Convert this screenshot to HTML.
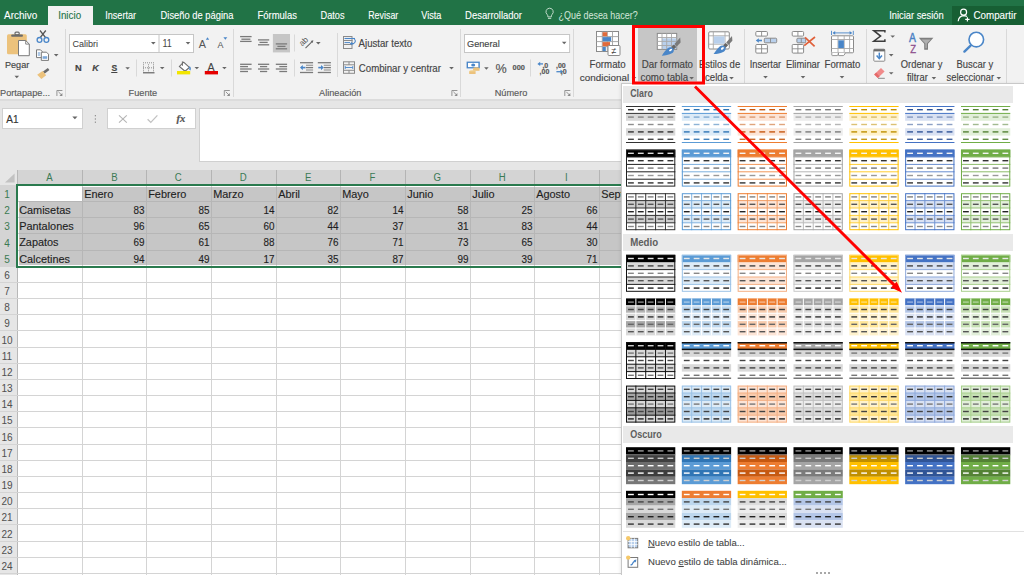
<!DOCTYPE html><html><head><meta charset="utf-8"><style>
html,body{margin:0;padding:0;}
body{width:1024px;height:575px;overflow:hidden;position:relative;background:#fff;font-family:"Liberation Sans", sans-serif;}
.r{position:absolute;}
.t{position:absolute;white-space:nowrap;line-height:1;}
</style></head><body><div class="r" style="left:0px;top:0px;width:1024px;height:25px;background:#217346;"></div><div class="r" style="left:48px;top:6px;width:45px;height:19px;background:#f2f2f2;"></div><div class="r" style="left:952px;top:6px;width:72px;height:19px;background:#175f34;"></div><div class="r" style="left:0px;top:25px;width:1024px;height:74px;background:#f2f2f2;"></div><div class="r" style="left:0px;top:99px;width:1024px;height:2px;background:#dcdcdc;"></div><div class="r" style="left:0px;top:101px;width:1024px;height:69px;background:#e6e6e6;"></div><div class="r" style="left:2px;top:108px;width:81px;height:21px;background:#ffffff;box-sizing:border-box;border:1px solid #d0d0d0;"></div><div class="r" style="left:107px;top:108px;width:89px;height:21px;background:#ffffff;box-sizing:border-box;border:1px solid #d0d0d0;"></div><div class="r" style="left:199px;top:108px;width:825px;height:54px;background:#ffffff;box-sizing:border-box;border:1px solid #d0d0d0;"></div><div class="r" style="left:0px;top:170px;width:1024px;height:15px;background:#d4d4d4;"></div><div class="r" style="left:0px;top:170px;width:17px;height:15px;background:#e6e6e6;"></div><div class="r" style="left:0px;top:185px;width:17px;height:390px;background:#e6e6e6;"></div><div class="r" style="left:0px;top:185px;width:17px;height:81px;background:#d4d4d4;"></div><div class="r" style="left:17px;top:170px;width:1px;height:405px;background:#b8b8b8;"></div><div class="r" style="left:18px;top:185px;width:1006px;height:390px;background:#ffffff;"></div><div class="r" style="left:18px;top:186px;width:1006px;height:80px;background:#ffffff;"></div><div class="r" style="left:19px;top:187px;width:1005px;height:78px;background:#c6c6c6;"></div><div class="r" style="left:82px;top:170px;width:1px;height:405px;background:#d4d4d4"></div><div class="r" style="left:146px;top:170px;width:1px;height:405px;background:#d4d4d4"></div><div class="r" style="left:211px;top:170px;width:1px;height:405px;background:#d4d4d4"></div><div class="r" style="left:276px;top:170px;width:1px;height:405px;background:#d4d4d4"></div><div class="r" style="left:340px;top:170px;width:1px;height:405px;background:#d4d4d4"></div><div class="r" style="left:405px;top:170px;width:1px;height:405px;background:#d4d4d4"></div><div class="r" style="left:470px;top:170px;width:1px;height:405px;background:#d4d4d4"></div><div class="r" style="left:534px;top:170px;width:1px;height:405px;background:#d4d4d4"></div><div class="r" style="left:599px;top:170px;width:1px;height:405px;background:#d4d4d4"></div><div class="r" style="left:664px;top:170px;width:1px;height:405px;background:#d4d4d4"></div><div class="r" style="left:728px;top:170px;width:1px;height:405px;background:#d4d4d4"></div><div class="r" style="left:793px;top:170px;width:1px;height:405px;background:#d4d4d4"></div><div class="r" style="left:858px;top:170px;width:1px;height:405px;background:#d4d4d4"></div><div class="r" style="left:922px;top:170px;width:1px;height:405px;background:#d4d4d4"></div><div class="r" style="left:987px;top:170px;width:1px;height:405px;background:#d4d4d4"></div><div class="r" style="left:0px;top:201px;width:1024px;height:1px;background:#d4d4d4"></div><div class="r" style="left:0px;top:217px;width:1024px;height:1px;background:#d4d4d4"></div><div class="r" style="left:0px;top:233px;width:1024px;height:1px;background:#d4d4d4"></div><div class="r" style="left:0px;top:250px;width:1024px;height:1px;background:#d4d4d4"></div><div class="r" style="left:0px;top:266px;width:1024px;height:1px;background:#d4d4d4"></div><div class="r" style="left:0px;top:282px;width:1024px;height:1px;background:#d4d4d4"></div><div class="r" style="left:0px;top:298px;width:1024px;height:1px;background:#d4d4d4"></div><div class="r" style="left:0px;top:314px;width:1024px;height:1px;background:#d4d4d4"></div><div class="r" style="left:0px;top:330px;width:1024px;height:1px;background:#d4d4d4"></div><div class="r" style="left:0px;top:347px;width:1024px;height:1px;background:#d4d4d4"></div><div class="r" style="left:0px;top:363px;width:1024px;height:1px;background:#d4d4d4"></div><div class="r" style="left:0px;top:379px;width:1024px;height:1px;background:#d4d4d4"></div><div class="r" style="left:0px;top:395px;width:1024px;height:1px;background:#d4d4d4"></div><div class="r" style="left:0px;top:411px;width:1024px;height:1px;background:#d4d4d4"></div><div class="r" style="left:0px;top:427px;width:1024px;height:1px;background:#d4d4d4"></div><div class="r" style="left:0px;top:444px;width:1024px;height:1px;background:#d4d4d4"></div><div class="r" style="left:0px;top:460px;width:1024px;height:1px;background:#d4d4d4"></div><div class="r" style="left:0px;top:476px;width:1024px;height:1px;background:#d4d4d4"></div><div class="r" style="left:0px;top:492px;width:1024px;height:1px;background:#d4d4d4"></div><div class="r" style="left:0px;top:508px;width:1024px;height:1px;background:#d4d4d4"></div><div class="r" style="left:0px;top:524px;width:1024px;height:1px;background:#d4d4d4"></div><div class="r" style="left:0px;top:541px;width:1024px;height:1px;background:#d4d4d4"></div><div class="r" style="left:0px;top:557px;width:1024px;height:1px;background:#d4d4d4"></div><div class="r" style="left:0px;top:573px;width:1024px;height:1px;background:#d4d4d4"></div><div class="r" style="left:82px;top:187px;width:1px;height:78px;background:#b6b6b6;"></div><div class="r" style="left:146px;top:187px;width:1px;height:78px;background:#b6b6b6;"></div><div class="r" style="left:211px;top:187px;width:1px;height:78px;background:#b6b6b6;"></div><div class="r" style="left:276px;top:187px;width:1px;height:78px;background:#b6b6b6;"></div><div class="r" style="left:340px;top:187px;width:1px;height:78px;background:#b6b6b6;"></div><div class="r" style="left:405px;top:187px;width:1px;height:78px;background:#b6b6b6;"></div><div class="r" style="left:470px;top:187px;width:1px;height:78px;background:#b6b6b6;"></div><div class="r" style="left:534px;top:187px;width:1px;height:78px;background:#b6b6b6;"></div><div class="r" style="left:599px;top:187px;width:1px;height:78px;background:#b6b6b6;"></div><div class="r" style="left:664px;top:187px;width:1px;height:78px;background:#b6b6b6;"></div><div class="r" style="left:728px;top:187px;width:1px;height:78px;background:#b6b6b6;"></div><div class="r" style="left:793px;top:187px;width:1px;height:78px;background:#b6b6b6;"></div><div class="r" style="left:858px;top:187px;width:1px;height:78px;background:#b6b6b6;"></div><div class="r" style="left:922px;top:187px;width:1px;height:78px;background:#b6b6b6;"></div><div class="r" style="left:987px;top:187px;width:1px;height:78px;background:#b6b6b6;"></div><div class="r" style="left:19px;top:201px;width:1005px;height:1px;background:#b6b6b6;"></div><div class="r" style="left:19px;top:217px;width:1005px;height:1px;background:#b6b6b6;"></div><div class="r" style="left:19px;top:233px;width:1005px;height:1px;background:#b6b6b6;"></div><div class="r" style="left:19px;top:250px;width:1005px;height:1px;background:#b6b6b6;"></div><div class="r" style="left:18px;top:186px;width:64px;height:15px;background:#ffffff;"></div><div class="r" style="left:82px;top:170px;width:1px;height:15px;background:#b4b4b4;"></div><div class="r" style="left:146px;top:170px;width:1px;height:15px;background:#b4b4b4;"></div><div class="r" style="left:211px;top:170px;width:1px;height:15px;background:#b4b4b4;"></div><div class="r" style="left:276px;top:170px;width:1px;height:15px;background:#b4b4b4;"></div><div class="r" style="left:340px;top:170px;width:1px;height:15px;background:#b4b4b4;"></div><div class="r" style="left:405px;top:170px;width:1px;height:15px;background:#b4b4b4;"></div><div class="r" style="left:470px;top:170px;width:1px;height:15px;background:#b4b4b4;"></div><div class="r" style="left:534px;top:170px;width:1px;height:15px;background:#b4b4b4;"></div><div class="r" style="left:599px;top:170px;width:1px;height:15px;background:#b4b4b4;"></div><div class="r" style="left:664px;top:170px;width:1px;height:15px;background:#b4b4b4;"></div><div class="r" style="left:728px;top:170px;width:1px;height:15px;background:#b4b4b4;"></div><div class="r" style="left:793px;top:170px;width:1px;height:15px;background:#b4b4b4;"></div><div class="r" style="left:858px;top:170px;width:1px;height:15px;background:#b4b4b4;"></div><div class="r" style="left:922px;top:170px;width:1px;height:15px;background:#b4b4b4;"></div><div class="r" style="left:987px;top:170px;width:1px;height:15px;background:#b4b4b4;"></div><div class="r" style="left:16px;top:184px;width:1008px;height:2px;background:#2a7a4e;"></div><div class="r" style="left:16px;top:184px;width:2px;height:84px;background:#2a7a4e;"></div><div class="r" style="left:16px;top:266px;width:1008px;height:2px;background:#2a7a4e;"></div><svg class="r" style="left:0;top:0" width="1024" height="200" viewBox="0 0 1024 200"><line x1="65.5" y1="29" x2="65.5" y2="97" stroke="#d9d9d9" stroke-width="1" stroke-linecap="butt"/><line x1="233.5" y1="29" x2="233.5" y2="97" stroke="#d9d9d9" stroke-width="1" stroke-linecap="butt"/><line x1="460.5" y1="29" x2="460.5" y2="97" stroke="#d9d9d9" stroke-width="1" stroke-linecap="butt"/><line x1="573.5" y1="29" x2="573.5" y2="97" stroke="#d9d9d9" stroke-width="1" stroke-linecap="butt"/><line x1="744.5" y1="29" x2="744.5" y2="97" stroke="#d9d9d9" stroke-width="1" stroke-linecap="butt"/><line x1="866.5" y1="29" x2="866.5" y2="97" stroke="#d9d9d9" stroke-width="1" stroke-linecap="butt"/><line x1="1006.5" y1="29" x2="1006.5" y2="97" stroke="#d9d9d9" stroke-width="1" stroke-linecap="butt"/><line x1="136.5" y1="59.5" x2="136.5" y2="76.5" stroke="#d9d9d9" stroke-width="1" stroke-linecap="butt"/><line x1="171.5" y1="59.5" x2="171.5" y2="76.5" stroke="#d9d9d9" stroke-width="1" stroke-linecap="butt"/><line x1="294.5" y1="34.5" x2="294.5" y2="51.5" stroke="#d9d9d9" stroke-width="1" stroke-linecap="butt"/><line x1="294.5" y1="59.5" x2="294.5" y2="76.5" stroke="#d9d9d9" stroke-width="1" stroke-linecap="butt"/><line x1="337.5" y1="33" x2="337.5" y2="77" stroke="#d9d9d9" stroke-width="1" stroke-linecap="butt"/><line x1="530.5" y1="59.5" x2="530.5" y2="76.5" stroke="#d9d9d9" stroke-width="1" stroke-linecap="butt"/><rect x="7" y="34.3" width="19.8" height="20" rx="1.5" fill="#ecc27c" /><rect x="11.2" y="34.4" width="11.7" height="2.4" rx="0.8" fill="#6b6b6b" /><rect x="15.0" y="32.2" width="4.2" height="2.6" rx="1" fill="none" stroke="#6b6b6b" stroke-width="1.2" /><path d="M18.5,40.5 h7.2 l3.6,3.6 v11.6 h-10.8 z" fill="#ffffff" stroke="#7a7a7a" stroke-width="1"/><path d="M25.7,40.5 v3.6 h3.6" fill="none" stroke="#7a7a7a" stroke-width="0.9"/><polygon points="14.50,75.85 19.10,75.85 16.80,78.15" fill="#666666"/><line x1="40" y1="30.5" x2="45.6" y2="37.6" stroke="#555555" stroke-width="1.3" stroke-linecap="butt"/><line x1="45.8" y1="30.5" x2="40.2" y2="37.6" stroke="#555555" stroke-width="1.3" stroke-linecap="butt"/><circle cx="39.5" cy="39.9" r="2.4" fill="none" stroke="#4a86c8" stroke-width="1.3"/><circle cx="46.4" cy="39.9" r="2.4" fill="none" stroke="#4a86c8" stroke-width="1.3"/><path d="M36.5,49.8 h4 l1.8,1.8 v6 h-5.8 z" fill="#fff" stroke="#7a7a7a" stroke-width="1"/><line x1="37.8" y1="53" x2="40.2" y2="53" stroke="#4a86c8" stroke-width="0.9" stroke-linecap="butt"/><line x1="37.8" y1="55" x2="40.2" y2="55" stroke="#4a86c8" stroke-width="0.9" stroke-linecap="butt"/><path d="M41.3,52.2 h5.2 l2,2 v6.2 h-7.2 z" fill="#fff" stroke="#7a7a7a" stroke-width="1"/><rect x="42.6" y="56.2" width="4.6" height="2.6" rx="0" fill="#7ea9d9" /><polygon points="53.90,54.00 58.50,54.00 56.20,56.40" fill="#666666"/><line x1="48.6" y1="69" x2="43.8" y2="72.6" stroke="#6b6b6b" stroke-width="2.6" stroke-linecap="butt"/><polygon points="37.2,74.8 42.6,71.0 46.2,75.2 41.4,79.0" fill="#ecc27c"/><path d="M56.9,96 v-5.5 h5.5" fill="none" stroke="#8a8a8a" stroke-width="0.9"/><line x1="58.4" y1="91.8" x2="62.0" y2="95.4" stroke="#8a8a8a" stroke-width="0.9" stroke-linecap="butt"/><polygon points="62.4,96 59.4,96 62.4,93" fill="#8a8a8a"/><path d="M224.3,96 v-5.5 h5.5" fill="none" stroke="#8a8a8a" stroke-width="0.9"/><line x1="225.8" y1="91.8" x2="229.4" y2="95.4" stroke="#8a8a8a" stroke-width="0.9" stroke-linecap="butt"/><polygon points="229.8,96 226.8,96 229.8,93" fill="#8a8a8a"/><path d="M451.9,96 v-5.5 h5.5" fill="none" stroke="#8a8a8a" stroke-width="0.9"/><line x1="453.4" y1="91.8" x2="457.0" y2="95.4" stroke="#8a8a8a" stroke-width="0.9" stroke-linecap="butt"/><polygon points="457.4,96 454.4,96 457.4,93" fill="#8a8a8a"/><path d="M564.8,96 v-5.5 h5.5" fill="none" stroke="#8a8a8a" stroke-width="0.9"/><line x1="566.3" y1="91.8" x2="569.9" y2="95.4" stroke="#8a8a8a" stroke-width="0.9" stroke-linecap="butt"/><polygon points="570.3,96 567.3,96 570.3,93" fill="#8a8a8a"/><rect x="69.5" y="34.5" width="124" height="18" rx="0" fill="#ffffff" stroke="#c6c6c6" stroke-width="1" /><line x1="159" y1="34.5" x2="159" y2="52.5" stroke="#c6c6c6" stroke-width="1" stroke-linecap="butt"/><polygon points="151.00,42.00 155.60,42.00 153.30,44.40" fill="#666666"/><polygon points="185.70,42.00 190.30,42.00 188.00,44.40" fill="#666666"/><polygon points="205.8,39.7 209.2,39.7 207.5,37.2" fill="#4a86c8"/><polygon points="223.4,37.2 227.3,37.2 225.35,39.7" fill="#4a86c8"/><rect x="111.2" y="72.0" width="6.2" height="1.0" rx="0" fill="#444444" /><polygon points="125.30,67.20 129.90,67.20 127.60,69.60" fill="#666666"/><g fill="#8f8f8f"><rect x="143.0" y="62.3" width="1" height="1"/><rect x="145.0" y="62.3" width="1" height="1"/><rect x="147.0" y="62.3" width="1" height="1"/><rect x="149.0" y="62.3" width="1" height="1"/><rect x="151.0" y="62.3" width="1" height="1"/><rect x="153.0" y="62.3" width="1" height="1"/><rect x="143.0" y="67.3" width="1" height="1"/><rect x="145.0" y="67.3" width="1" height="1"/><rect x="147.0" y="67.3" width="1" height="1"/><rect x="149.0" y="67.3" width="1" height="1"/><rect x="151.0" y="67.3" width="1" height="1"/><rect x="153.0" y="67.3" width="1" height="1"/><rect x="143.0" y="64.3" width="1" height="1"/><rect x="143.0" y="66.3" width="1" height="1"/><rect x="143.0" y="68.3" width="1" height="1"/><rect x="143.0" y="70.3" width="1" height="1"/><rect x="148.0" y="64.3" width="1" height="1"/><rect x="148.0" y="66.3" width="1" height="1"/><rect x="148.0" y="68.3" width="1" height="1"/><rect x="148.0" y="70.3" width="1" height="1"/><rect x="153.0" y="64.3" width="1" height="1"/><rect x="153.0" y="66.3" width="1" height="1"/><rect x="153.0" y="68.3" width="1" height="1"/><rect x="153.0" y="70.3" width="1" height="1"/></g><line x1="143" y1="72.8" x2="154.5" y2="72.8" stroke="#555555" stroke-width="1.1" stroke-linecap="butt"/><polygon points="159.90,66.90 164.50,66.90 162.20,69.30" fill="#666666"/><polygon points="183.6,62.2 189.4,67.4 185.0,71.2 179.4,66.4" fill="#ffffff" stroke="#6b6b6b" stroke-width="1.1"/><line x1="182.4" y1="61.4" x2="182.4" y2="65.8" stroke="#6b6b6b" stroke-width="1.0" stroke-linecap="butt"/><path d="M189.3,66.8 q1.6,1.6 0.6,3.4" fill="none" stroke="#4a86c8" stroke-width="1.6"/><rect x="177" y="71" width="13.2" height="3.4" rx="0" fill="#f2e500" /><polygon points="194.50,66.90 199.10,66.90 196.80,69.30" fill="#666666"/><rect x="204.8" y="71" width="13.2" height="3.4" rx="0" fill="#e60000" /><polygon points="222.10,66.90 226.70,66.90 224.40,69.30" fill="#666666"/><line x1="240.1" y1="36.6" x2="251.6" y2="36.6" stroke="#7a7a7a" stroke-width="1.3" stroke-linecap="butt"/><line x1="241.4" y1="39.2" x2="250.4" y2="39.2" stroke="#7a7a7a" stroke-width="1.3" stroke-linecap="butt"/><line x1="240.1" y1="41.4" x2="251.6" y2="41.4" stroke="#7a7a7a" stroke-width="1.3" stroke-linecap="butt"/><line x1="258" y1="39.9" x2="269.2" y2="39.9" stroke="#7a7a7a" stroke-width="1.3" stroke-linecap="butt"/><line x1="259.5" y1="42.4" x2="267.7" y2="42.4" stroke="#7a7a7a" stroke-width="1.3" stroke-linecap="butt"/><line x1="258" y1="44.8" x2="269.2" y2="44.8" stroke="#7a7a7a" stroke-width="1.3" stroke-linecap="butt"/><rect x="272.9" y="34" width="17.1" height="18.4" rx="0" fill="#c6c6c6" /><line x1="275.8" y1="43.9" x2="287.1" y2="43.9" stroke="#7a7a7a" stroke-width="1.3" stroke-linecap="butt"/><line x1="277.4" y1="46.4" x2="285.5" y2="46.4" stroke="#7a7a7a" stroke-width="1.3" stroke-linecap="butt"/><line x1="275.8" y1="48.8" x2="287.1" y2="48.8" stroke="#7a7a7a" stroke-width="1.3" stroke-linecap="butt"/><line x1="240.1" y1="64.3" x2="251.6" y2="64.3" stroke="#7a7a7a" stroke-width="1.3" stroke-linecap="butt"/><line x1="240.1" y1="66.6" x2="248" y2="66.6" stroke="#7a7a7a" stroke-width="1.3" stroke-linecap="butt"/><line x1="240.1" y1="69" x2="251.6" y2="69" stroke="#7a7a7a" stroke-width="1.3" stroke-linecap="butt"/><line x1="240.1" y1="71.5" x2="248" y2="71.5" stroke="#7a7a7a" stroke-width="1.3" stroke-linecap="butt"/><line x1="258" y1="64.3" x2="269.2" y2="64.3" stroke="#7a7a7a" stroke-width="1.3" stroke-linecap="butt"/><line x1="260" y1="66.6" x2="267.2" y2="66.6" stroke="#7a7a7a" stroke-width="1.3" stroke-linecap="butt"/><line x1="258" y1="69" x2="269.2" y2="69" stroke="#7a7a7a" stroke-width="1.3" stroke-linecap="butt"/><line x1="260" y1="71.5" x2="267.2" y2="71.5" stroke="#7a7a7a" stroke-width="1.3" stroke-linecap="butt"/><line x1="275.8" y1="64.3" x2="287.1" y2="64.3" stroke="#7a7a7a" stroke-width="1.3" stroke-linecap="butt"/><line x1="279.3" y1="66.6" x2="287.1" y2="66.6" stroke="#7a7a7a" stroke-width="1.3" stroke-linecap="butt"/><line x1="275.8" y1="69" x2="287.1" y2="69" stroke="#7a7a7a" stroke-width="1.3" stroke-linecap="butt"/><line x1="279.3" y1="71.5" x2="287.1" y2="71.5" stroke="#7a7a7a" stroke-width="1.3" stroke-linecap="butt"/><text x="0" y="0" transform="translate(302.2,46.6) rotate(-45)" font-family="Liberation Sans" font-size="8.2" fill="#555555">ab</text><line x1="305.5" y1="48.2" x2="312.6" y2="41.1" stroke="#666666" stroke-width="1.1" stroke-linecap="butt"/><polygon points="313.4,40.3 310.6,41.0 312.7,43.1" fill="#666666"/><polygon points="316.00,42.00 320.60,42.00 318.30,44.40" fill="#666666"/><line x1="300" y1="62.7" x2="313.1" y2="62.7" stroke="#7a7a7a" stroke-width="1.3" stroke-linecap="butt"/><line x1="306" y1="65.3" x2="313.1" y2="65.3" stroke="#a0a0a0" stroke-width="1.3" stroke-linecap="butt"/><line x1="306" y1="67.6" x2="313.1" y2="67.6" stroke="#7a7a7a" stroke-width="1.3" stroke-linecap="butt"/><line x1="306" y1="70.0" x2="313.1" y2="70.0" stroke="#a0a0a0" stroke-width="1.3" stroke-linecap="butt"/><line x1="300" y1="72.5" x2="313.1" y2="72.5" stroke="#7a7a7a" stroke-width="1.3" stroke-linecap="butt"/><line x1="301.5" y1="67.6" x2="305.5" y2="67.6" stroke="#4a86c8" stroke-width="1.6" stroke-linecap="butt"/><polygon points="300,67.6 302.8,65.0 302.8,70.2" fill="#4a86c8"/><line x1="317.8" y1="62.7" x2="330.90000000000003" y2="62.7" stroke="#7a7a7a" stroke-width="1.3" stroke-linecap="butt"/><line x1="323.8" y1="65.3" x2="330.90000000000003" y2="65.3" stroke="#a0a0a0" stroke-width="1.3" stroke-linecap="butt"/><line x1="323.8" y1="67.6" x2="330.90000000000003" y2="67.6" stroke="#7a7a7a" stroke-width="1.3" stroke-linecap="butt"/><line x1="323.8" y1="70.0" x2="330.90000000000003" y2="70.0" stroke="#a0a0a0" stroke-width="1.3" stroke-linecap="butt"/><line x1="317.8" y1="72.5" x2="330.90000000000003" y2="72.5" stroke="#7a7a7a" stroke-width="1.3" stroke-linecap="butt"/><line x1="318.3" y1="67.6" x2="321.8" y2="67.6" stroke="#4a86c8" stroke-width="1.6" stroke-linecap="butt"/><polygon points="323.8,67.6 321.0,65.0 321.0,70.2" fill="#4a86c8"/><rect x="343.5" y="36.5" width="8.5" height="4" rx="0" fill="none" stroke="#8a8a8a" stroke-width="1" /><rect x="343.5" y="40.5" width="8.5" height="4" rx="0" fill="none" stroke="#8a8a8a" stroke-width="1" /><rect x="343.5" y="44.5" width="8.5" height="4" rx="0" fill="none" stroke="#8a8a8a" stroke-width="1" /><line x1="344.5" y1="38.5" x2="355" y2="38.5" stroke="#4a86c8" stroke-width="1.1" stroke-linecap="butt"/><line x1="344.5" y1="42.6" x2="350" y2="42.6" stroke="#4a86c8" stroke-width="1.0" stroke-linecap="butt"/><path d="M354.4,39 q2.2,2.6 -0.8,4.6 h-2.8" fill="none" stroke="#4a86c8" stroke-width="1.1"/><polygon points="349.8,43.6 352.2,41.8 352.2,45.4" fill="#4a86c8"/><rect x="343.5" y="61.8" width="11" height="11.5" rx="0" fill="none" stroke="#8a8a8a" stroke-width="1" /><line x1="343.5" y1="64.8" x2="354.5" y2="64.8" stroke="#8a8a8a" stroke-width="1" stroke-linecap="butt"/><line x1="343.5" y1="70.3" x2="354.5" y2="70.3" stroke="#8a8a8a" stroke-width="1" stroke-linecap="butt"/><line x1="349" y1="61.8" x2="349" y2="64.8" stroke="#8a8a8a" stroke-width="1" stroke-linecap="butt"/><line x1="349" y1="70.3" x2="349" y2="73.3" stroke="#8a8a8a" stroke-width="1" stroke-linecap="butt"/><line x1="345.2" y1="67.5" x2="352.8" y2="67.5" stroke="#4a86c8" stroke-width="0.9" stroke-linecap="butt"/><line x1="345.2" y1="66" x2="345.2" y2="69" stroke="#4a86c8" stroke-width="0.9" stroke-linecap="butt"/><line x1="352.8" y1="66" x2="352.8" y2="69" stroke="#4a86c8" stroke-width="0.9" stroke-linecap="butt"/><polygon points="449.20,67.00 453.80,67.00 451.50,69.40" fill="#666666"/><rect x="464.5" y="34.5" width="105.1" height="18" rx="0" fill="#ffffff" stroke="#c6c6c6" stroke-width="1" /><polygon points="561.90,41.80 566.50,41.80 564.20,44.20" fill="#666666"/><rect x="466.6" y="61.6" width="13.2" height="6.8" rx="0" fill="#4a86c8" /><rect x="468.0" y="62.9" width="10.4" height="4.2" rx="0" fill="#ffffff" /><ellipse cx="473.2" cy="65" rx="2" ry="1.6" fill="#4a86c8"/><ellipse cx="476.3" cy="68.6" rx="3.2" ry="1.4" fill="#ecc27c"/><rect x="473.1" y="68.6" width="6.4" height="2.2" fill="#ecc27c"/><ellipse cx="472.4" cy="71.6" rx="3.2" ry="1.4" fill="#f0cf8e"/><rect x="469.2" y="71.6" width="6.4" height="2.4" fill="#ecc27c"/><polygon points="484.10,67.30 488.70,67.30 486.40,69.70" fill="#666666"/><polygon points="537.4,63.9 540.2,61.7 540.2,66.1" fill="#4a86c8"/><line x1="539.5" y1="63.9" x2="543" y2="63.9" stroke="#4a86c8" stroke-width="1.3" stroke-linecap="butt"/><polygon points="563.3,71.7 560.5,69.5 560.5,73.9" fill="#4a86c8"/><line x1="556.4" y1="71.7" x2="561" y2="71.7" stroke="#4a86c8" stroke-width="1.3" stroke-linecap="butt"/><rect x="596.5" y="31.5" width="22" height="20" rx="0" fill="#ffffff" stroke="#8a8a8a" stroke-width="1" /><line x1="596.5" y1="36.6" x2="618.5" y2="36.6" stroke="#a0a0a0" stroke-width="0.9" stroke-linecap="butt"/><line x1="596.5" y1="41.6" x2="618.5" y2="41.6" stroke="#a0a0a0" stroke-width="0.9" stroke-linecap="butt"/><line x1="596.5" y1="46.6" x2="618.5" y2="46.6" stroke="#a0a0a0" stroke-width="0.9" stroke-linecap="butt"/><line x1="602.3" y1="31.5" x2="602.3" y2="51.5" stroke="#a0a0a0" stroke-width="0.9" stroke-linecap="butt"/><line x1="607.3" y1="31.5" x2="607.3" y2="51.5" stroke="#a0a0a0" stroke-width="0.9" stroke-linecap="butt"/><line x1="612.5" y1="31.5" x2="612.5" y2="51.5" stroke="#a0a0a0" stroke-width="0.9" stroke-linecap="butt"/><rect x="602.6" y="32.2" width="4.6" height="4.0" rx="0" fill="#e06a3b" /><rect x="602.6" y="37.1" width="8.6" height="4.1" rx="0" fill="#4a86c8" /><rect x="602.6" y="42.1" width="7.4" height="4.1" rx="0" fill="#e06a3b" /><rect x="602.6" y="47.0" width="3.2" height="4.1" rx="0" fill="#4a86c8" /><rect x="608" y="45.5" width="12" height="10" rx="1" fill="#ffffff" stroke="#8a8a8a" stroke-width="1" /><text x="614" y="53.6" text-anchor="middle" font-family="Liberation Sans" font-size="9" fill="#444">≠</text><rect x="638" y="27" width="59" height="54.5" rx="0" fill="#c6c6c6" /><rect x="657.3" y="33.4" width="19.4" height="16" rx="0" fill="#ffffff" stroke="#8a8a8a" stroke-width="1" /><rect x="662" y="38.3" width="14.2" height="10.7" rx="0" fill="#b9d0ec" /><line x1="657.3" y1="37.5" x2="676.7" y2="37.5" stroke="#a8a8a8" stroke-width="0.9" stroke-linecap="butt"/><line x1="657.3" y1="41.4" x2="676.7" y2="41.4" stroke="#a8a8a8" stroke-width="0.9" stroke-linecap="butt"/><line x1="657.3" y1="45.5" x2="676.7" y2="45.5" stroke="#a8a8a8" stroke-width="0.9" stroke-linecap="butt"/><line x1="662.0" y1="33.4" x2="662.0" y2="49.4" stroke="#a8a8a8" stroke-width="0.9" stroke-linecap="butt"/><line x1="666.7" y1="33.4" x2="666.7" y2="49.4" stroke="#a8a8a8" stroke-width="0.9" stroke-linecap="butt"/><line x1="671.5" y1="33.4" x2="671.5" y2="49.4" stroke="#a8a8a8" stroke-width="0.9" stroke-linecap="butt"/><g transform="translate(0,0)"><polygon points="680.2,37.6 680.6,42.4 676.8,46.4 674.4,44.0" fill="#7a7a7a"/><polygon points="673.9,44.5 676.3,46.9 673.7,49.5 671.3,47.1" fill="#666666"/><path d="M671.2,47.2 C674.4,48.0 674.8,51.6 671.9,53.3 C669.1,54.9 665.1,55.5 661.8,55.7 C663.6,52.7 665.8,49.9 667.6,48.3 C668.7,47.4 669.9,47.0 671.2,47.2 Z" fill="#4a86c8"/><ellipse cx="670.6" cy="50.0" rx="1.7" ry="1.0" fill="#ffffff" transform="rotate(-35 670.6 50.0)"/></g><rect x="708.7" y="31.8" width="20.6" height="17.2" rx="1.2" fill="#ffffff" stroke="#8a8a8a" stroke-width="1" /><line x1="708.7" y1="35.8" x2="729.3" y2="35.8" stroke="#a8a8a8" stroke-width="0.9" stroke-linecap="butt"/><line x1="708.7" y1="44.2" x2="729.3" y2="44.2" stroke="#a8a8a8" stroke-width="0.9" stroke-linecap="butt"/><line x1="713.3" y1="31.8" x2="713.3" y2="49" stroke="#a8a8a8" stroke-width="0.9" stroke-linecap="butt"/><line x1="725" y1="31.8" x2="725" y2="49" stroke="#a8a8a8" stroke-width="0.9" stroke-linecap="butt"/><rect x="713.8" y="36.3" width="10.8" height="7.4" rx="0" fill="#b9d0ec" /><g transform="translate(51.8,-1.6)"><polygon points="680.2,37.6 680.6,42.4 676.8,46.4 674.4,44.0" fill="#7a7a7a"/><polygon points="673.9,44.5 676.3,46.9 673.7,49.5 671.3,47.1" fill="#666666"/><path d="M671.2,47.2 C674.4,48.0 674.8,51.6 671.9,53.3 C669.1,54.9 665.1,55.5 661.8,55.7 C663.6,52.7 665.8,49.9 667.6,48.3 C668.7,47.4 669.9,47.0 671.2,47.2 Z" fill="#4a86c8"/><ellipse cx="670.6" cy="50.0" rx="1.7" ry="1.0" fill="#ffffff" transform="rotate(-35 670.6 50.0)"/></g><polygon points="729.20,77.10 733.80,77.10 731.50,79.50" fill="#666666"/><polygon points="689.30,77.10 693.90,77.10 691.60,79.50" fill="#666666"/><polygon points="631.70,77.10 636.30,77.10 634.00,79.50" fill="#666666"/><rect x="755.8" y="31.5" width="11.6" height="4.6" rx="1" fill="#ffffff" stroke="#8a8a8a" stroke-width="1" /><line x1="761.5999999999999" y1="31.5" x2="761.5999999999999" y2="36.1" stroke="#8a8a8a" stroke-width="0.9" stroke-linecap="butt"/><rect x="764.3" y="38.2" width="12.4" height="4.6" rx="1" fill="#b9d0ec" stroke="#8a8a8a" stroke-width="1" /><line x1="770.5" y1="38.2" x2="770.5" y2="42.800000000000004" stroke="#8a8a8a" stroke-width="0.9" stroke-linecap="butt"/><line x1="758.2" y1="40.5" x2="762" y2="40.5" stroke="#4a86c8" stroke-width="1.6" stroke-linecap="butt"/><polygon points="755.8,40.5 758.8,38.2 758.8,42.8" fill="#4a86c8"/><rect x="755.8" y="44.5" width="11.6" height="8.6" rx="1" fill="#ffffff" stroke="#8a8a8a" stroke-width="1" /><line x1="755.8" y1="48.8" x2="767.4" y2="48.8" stroke="#8a8a8a" stroke-width="0.9" stroke-linecap="butt"/><line x1="761.5999999999999" y1="44.5" x2="761.5999999999999" y2="53.1" stroke="#8a8a8a" stroke-width="0.9" stroke-linecap="butt"/><polygon points="763.20,76.00 767.80,76.00 765.50,78.40" fill="#666666"/><rect x="792.2" y="31.5" width="11.4" height="4.6" rx="1" fill="#ffffff" stroke="#8a8a8a" stroke-width="1" /><line x1="797.9000000000001" y1="31.5" x2="797.9000000000001" y2="36.1" stroke="#8a8a8a" stroke-width="0.9" stroke-linecap="butt"/><rect x="796.9" y="38.2" width="8.8" height="4.6" rx="1" fill="#b9d0ec" stroke="#8a8a8a" stroke-width="1" /><line x1="801.3" y1="38.2" x2="801.3" y2="42.800000000000004" stroke="#8a8a8a" stroke-width="0.9" stroke-linecap="butt"/><rect x="792.2" y="44.5" width="11.4" height="8.6" rx="1" fill="#ffffff" stroke="#8a8a8a" stroke-width="1" /><line x1="792.2" y1="48.8" x2="803.6" y2="48.8" stroke="#8a8a8a" stroke-width="0.9" stroke-linecap="butt"/><line x1="797.9000000000001" y1="44.5" x2="797.9000000000001" y2="53.1" stroke="#8a8a8a" stroke-width="0.9" stroke-linecap="butt"/><line x1="804.2" y1="45.6" x2="815" y2="37.0" stroke="#e0603a" stroke-width="1.7" stroke-linecap="butt"/><line x1="805.0" y1="37.4" x2="814.6" y2="46.4" stroke="#e0603a" stroke-width="1.7" stroke-linecap="butt"/><polygon points="800.70,76.00 805.30,76.00 803.00,78.40" fill="#666666"/><line x1="831.5" y1="30.8" x2="831.5" y2="35.0" stroke="#4a86c8" stroke-width="0.9" stroke-linecap="butt"/><line x1="853.3" y1="30.8" x2="853.3" y2="35.0" stroke="#4a86c8" stroke-width="0.9" stroke-linecap="butt"/><line x1="833.5" y1="32.9" x2="851.3" y2="32.9" stroke="#4a86c8" stroke-width="0.9" stroke-linecap="butt"/><polygon points="832.6,32.9 835.2,31.0 835.2,34.8" fill="#4a86c8"/><polygon points="852.2,32.9 849.6,31.0 849.6,34.8" fill="#4a86c8"/><rect x="831.5" y="35.8" width="22" height="17" rx="1" fill="#ffffff" stroke="#8a8a8a" stroke-width="1" /><line x1="831.5" y1="39.5" x2="853.5" y2="39.5" stroke="#a8a8a8" stroke-width="0.9" stroke-linecap="butt"/><line x1="831.5" y1="48.5" x2="853.5" y2="48.5" stroke="#a8a8a8" stroke-width="0.9" stroke-linecap="butt"/><line x1="838" y1="35.8" x2="838" y2="52.8" stroke="#a8a8a8" stroke-width="0.9" stroke-linecap="butt"/><line x1="844.2" y1="35.8" x2="844.2" y2="52.8" stroke="#a8a8a8" stroke-width="0.9" stroke-linecap="butt"/><line x1="849.6" y1="35.8" x2="849.6" y2="52.8" stroke="#a8a8a8" stroke-width="0.9" stroke-linecap="butt"/><rect x="838.3" y="40.3" width="5.6" height="7.8" rx="0" fill="#4a86c8" /><path d="M831.8,52.8 v2.2 q0,0.6 0.6,0.6 h4.8 q0.6,0 0.8,-0.6 l0.6,-2.2 M838.4,52.8 v2.2 q0,0.6 0.6,0.6 h4.2 q0.6,0 1,-0.6 l1.2,-2.2" fill="#fff" stroke="#8a8a8a" stroke-width="0.9"/><polygon points="839.70,76.00 844.30,76.00 842.00,78.40" fill="#666666"/><path d="M884.9,32.4 V30.7 H873.8 L880.6,36.1 L873.8,41.2 H884.9 V39.3" fill="none" stroke="#3c3c3c" stroke-width="1.5" stroke-linejoin="miter"/><polygon points="890.40,35.40 895.00,35.40 892.70,37.80" fill="#666666"/><rect x="873.8" y="49.2" width="11" height="12" rx="0.8" fill="#ffffff" stroke="#8a8a8a" stroke-width="1" /><rect x="873.8" y="49.2" width="11" height="2.2" rx="0" fill="#6b6b6b" /><line x1="879.3" y1="52.6" x2="879.3" y2="58.2" stroke="#4a86c8" stroke-width="1.5" stroke-linecap="butt"/><polyline points="876.6,55.6 879.3,58.6 882.0,55.6" fill="none" stroke="#4a86c8" stroke-width="1.5"/><polygon points="888.90,54.10 893.50,54.10 891.20,56.50" fill="#666666"/><polygon points="874.2,74.4 881.0,68.0 884.6,71.6 877.8,78.0" fill="#f08a8a"/><polygon points="874.2,74.4 876.2,72.6 879.6,76.4 877.8,78.0" fill="#e46a6a"/><line x1="878" y1="78.3" x2="884.8" y2="78.3" stroke="#8a8a8a" stroke-width="1" stroke-linecap="butt"/><polygon points="888.90,72.20 893.50,72.20 891.20,74.60" fill="#666666"/><path d="M918.8,37.8 h14.6 l-5.4,6.0 v6.0 h-3.8 v-6.0 z" fill="#7e7e7e"/><path d="M921.4,39.4 h9.4 l-4.0,4.2 v4.6 h-1.4 v-4.6 z" fill="#b0b0b0"/><polygon points="931.60,77.10 936.20,77.10 933.90,79.50" fill="#666666"/><circle cx="976.3" cy="39.6" r="7.3" fill="#ffffff" stroke="#4a86c8" stroke-width="1.6"/><line x1="970.6" y1="45.6" x2="964.4" y2="51.6" stroke="#4a86c8" stroke-width="2.4" stroke-linecap="round"/><polygon points="996.50,77.10 1001.10,77.10 998.80,79.50" fill="#666666"/><path d="M549.6,8.2 a3.6,3.6 0 0 1 2.4,6.3 q-0.6,0.6 -0.6,1.6 v0.8 h-3.6 v-0.8 q0,-1 -0.6,-1.6 a3.6,3.6 0 0 1 2.4,-6.3 z" fill="none" stroke="#cfe3d6" stroke-width="0.9"/><line x1="548.0" y1="18.4" x2="551.2" y2="18.4" stroke="#cfe3d6" stroke-width="0.9" stroke-linecap="butt"/><circle cx="963.6" cy="12.2" r="3.0" fill="none" stroke="#ffffff" stroke-width="1.2"/><path d="M958.2,21.2 q0.6,-5.2 5.4,-5.6 q2,0 3.4,1.0" fill="none" stroke="#ffffff" stroke-width="1.2"/><line x1="967.4" y1="17.2" x2="967.4" y2="21.6" stroke="#ffffff" stroke-width="1.2" stroke-linecap="butt"/><line x1="965.2" y1="19.4" x2="969.6" y2="19.4" stroke="#ffffff" stroke-width="1.2" stroke-linecap="butt"/><polygon points="72.30,116.60 77.50,116.60 74.90,119.20" fill="#666666"/><rect x="94.8" y="115.10000000000001" width="1.2" height="1.2" rx="0" fill="#8a8a8a" /><rect x="94.8" y="118.4" width="1.2" height="1.2" rx="0" fill="#8a8a8a" /><rect x="94.8" y="121.60000000000001" width="1.2" height="1.2" rx="0" fill="#8a8a8a" /><line x1="119" y1="115.4" x2="126.8" y2="122.6" stroke="#b4b4b4" stroke-width="1.1" stroke-linecap="butt"/><line x1="126.8" y1="115.4" x2="119" y2="122.6" stroke="#b4b4b4" stroke-width="1.1" stroke-linecap="butt"/><polyline points="147.6,119.2 150.8,122.4 157.4,115.4" fill="none" stroke="#c2c2c2" stroke-width="1.3"/><polygon points="5,182.6 14.6,173.4 14.6,182.6" fill="#c2c2c2"/></svg><svg class="r" style="left:0;top:0;font-family:'Liberation Sans'" width="1024" height="575" viewBox="0 0 1024 575"><text x="4.00" y="19.00" font-size="10.40" fill="#ffffff" text-anchor="start" stroke="#ffffff" stroke-width="0.1" textLength="33.21" lengthAdjust="spacingAndGlyphs">Archivo</text><text x="105.20" y="19.00" font-size="10.40" fill="#ffffff" text-anchor="start" stroke="#ffffff" stroke-width="0.1" textLength="30.92" lengthAdjust="spacingAndGlyphs">Insertar</text><text x="160.60" y="19.00" font-size="10.40" fill="#ffffff" text-anchor="start" stroke="#ffffff" stroke-width="0.1" textLength="72.78" lengthAdjust="spacingAndGlyphs">Diseño de página</text><text x="257.50" y="19.00" font-size="10.40" fill="#ffffff" text-anchor="start" stroke="#ffffff" stroke-width="0.1" textLength="39.38" lengthAdjust="spacingAndGlyphs">Fórmulas</text><text x="320.50" y="19.00" font-size="10.40" fill="#ffffff" text-anchor="start" stroke="#ffffff" stroke-width="0.1" textLength="24.11" lengthAdjust="spacingAndGlyphs">Datos</text><text x="368.20" y="19.00" font-size="10.40" fill="#ffffff" text-anchor="start" stroke="#ffffff" stroke-width="0.1" textLength="30.10" lengthAdjust="spacingAndGlyphs">Revisar</text><text x="421.20" y="19.00" font-size="10.40" fill="#ffffff" text-anchor="start" stroke="#ffffff" stroke-width="0.1" textLength="20.20" lengthAdjust="spacingAndGlyphs">Vista</text><text x="465.10" y="19.00" font-size="10.40" fill="#ffffff" text-anchor="start" stroke="#ffffff" stroke-width="0.1" textLength="56.90" lengthAdjust="spacingAndGlyphs">Desarrollador</text><text x="58.20" y="19.00" font-size="10.40" fill="#217346" text-anchor="start" stroke="#217346" stroke-width="0.1" textLength="22.90" lengthAdjust="spacingAndGlyphs">Inicio</text><text x="558.60" y="19.00" font-size="10.00" fill="#cfe3d6" text-anchor="start" stroke="#cfe3d6" stroke-width="0.05" textLength="79.11" lengthAdjust="spacingAndGlyphs">¿Qué desea hacer?</text><text x="889.20" y="19.00" font-size="10.40" fill="#ffffff" text-anchor="start" stroke="#ffffff" stroke-width="0.1" textLength="54.51" lengthAdjust="spacingAndGlyphs">Iniciar sesión</text><text x="973.50" y="19.00" font-size="10.40" fill="#ffffff" text-anchor="start" stroke="#ffffff" stroke-width="0.1" textLength="42.98" lengthAdjust="spacingAndGlyphs">Compartir</text><text x="5.00" y="67.60" font-size="9.10" fill="#444444" text-anchor="start" stroke="#444444" stroke-width="0.15">Pegar</text><text x="0.00" y="95.90" font-size="9.20" fill="#5a5a5a" text-anchor="start" stroke="#5a5a5a" stroke-width="0.15">Portapape...</text><text x="128.60" y="95.90" font-size="9.20" fill="#5a5a5a" text-anchor="start" stroke="#5a5a5a" stroke-width="0.15">Fuente</text><text x="319.00" y="95.90" font-size="9.20" fill="#5a5a5a" text-anchor="start" stroke="#5a5a5a" stroke-width="0.15">Alineación</text><text x="494.70" y="95.90" font-size="9.20" fill="#5a5a5a" text-anchor="start" stroke="#5a5a5a" stroke-width="0.15">Número</text><text x="72.40" y="46.80" font-size="9.90" fill="#444444" text-anchor="start" stroke="#444444" stroke-width="0.06" textLength="25.51" lengthAdjust="spacingAndGlyphs">Calibri</text><text x="162.40" y="47.00" font-size="10.20" fill="#444444" text-anchor="start" textLength="9.34" lengthAdjust="spacingAndGlyphs">11</text><text x="198.80" y="47.60" font-size="11.20" fill="#555555" text-anchor="start" stroke="#555555" stroke-width="0.05" textLength="7.20" lengthAdjust="spacingAndGlyphs">A</text><text x="217.40" y="47.60" font-size="9.40" fill="#555555" text-anchor="start" stroke="#555555" stroke-width="0.05" textLength="5.94" lengthAdjust="spacingAndGlyphs">A</text><text x="74.90" y="70.90" font-size="9.90" fill="#444444" text-anchor="start" font-weight="bold" stroke="#444444" stroke-width="0.15" textLength="6.72" lengthAdjust="spacingAndGlyphs">N</text><text x="92.30" y="70.90" font-size="9.90" fill="#444444" text-anchor="start" font-weight="bold" font-style="italic" stroke="#444444" stroke-width="0.15" textLength="6.57" lengthAdjust="spacingAndGlyphs">K</text><text x="111.40" y="70.90" font-size="9.90" fill="#444444" text-anchor="start" font-weight="bold" stroke="#444444" stroke-width="0.15" textLength="5.74" lengthAdjust="spacingAndGlyphs">S</text><text x="207.60" y="71.00" font-size="11.60" fill="#444444" text-anchor="start" stroke="#444444" stroke-width="0.15" textLength="7.07" lengthAdjust="spacingAndGlyphs">A</text><text x="358.60" y="46.80" font-size="10.10" fill="#444444" text-anchor="start" stroke="#444444" stroke-width="0.15" textLength="53.47" lengthAdjust="spacingAndGlyphs">Ajustar texto</text><text x="358.80" y="71.70" font-size="10.10" fill="#444444" text-anchor="start" stroke="#444444" stroke-width="0.15" textLength="82.14" lengthAdjust="spacingAndGlyphs">Combinar y centrar</text><text x="467.00" y="46.80" font-size="9.20" fill="#444444" text-anchor="start" stroke="#444444" stroke-width="0.15">General</text><text x="495.60" y="73.20" font-size="12.60" fill="#555555" text-anchor="start" stroke="#555555" stroke-width="0.15">%</text><text x="512.60" y="70.30" font-size="7.40" fill="#555555" text-anchor="start" font-weight="bold" stroke="#555555" stroke-width="0.15">000</text><text x="542.40" y="68.00" font-size="7.00" fill="#555555" text-anchor="start" font-weight="bold" stroke="#555555" stroke-width="0.15">,0</text><text x="539.60" y="74.00" font-size="7.00" fill="#555555" text-anchor="start" font-weight="bold" stroke="#555555" stroke-width="0.15">,00</text><text x="556.00" y="68.00" font-size="7.00" fill="#555555" text-anchor="start" font-weight="bold" stroke="#555555" stroke-width="0.15">,00</text><text x="560.80" y="74.00" font-size="7.00" fill="#555555" text-anchor="start" font-weight="bold" stroke="#555555" stroke-width="0.15">,0</text><text x="607.60" y="68.00" font-size="10.10" fill="#444444" text-anchor="middle" stroke="#444444" stroke-width="0.15" textLength="36.00" lengthAdjust="spacingAndGlyphs">Formato</text><text x="579.80" y="80.80" font-size="9.90" fill="#444444" text-anchor="start" stroke="#444444" stroke-width="0.15">condicional</text><text x="667.40" y="68.00" font-size="10.10" fill="#444444" text-anchor="middle" stroke="#444444" stroke-width="0.15" textLength="51.21" lengthAdjust="spacingAndGlyphs">Dar formato</text><text x="640.60" y="80.80" font-size="10.10" fill="#444444" text-anchor="start" stroke="#444444" stroke-width="0.15" textLength="47.45" lengthAdjust="spacingAndGlyphs">como tabla</text><text x="699.00" y="68.00" font-size="10.10" fill="#444444" text-anchor="start" stroke="#444444" stroke-width="0.15" textLength="41.19" lengthAdjust="spacingAndGlyphs">Estilos de</text><text x="705.00" y="80.80" font-size="10.10" fill="#444444" text-anchor="start" stroke="#444444" stroke-width="0.15" textLength="22.95" lengthAdjust="spacingAndGlyphs">celda</text><text x="749.70" y="68.00" font-size="10.10" fill="#444444" text-anchor="start" stroke="#444444" stroke-width="0.15" textLength="31.53" lengthAdjust="spacingAndGlyphs">Insertar</text><text x="786.00" y="68.00" font-size="10.10" fill="#444444" text-anchor="start" stroke="#444444" stroke-width="0.15" textLength="33.99" lengthAdjust="spacingAndGlyphs">Eliminar</text><text x="824.60" y="68.00" font-size="10.10" fill="#444444" text-anchor="start" stroke="#444444" stroke-width="0.15" textLength="35.74" lengthAdjust="spacingAndGlyphs">Formato</text><text x="900.80" y="68.00" font-size="10.10" fill="#444444" text-anchor="start" stroke="#444444" stroke-width="0.15" textLength="41.57" lengthAdjust="spacingAndGlyphs">Ordenar y</text><text x="906.90" y="80.60" font-size="10.10" fill="#444444" text-anchor="start" stroke="#444444" stroke-width="0.15" textLength="20.89" lengthAdjust="spacingAndGlyphs">filtrar</text><text x="956.60" y="68.00" font-size="10.10" fill="#444444" text-anchor="start" stroke="#444444" stroke-width="0.15" textLength="36.57" lengthAdjust="spacingAndGlyphs">Buscar y</text><text x="946.50" y="80.60" font-size="10.10" fill="#444444" text-anchor="start" stroke="#444444" stroke-width="0.15" textLength="47.55" lengthAdjust="spacingAndGlyphs">seleccionar</text><text x="909.00" y="41.70" font-size="12.00" fill="#4a7fc4" text-anchor="start" stroke="#4a7fc4" stroke-width="0.45" textLength="6.94" lengthAdjust="spacingAndGlyphs">A</text><text x="910.20" y="53.40" font-size="11.40" fill="#8d4e8d" text-anchor="start" stroke="#8d4e8d" stroke-width="0.3" textLength="5.86" lengthAdjust="spacingAndGlyphs">Z</text><text x="6.30" y="122.80" font-size="10.00" fill="#333333" text-anchor="start" stroke="#333333" stroke-width="0.15">A1</text><text x="176.40" y="121.80" font-size="10.50" fill="#555555" text-anchor="start" font-weight="bold" font-style="italic" font-family="Liberation Serif" stroke="#555555" stroke-width="0.22">fx</text><text x="49.33" y="181.20" font-size="10.00" fill="#3a7a55" text-anchor="middle" textLength="6.40" lengthAdjust="spacingAndGlyphs">A</text><text x="114.33" y="181.20" font-size="10.00" fill="#3a7a55" text-anchor="middle" textLength="6.40" lengthAdjust="spacingAndGlyphs">B</text><text x="178.32" y="181.20" font-size="10.00" fill="#3a7a55" text-anchor="middle" textLength="6.93" lengthAdjust="spacingAndGlyphs">C</text><text x="243.32" y="181.20" font-size="10.00" fill="#3a7a55" text-anchor="middle" textLength="6.93" lengthAdjust="spacingAndGlyphs">D</text><text x="308.32" y="181.20" font-size="10.00" fill="#3a7a55" text-anchor="middle" textLength="6.40" lengthAdjust="spacingAndGlyphs">E</text><text x="372.32" y="181.20" font-size="10.00" fill="#3a7a55" text-anchor="middle" textLength="5.86" lengthAdjust="spacingAndGlyphs">F</text><text x="437.32" y="181.20" font-size="10.00" fill="#3a7a55" text-anchor="middle" textLength="7.47" lengthAdjust="spacingAndGlyphs">G</text><text x="502.32" y="181.20" font-size="10.00" fill="#3a7a55" text-anchor="middle" textLength="6.93" lengthAdjust="spacingAndGlyphs">H</text><text x="566.33" y="181.20" font-size="10.00" fill="#3a7a55" text-anchor="middle" textLength="2.67" lengthAdjust="spacingAndGlyphs">I</text><text x="631.33" y="181.20" font-size="10.00" fill="#3a7a55" text-anchor="middle" textLength="4.80" lengthAdjust="spacingAndGlyphs">J</text><text x="696.33" y="181.20" font-size="10.00" fill="#3a7a55" text-anchor="middle" textLength="6.40" lengthAdjust="spacingAndGlyphs">K</text><text x="760.33" y="181.20" font-size="10.00" fill="#3a7a55" text-anchor="middle" textLength="5.34" lengthAdjust="spacingAndGlyphs">L</text><text x="825.33" y="181.20" font-size="10.00" fill="#3a7a55" text-anchor="middle" textLength="8.00" lengthAdjust="spacingAndGlyphs">M</text><text x="890.33" y="181.20" font-size="10.00" fill="#3a7a55" text-anchor="middle" textLength="6.93" lengthAdjust="spacingAndGlyphs">N</text><text x="954.33" y="181.20" font-size="10.00" fill="#3a7a55" text-anchor="middle" textLength="7.47" lengthAdjust="spacingAndGlyphs">O</text><text x="1019.33" y="181.20" font-size="10.00" fill="#3a7a55" text-anchor="middle" textLength="6.40" lengthAdjust="spacingAndGlyphs">P</text><text x="7.00" y="198.03" font-size="10.00" fill="#3a7a52" text-anchor="middle" stroke="#3a7a52" stroke-width="0.03">1</text><text x="7.00" y="214.20" font-size="10.00" fill="#3a7a52" text-anchor="middle" stroke="#3a7a52" stroke-width="0.03">2</text><text x="7.00" y="230.37" font-size="10.00" fill="#3a7a52" text-anchor="middle" stroke="#3a7a52" stroke-width="0.03">3</text><text x="7.00" y="246.54" font-size="10.00" fill="#3a7a52" text-anchor="middle" stroke="#3a7a52" stroke-width="0.03">4</text><text x="7.00" y="262.71" font-size="10.00" fill="#3a7a52" text-anchor="middle" stroke="#3a7a52" stroke-width="0.03">5</text><text x="7.00" y="278.88" font-size="10.00" fill="#505050" text-anchor="middle" stroke="#505050" stroke-width="0.03">6</text><text x="7.00" y="295.05" font-size="10.00" fill="#505050" text-anchor="middle" stroke="#505050" stroke-width="0.03">7</text><text x="7.00" y="311.22" font-size="10.00" fill="#505050" text-anchor="middle" stroke="#505050" stroke-width="0.03">8</text><text x="7.00" y="327.39" font-size="10.00" fill="#505050" text-anchor="middle" stroke="#505050" stroke-width="0.03">9</text><text x="7.00" y="343.56" font-size="10.00" fill="#505050" text-anchor="middle" stroke="#505050" stroke-width="0.03">10</text><text x="7.00" y="359.73" font-size="10.00" fill="#505050" text-anchor="middle" stroke="#505050" stroke-width="0.03">11</text><text x="7.00" y="375.90" font-size="10.00" fill="#505050" text-anchor="middle" stroke="#505050" stroke-width="0.03">12</text><text x="7.00" y="392.07" font-size="10.00" fill="#505050" text-anchor="middle" stroke="#505050" stroke-width="0.03">13</text><text x="7.00" y="408.24" font-size="10.00" fill="#505050" text-anchor="middle" stroke="#505050" stroke-width="0.03">14</text><text x="7.00" y="424.41" font-size="10.00" fill="#505050" text-anchor="middle" stroke="#505050" stroke-width="0.03">15</text><text x="7.00" y="440.58" font-size="10.00" fill="#505050" text-anchor="middle" stroke="#505050" stroke-width="0.03">16</text><text x="7.00" y="456.75" font-size="10.00" fill="#505050" text-anchor="middle" stroke="#505050" stroke-width="0.03">17</text><text x="7.00" y="472.92" font-size="10.00" fill="#505050" text-anchor="middle" stroke="#505050" stroke-width="0.03">18</text><text x="7.00" y="489.09" font-size="10.00" fill="#505050" text-anchor="middle" stroke="#505050" stroke-width="0.03">19</text><text x="7.00" y="505.26" font-size="10.00" fill="#505050" text-anchor="middle" stroke="#505050" stroke-width="0.03">20</text><text x="7.00" y="521.43" font-size="10.00" fill="#505050" text-anchor="middle" stroke="#505050" stroke-width="0.03">21</text><text x="7.00" y="537.60" font-size="10.00" fill="#505050" text-anchor="middle" stroke="#505050" stroke-width="0.03">22</text><text x="7.00" y="553.77" font-size="10.00" fill="#505050" text-anchor="middle" stroke="#505050" stroke-width="0.03">23</text><text x="7.00" y="569.94" font-size="10.00" fill="#505050" text-anchor="middle" stroke="#505050" stroke-width="0.03">24</text><text x="84.20" y="197.93" font-size="10.40" fill="#1e1e1e" text-anchor="start" stroke="#1e1e1e" stroke-width="0.12" textLength="29.09" lengthAdjust="spacingAndGlyphs">Enero</text><text x="148.20" y="197.93" font-size="10.40" fill="#1e1e1e" text-anchor="start" stroke="#1e1e1e" stroke-width="0.12" textLength="38.17" lengthAdjust="spacingAndGlyphs">Febrero</text><text x="213.20" y="197.93" font-size="10.40" fill="#1e1e1e" text-anchor="start" stroke="#1e1e1e" stroke-width="0.12" textLength="30.28" lengthAdjust="spacingAndGlyphs">Marzo</text><text x="278.20" y="197.93" font-size="10.40" fill="#1e1e1e" text-anchor="start" stroke="#1e1e1e" stroke-width="0.12" textLength="21.81" lengthAdjust="spacingAndGlyphs">Abril</text><text x="342.20" y="197.93" font-size="10.40" fill="#1e1e1e" text-anchor="start" stroke="#1e1e1e" stroke-width="0.12" textLength="26.65" lengthAdjust="spacingAndGlyphs">Mayo</text><text x="407.20" y="197.93" font-size="10.40" fill="#1e1e1e" text-anchor="start" stroke="#1e1e1e" stroke-width="0.12" textLength="26.06" lengthAdjust="spacingAndGlyphs">Junio</text><text x="472.20" y="197.93" font-size="10.40" fill="#1e1e1e" text-anchor="start" stroke="#1e1e1e" stroke-width="0.12" textLength="22.42" lengthAdjust="spacingAndGlyphs">Julio</text><text x="536.20" y="197.93" font-size="10.40" fill="#1e1e1e" text-anchor="start" stroke="#1e1e1e" stroke-width="0.12" textLength="33.93" lengthAdjust="spacingAndGlyphs">Agosto</text><text x="601.20" y="197.93" font-size="10.40" fill="#1e1e1e" text-anchor="start" stroke="#1e1e1e" stroke-width="0.12" textLength="55.74" lengthAdjust="spacingAndGlyphs">Septiembre</text><text x="19.20" y="214.10" font-size="10.40" fill="#1e1e1e" text-anchor="start" stroke="#1e1e1e" stroke-width="0.12" textLength="51.49" lengthAdjust="spacingAndGlyphs">Camisetas</text><text x="144.40" y="214.10" font-size="10.40" fill="#1e1e1e" text-anchor="end" stroke="#1e1e1e" stroke-width="0.12" textLength="11.01" lengthAdjust="spacingAndGlyphs">83</text><text x="209.40" y="214.10" font-size="10.40" fill="#1e1e1e" text-anchor="end" stroke="#1e1e1e" stroke-width="0.12" textLength="11.01" lengthAdjust="spacingAndGlyphs">85</text><text x="274.40" y="214.10" font-size="10.40" fill="#1e1e1e" text-anchor="end" stroke="#1e1e1e" stroke-width="0.12" textLength="11.01" lengthAdjust="spacingAndGlyphs">14</text><text x="338.40" y="214.10" font-size="10.40" fill="#1e1e1e" text-anchor="end" stroke="#1e1e1e" stroke-width="0.12" textLength="11.01" lengthAdjust="spacingAndGlyphs">82</text><text x="403.40" y="214.10" font-size="10.40" fill="#1e1e1e" text-anchor="end" stroke="#1e1e1e" stroke-width="0.12" textLength="11.01" lengthAdjust="spacingAndGlyphs">14</text><text x="468.40" y="214.10" font-size="10.40" fill="#1e1e1e" text-anchor="end" stroke="#1e1e1e" stroke-width="0.12" textLength="11.01" lengthAdjust="spacingAndGlyphs">58</text><text x="532.40" y="214.10" font-size="10.40" fill="#1e1e1e" text-anchor="end" stroke="#1e1e1e" stroke-width="0.12" textLength="11.01" lengthAdjust="spacingAndGlyphs">25</text><text x="597.40" y="214.10" font-size="10.40" fill="#1e1e1e" text-anchor="end" stroke="#1e1e1e" stroke-width="0.12" textLength="11.01" lengthAdjust="spacingAndGlyphs">66</text><text x="19.20" y="230.27" font-size="10.40" fill="#1e1e1e" text-anchor="start" stroke="#1e1e1e" stroke-width="0.12" textLength="54.54" lengthAdjust="spacingAndGlyphs">Pantalones</text><text x="144.40" y="230.27" font-size="10.40" fill="#1e1e1e" text-anchor="end" stroke="#1e1e1e" stroke-width="0.12" textLength="11.01" lengthAdjust="spacingAndGlyphs">96</text><text x="209.40" y="230.27" font-size="10.40" fill="#1e1e1e" text-anchor="end" stroke="#1e1e1e" stroke-width="0.12" textLength="11.01" lengthAdjust="spacingAndGlyphs">65</text><text x="274.40" y="230.27" font-size="10.40" fill="#1e1e1e" text-anchor="end" stroke="#1e1e1e" stroke-width="0.12" textLength="11.01" lengthAdjust="spacingAndGlyphs">60</text><text x="338.40" y="230.27" font-size="10.40" fill="#1e1e1e" text-anchor="end" stroke="#1e1e1e" stroke-width="0.12" textLength="11.01" lengthAdjust="spacingAndGlyphs">44</text><text x="403.40" y="230.27" font-size="10.40" fill="#1e1e1e" text-anchor="end" stroke="#1e1e1e" stroke-width="0.12" textLength="11.01" lengthAdjust="spacingAndGlyphs">37</text><text x="468.40" y="230.27" font-size="10.40" fill="#1e1e1e" text-anchor="end" stroke="#1e1e1e" stroke-width="0.12" textLength="11.01" lengthAdjust="spacingAndGlyphs">31</text><text x="532.40" y="230.27" font-size="10.40" fill="#1e1e1e" text-anchor="end" stroke="#1e1e1e" stroke-width="0.12" textLength="11.01" lengthAdjust="spacingAndGlyphs">83</text><text x="597.40" y="230.27" font-size="10.40" fill="#1e1e1e" text-anchor="end" stroke="#1e1e1e" stroke-width="0.12" textLength="11.01" lengthAdjust="spacingAndGlyphs">44</text><text x="19.20" y="246.44" font-size="10.40" fill="#1e1e1e" text-anchor="start" stroke="#1e1e1e" stroke-width="0.12" textLength="39.38" lengthAdjust="spacingAndGlyphs">Zapatos</text><text x="144.40" y="246.44" font-size="10.40" fill="#1e1e1e" text-anchor="end" stroke="#1e1e1e" stroke-width="0.12" textLength="11.01" lengthAdjust="spacingAndGlyphs">69</text><text x="209.40" y="246.44" font-size="10.40" fill="#1e1e1e" text-anchor="end" stroke="#1e1e1e" stroke-width="0.12" textLength="11.01" lengthAdjust="spacingAndGlyphs">61</text><text x="274.40" y="246.44" font-size="10.40" fill="#1e1e1e" text-anchor="end" stroke="#1e1e1e" stroke-width="0.12" textLength="11.01" lengthAdjust="spacingAndGlyphs">88</text><text x="338.40" y="246.44" font-size="10.40" fill="#1e1e1e" text-anchor="end" stroke="#1e1e1e" stroke-width="0.12" textLength="11.01" lengthAdjust="spacingAndGlyphs">76</text><text x="403.40" y="246.44" font-size="10.40" fill="#1e1e1e" text-anchor="end" stroke="#1e1e1e" stroke-width="0.12" textLength="11.01" lengthAdjust="spacingAndGlyphs">71</text><text x="468.40" y="246.44" font-size="10.40" fill="#1e1e1e" text-anchor="end" stroke="#1e1e1e" stroke-width="0.12" textLength="11.01" lengthAdjust="spacingAndGlyphs">73</text><text x="532.40" y="246.44" font-size="10.40" fill="#1e1e1e" text-anchor="end" stroke="#1e1e1e" stroke-width="0.12" textLength="11.01" lengthAdjust="spacingAndGlyphs">65</text><text x="597.40" y="246.44" font-size="10.40" fill="#1e1e1e" text-anchor="end" stroke="#1e1e1e" stroke-width="0.12" textLength="11.01" lengthAdjust="spacingAndGlyphs">30</text><text x="19.20" y="262.61" font-size="10.40" fill="#1e1e1e" text-anchor="start" stroke="#1e1e1e" stroke-width="0.12" textLength="50.89" lengthAdjust="spacingAndGlyphs">Calcetines</text><text x="144.40" y="262.61" font-size="10.40" fill="#1e1e1e" text-anchor="end" stroke="#1e1e1e" stroke-width="0.12" textLength="11.01" lengthAdjust="spacingAndGlyphs">94</text><text x="209.40" y="262.61" font-size="10.40" fill="#1e1e1e" text-anchor="end" stroke="#1e1e1e" stroke-width="0.12" textLength="11.01" lengthAdjust="spacingAndGlyphs">49</text><text x="274.40" y="262.61" font-size="10.40" fill="#1e1e1e" text-anchor="end" stroke="#1e1e1e" stroke-width="0.12" textLength="11.01" lengthAdjust="spacingAndGlyphs">17</text><text x="338.40" y="262.61" font-size="10.40" fill="#1e1e1e" text-anchor="end" stroke="#1e1e1e" stroke-width="0.12" textLength="11.01" lengthAdjust="spacingAndGlyphs">35</text><text x="403.40" y="262.61" font-size="10.40" fill="#1e1e1e" text-anchor="end" stroke="#1e1e1e" stroke-width="0.12" textLength="11.01" lengthAdjust="spacingAndGlyphs">87</text><text x="468.40" y="262.61" font-size="10.40" fill="#1e1e1e" text-anchor="end" stroke="#1e1e1e" stroke-width="0.12" textLength="11.01" lengthAdjust="spacingAndGlyphs">99</text><text x="532.40" y="262.61" font-size="10.40" fill="#1e1e1e" text-anchor="end" stroke="#1e1e1e" stroke-width="0.12" textLength="11.01" lengthAdjust="spacingAndGlyphs">39</text><text x="597.40" y="262.61" font-size="10.40" fill="#1e1e1e" text-anchor="end" stroke="#1e1e1e" stroke-width="0.12" textLength="11.01" lengthAdjust="spacingAndGlyphs">71</text></svg><div class="r" style="left:621px;top:83px;width:403px;height:492px;background:#ffffff;box-sizing:border-box;border-left:1px solid #c8c8c8;border-top:1px solid #c8c8c8;box-shadow:-1px 0 3px rgba(0,0,0,0.08);"></div><div class="r" style="left:623px;top:85.5px;width:390px;height:17px;background:#e9e9e9;"></div><div class="r" style="left:623px;top:233.8px;width:390px;height:17px;background:#e9e9e9;"></div><div class="r" style="left:623px;top:426.1px;width:390px;height:17.4px;background:#e9e9e9;"></div><svg class="r" style="left:0;top:0" width="1024" height="575" viewBox="0 0 1024 575"><rect x="626.00" y="113.40" width="49.30" height="7.40" fill="#D9D9D9"/><rect x="626.00" y="128.20" width="49.30" height="7.40" fill="#D9D9D9"/><rect x="626.00" y="106.00" width="49.30" height="1" fill="#333333"/><rect x="626.00" y="112.90" width="49.30" height="1" fill="#333333"/><rect x="626.00" y="142.00" width="49.30" height="1" fill="#333333"/><rect x="628.03" y="109.00" width="5.8" height="1.4" fill="#333333"/><rect x="637.89" y="109.00" width="5.8" height="1.4" fill="#333333"/><rect x="647.75" y="109.00" width="5.8" height="1.4" fill="#333333"/><rect x="657.61" y="109.00" width="5.8" height="1.4" fill="#333333"/><rect x="667.47" y="109.00" width="5.8" height="1.4" fill="#333333"/><rect x="628.03" y="116.40" width="5.8" height="1.4" fill="#858585"/><rect x="637.89" y="116.40" width="5.8" height="1.4" fill="#858585"/><rect x="647.75" y="116.40" width="5.8" height="1.4" fill="#858585"/><rect x="657.61" y="116.40" width="5.8" height="1.4" fill="#858585"/><rect x="667.47" y="116.40" width="5.8" height="1.4" fill="#858585"/><rect x="628.03" y="123.80" width="5.8" height="1.4" fill="#8f8f8f"/><rect x="637.89" y="123.80" width="5.8" height="1.4" fill="#8f8f8f"/><rect x="647.75" y="123.80" width="5.8" height="1.4" fill="#8f8f8f"/><rect x="657.61" y="123.80" width="5.8" height="1.4" fill="#8f8f8f"/><rect x="667.47" y="123.80" width="5.8" height="1.4" fill="#8f8f8f"/><rect x="628.03" y="131.20" width="5.8" height="1.4" fill="#333333"/><rect x="637.89" y="131.20" width="5.8" height="1.4" fill="#333333"/><rect x="647.75" y="131.20" width="5.8" height="1.4" fill="#333333"/><rect x="657.61" y="131.20" width="5.8" height="1.4" fill="#333333"/><rect x="667.47" y="131.20" width="5.8" height="1.4" fill="#333333"/><rect x="628.03" y="138.60" width="5.8" height="1.4" fill="#474747"/><rect x="637.89" y="138.60" width="5.8" height="1.4" fill="#474747"/><rect x="647.75" y="138.60" width="5.8" height="1.4" fill="#474747"/><rect x="657.61" y="138.60" width="5.8" height="1.4" fill="#474747"/><rect x="667.47" y="138.60" width="5.8" height="1.4" fill="#474747"/><rect x="626.00" y="149.60" width="49.30" height="7.40" fill="#000000"/><rect x="626.00" y="156.50" width="49.30" height="1" fill="#222222"/><rect x="626.00" y="163.90" width="49.30" height="1" fill="#222222"/><rect x="626.00" y="171.30" width="49.30" height="1" fill="#222222"/><rect x="626.00" y="178.70" width="49.30" height="1" fill="#222222"/><rect x="626.50" y="150.10" width="48.30" height="36.00" fill="none" stroke="#222222" stroke-width="1.0"/><rect x="628.03" y="152.60" width="5.8" height="1.4" fill="#dddddd"/><rect x="637.89" y="152.60" width="5.8" height="1.4" fill="#dddddd"/><rect x="647.75" y="152.60" width="5.8" height="1.4" fill="#dddddd"/><rect x="657.61" y="152.60" width="5.8" height="1.4" fill="#dddddd"/><rect x="667.47" y="152.60" width="5.8" height="1.4" fill="#dddddd"/><rect x="628.03" y="160.00" width="5.8" height="1.4" fill="#333333"/><rect x="637.89" y="160.00" width="5.8" height="1.4" fill="#333333"/><rect x="647.75" y="160.00" width="5.8" height="1.4" fill="#333333"/><rect x="657.61" y="160.00" width="5.8" height="1.4" fill="#333333"/><rect x="667.47" y="160.00" width="5.8" height="1.4" fill="#333333"/><rect x="628.03" y="167.40" width="5.8" height="1.4" fill="#777777"/><rect x="637.89" y="167.40" width="5.8" height="1.4" fill="#777777"/><rect x="647.75" y="167.40" width="5.8" height="1.4" fill="#777777"/><rect x="657.61" y="167.40" width="5.8" height="1.4" fill="#777777"/><rect x="667.47" y="167.40" width="5.8" height="1.4" fill="#777777"/><rect x="628.03" y="174.80" width="5.8" height="1.4" fill="#999999"/><rect x="637.89" y="174.80" width="5.8" height="1.4" fill="#999999"/><rect x="647.75" y="174.80" width="5.8" height="1.4" fill="#999999"/><rect x="657.61" y="174.80" width="5.8" height="1.4" fill="#999999"/><rect x="667.47" y="174.80" width="5.8" height="1.4" fill="#999999"/><rect x="628.03" y="182.20" width="5.8" height="1.4" fill="#333333"/><rect x="637.89" y="182.20" width="5.8" height="1.4" fill="#333333"/><rect x="647.75" y="182.20" width="5.8" height="1.4" fill="#333333"/><rect x="657.61" y="182.20" width="5.8" height="1.4" fill="#333333"/><rect x="667.47" y="182.20" width="5.8" height="1.4" fill="#333333"/><rect x="626.00" y="200.60" width="49.30" height="7.40" fill="#CFCFCF"/><rect x="626.00" y="215.40" width="49.30" height="7.40" fill="#CFCFCF"/><rect x="626.00" y="200.10" width="49.30" height="1" fill="#333333"/><rect x="626.00" y="207.50" width="49.30" height="1" fill="#333333"/><rect x="626.00" y="214.90" width="49.30" height="1" fill="#333333"/><rect x="626.00" y="222.30" width="49.30" height="1" fill="#333333"/><rect x="635.36" y="193.20" width="1" height="37.00" fill="#333333"/><rect x="645.22" y="193.20" width="1" height="37.00" fill="#333333"/><rect x="655.08" y="193.20" width="1" height="37.00" fill="#333333"/><rect x="664.94" y="193.20" width="1" height="37.00" fill="#333333"/><rect x="626.50" y="193.70" width="48.30" height="36.00" fill="none" stroke="#333333" stroke-width="1.0"/><rect x="628.03" y="196.20" width="5.8" height="1.4" fill="#808080"/><rect x="637.89" y="196.20" width="5.8" height="1.4" fill="#808080"/><rect x="647.75" y="196.20" width="5.8" height="1.4" fill="#808080"/><rect x="657.61" y="196.20" width="5.8" height="1.4" fill="#808080"/><rect x="667.47" y="196.20" width="5.8" height="1.4" fill="#808080"/><rect x="628.03" y="203.60" width="5.8" height="1.4" fill="#555555"/><rect x="637.89" y="203.60" width="5.8" height="1.4" fill="#555555"/><rect x="647.75" y="203.60" width="5.8" height="1.4" fill="#555555"/><rect x="657.61" y="203.60" width="5.8" height="1.4" fill="#555555"/><rect x="667.47" y="203.60" width="5.8" height="1.4" fill="#555555"/><rect x="628.03" y="211.00" width="5.8" height="1.4" fill="#222222"/><rect x="637.89" y="211.00" width="5.8" height="1.4" fill="#222222"/><rect x="647.75" y="211.00" width="5.8" height="1.4" fill="#222222"/><rect x="657.61" y="211.00" width="5.8" height="1.4" fill="#222222"/><rect x="667.47" y="211.00" width="5.8" height="1.4" fill="#222222"/><rect x="628.03" y="218.40" width="5.8" height="1.4" fill="#555555"/><rect x="637.89" y="218.40" width="5.8" height="1.4" fill="#555555"/><rect x="647.75" y="218.40" width="5.8" height="1.4" fill="#555555"/><rect x="657.61" y="218.40" width="5.8" height="1.4" fill="#555555"/><rect x="667.47" y="218.40" width="5.8" height="1.4" fill="#555555"/><rect x="628.03" y="225.80" width="5.8" height="1.4" fill="#888888"/><rect x="637.89" y="225.80" width="5.8" height="1.4" fill="#888888"/><rect x="647.75" y="225.80" width="5.8" height="1.4" fill="#888888"/><rect x="657.61" y="225.80" width="5.8" height="1.4" fill="#888888"/><rect x="667.47" y="225.80" width="5.8" height="1.4" fill="#888888"/><rect x="626.00" y="262.20" width="49.30" height="7.40" fill="#D9D9D9"/><rect x="626.00" y="277.00" width="49.30" height="7.40" fill="#D9D9D9"/><rect x="626.00" y="254.80" width="49.30" height="7.40" fill="#000000"/><rect x="626.00" y="269.10" width="49.30" height="1" fill="#222222"/><rect x="626.00" y="276.50" width="49.30" height="1" fill="#222222"/><rect x="626.00" y="283.90" width="49.30" height="1" fill="#222222"/><rect x="626.50" y="255.30" width="48.30" height="36.00" fill="none" stroke="#111111" stroke-width="1.0"/><rect x="628.03" y="257.80" width="5.8" height="1.4" fill="#e8e8e8"/><rect x="637.89" y="257.80" width="5.8" height="1.4" fill="#e8e8e8"/><rect x="647.75" y="257.80" width="5.8" height="1.4" fill="#e8e8e8"/><rect x="657.61" y="257.80" width="5.8" height="1.4" fill="#e8e8e8"/><rect x="667.47" y="257.80" width="5.8" height="1.4" fill="#e8e8e8"/><rect x="628.03" y="265.20" width="5.8" height="1.4" fill="#444444"/><rect x="637.89" y="265.20" width="5.8" height="1.4" fill="#444444"/><rect x="647.75" y="265.20" width="5.8" height="1.4" fill="#444444"/><rect x="657.61" y="265.20" width="5.8" height="1.4" fill="#444444"/><rect x="667.47" y="265.20" width="5.8" height="1.4" fill="#444444"/><rect x="628.03" y="272.60" width="5.8" height="1.4" fill="#888888"/><rect x="637.89" y="272.60" width="5.8" height="1.4" fill="#888888"/><rect x="647.75" y="272.60" width="5.8" height="1.4" fill="#888888"/><rect x="657.61" y="272.60" width="5.8" height="1.4" fill="#888888"/><rect x="667.47" y="272.60" width="5.8" height="1.4" fill="#888888"/><rect x="628.03" y="280.00" width="5.8" height="1.4" fill="#555555"/><rect x="637.89" y="280.00" width="5.8" height="1.4" fill="#555555"/><rect x="647.75" y="280.00" width="5.8" height="1.4" fill="#555555"/><rect x="657.61" y="280.00" width="5.8" height="1.4" fill="#555555"/><rect x="667.47" y="280.00" width="5.8" height="1.4" fill="#555555"/><rect x="628.03" y="287.40" width="5.8" height="1.4" fill="#222222"/><rect x="637.89" y="287.40" width="5.8" height="1.4" fill="#222222"/><rect x="647.75" y="287.40" width="5.8" height="1.4" fill="#222222"/><rect x="657.61" y="287.40" width="5.8" height="1.4" fill="#222222"/><rect x="667.47" y="287.40" width="5.8" height="1.4" fill="#222222"/><rect x="626.00" y="298.40" width="49.30" height="7.40" fill="#000000"/><rect x="626.00" y="305.80" width="49.30" height="7.40" fill="#B5B5B5"/><rect x="626.00" y="313.20" width="49.30" height="7.40" fill="#D9D9D9"/><rect x="626.00" y="320.60" width="49.30" height="7.40" fill="#A8A8A8"/><rect x="626.00" y="328.00" width="49.30" height="7.40" fill="#D9D9D9"/><rect x="626.00" y="305.30" width="49.30" height="1" fill="#ffffff"/><rect x="626.00" y="312.70" width="49.30" height="1" fill="#ffffff"/><rect x="626.00" y="320.10" width="49.30" height="1" fill="#ffffff"/><rect x="626.00" y="327.50" width="49.30" height="1" fill="#ffffff"/><rect x="635.36" y="298.40" width="1" height="37.00" fill="#ffffff"/><rect x="645.22" y="298.40" width="1" height="37.00" fill="#ffffff"/><rect x="655.08" y="298.40" width="1" height="37.00" fill="#ffffff"/><rect x="664.94" y="298.40" width="1" height="37.00" fill="#ffffff"/><rect x="628.03" y="301.40" width="5.8" height="1.4" fill="#8a8a8a"/><rect x="637.89" y="301.40" width="5.8" height="1.4" fill="#8a8a8a"/><rect x="647.75" y="301.40" width="5.8" height="1.4" fill="#8a8a8a"/><rect x="657.61" y="301.40" width="5.8" height="1.4" fill="#8a8a8a"/><rect x="667.47" y="301.40" width="5.8" height="1.4" fill="#8a8a8a"/><rect x="628.03" y="308.80" width="5.8" height="1.4" fill="#444444"/><rect x="637.89" y="308.80" width="5.8" height="1.4" fill="#444444"/><rect x="647.75" y="308.80" width="5.8" height="1.4" fill="#444444"/><rect x="657.61" y="308.80" width="5.8" height="1.4" fill="#444444"/><rect x="667.47" y="308.80" width="5.8" height="1.4" fill="#444444"/><rect x="628.03" y="316.20" width="5.8" height="1.4" fill="#333333"/><rect x="637.89" y="316.20" width="5.8" height="1.4" fill="#333333"/><rect x="647.75" y="316.20" width="5.8" height="1.4" fill="#333333"/><rect x="657.61" y="316.20" width="5.8" height="1.4" fill="#333333"/><rect x="667.47" y="316.20" width="5.8" height="1.4" fill="#333333"/><rect x="628.03" y="323.60" width="5.8" height="1.4" fill="#666666"/><rect x="637.89" y="323.60" width="5.8" height="1.4" fill="#666666"/><rect x="647.75" y="323.60" width="5.8" height="1.4" fill="#666666"/><rect x="657.61" y="323.60" width="5.8" height="1.4" fill="#666666"/><rect x="667.47" y="323.60" width="5.8" height="1.4" fill="#666666"/><rect x="628.03" y="331.00" width="5.8" height="1.4" fill="#555555"/><rect x="637.89" y="331.00" width="5.8" height="1.4" fill="#555555"/><rect x="647.75" y="331.00" width="5.8" height="1.4" fill="#555555"/><rect x="657.61" y="331.00" width="5.8" height="1.4" fill="#555555"/><rect x="667.47" y="331.00" width="5.8" height="1.4" fill="#555555"/><rect x="626.00" y="349.40" width="49.30" height="7.40" fill="#D9D9D9"/><rect x="626.00" y="364.20" width="49.30" height="7.40" fill="#D9D9D9"/><rect x="626.00" y="342.00" width="49.30" height="7.40" fill="#000000"/><rect x="626.00" y="348.90" width="49.30" height="1" fill="#111111"/><rect x="626.00" y="356.30" width="49.30" height="1" fill="#111111"/><rect x="626.00" y="363.70" width="49.30" height="1" fill="#111111"/><rect x="626.00" y="371.10" width="49.30" height="1" fill="#111111"/><rect x="635.36" y="342.00" width="1" height="37.00" fill="#111111"/><rect x="645.22" y="342.00" width="1" height="37.00" fill="#111111"/><rect x="655.08" y="342.00" width="1" height="37.00" fill="#111111"/><rect x="664.94" y="342.00" width="1" height="37.00" fill="#111111"/><rect x="626.50" y="342.50" width="48.30" height="36.00" fill="none" stroke="#111111" stroke-width="1.0"/><rect x="628.03" y="345.00" width="5.8" height="1.4" fill="#cccccc"/><rect x="637.89" y="345.00" width="5.8" height="1.4" fill="#cccccc"/><rect x="647.75" y="345.00" width="5.8" height="1.4" fill="#cccccc"/><rect x="657.61" y="345.00" width="5.8" height="1.4" fill="#cccccc"/><rect x="667.47" y="345.00" width="5.8" height="1.4" fill="#cccccc"/><rect x="628.03" y="352.40" width="5.8" height="1.4" fill="#777777"/><rect x="637.89" y="352.40" width="5.8" height="1.4" fill="#777777"/><rect x="647.75" y="352.40" width="5.8" height="1.4" fill="#777777"/><rect x="657.61" y="352.40" width="5.8" height="1.4" fill="#777777"/><rect x="667.47" y="352.40" width="5.8" height="1.4" fill="#777777"/><rect x="628.03" y="359.80" width="5.8" height="1.4" fill="#444444"/><rect x="637.89" y="359.80" width="5.8" height="1.4" fill="#444444"/><rect x="647.75" y="359.80" width="5.8" height="1.4" fill="#444444"/><rect x="657.61" y="359.80" width="5.8" height="1.4" fill="#444444"/><rect x="667.47" y="359.80" width="5.8" height="1.4" fill="#444444"/><rect x="628.03" y="367.20" width="5.8" height="1.4" fill="#555555"/><rect x="637.89" y="367.20" width="5.8" height="1.4" fill="#555555"/><rect x="647.75" y="367.20" width="5.8" height="1.4" fill="#555555"/><rect x="657.61" y="367.20" width="5.8" height="1.4" fill="#555555"/><rect x="667.47" y="367.20" width="5.8" height="1.4" fill="#555555"/><rect x="628.03" y="374.60" width="5.8" height="1.4" fill="#777777"/><rect x="637.89" y="374.60" width="5.8" height="1.4" fill="#777777"/><rect x="647.75" y="374.60" width="5.8" height="1.4" fill="#777777"/><rect x="657.61" y="374.60" width="5.8" height="1.4" fill="#777777"/><rect x="667.47" y="374.60" width="5.8" height="1.4" fill="#777777"/><rect x="626.00" y="385.60" width="49.30" height="7.40" fill="#D9D9D9"/><rect x="626.00" y="393.00" width="49.30" height="7.40" fill="#A6A6A6"/><rect x="626.00" y="400.40" width="49.30" height="7.40" fill="#D9D9D9"/><rect x="626.00" y="407.80" width="49.30" height="7.40" fill="#9A9A9A"/><rect x="626.00" y="415.20" width="49.30" height="7.40" fill="#D9D9D9"/><rect x="626.00" y="392.50" width="49.30" height="1" fill="#111111"/><rect x="626.00" y="399.90" width="49.30" height="1" fill="#111111"/><rect x="626.00" y="407.30" width="49.30" height="1" fill="#111111"/><rect x="626.00" y="414.70" width="49.30" height="1" fill="#111111"/><rect x="635.36" y="385.60" width="1" height="37.00" fill="#111111"/><rect x="645.22" y="385.60" width="1" height="37.00" fill="#111111"/><rect x="655.08" y="385.60" width="1" height="37.00" fill="#111111"/><rect x="664.94" y="385.60" width="1" height="37.00" fill="#111111"/><rect x="626.50" y="386.10" width="48.30" height="36.00" fill="none" stroke="#111111" stroke-width="1.0"/><rect x="628.03" y="388.60" width="5.8" height="1.4" fill="#444444"/><rect x="637.89" y="388.60" width="5.8" height="1.4" fill="#444444"/><rect x="647.75" y="388.60" width="5.8" height="1.4" fill="#444444"/><rect x="657.61" y="388.60" width="5.8" height="1.4" fill="#444444"/><rect x="667.47" y="388.60" width="5.8" height="1.4" fill="#444444"/><rect x="628.03" y="396.00" width="5.8" height="1.4" fill="#333333"/><rect x="637.89" y="396.00" width="5.8" height="1.4" fill="#333333"/><rect x="647.75" y="396.00" width="5.8" height="1.4" fill="#333333"/><rect x="657.61" y="396.00" width="5.8" height="1.4" fill="#333333"/><rect x="667.47" y="396.00" width="5.8" height="1.4" fill="#333333"/><rect x="628.03" y="403.40" width="5.8" height="1.4" fill="#777777"/><rect x="637.89" y="403.40" width="5.8" height="1.4" fill="#777777"/><rect x="647.75" y="403.40" width="5.8" height="1.4" fill="#777777"/><rect x="657.61" y="403.40" width="5.8" height="1.4" fill="#777777"/><rect x="667.47" y="403.40" width="5.8" height="1.4" fill="#777777"/><rect x="628.03" y="410.80" width="5.8" height="1.4" fill="#444444"/><rect x="637.89" y="410.80" width="5.8" height="1.4" fill="#444444"/><rect x="647.75" y="410.80" width="5.8" height="1.4" fill="#444444"/><rect x="657.61" y="410.80" width="5.8" height="1.4" fill="#444444"/><rect x="667.47" y="410.80" width="5.8" height="1.4" fill="#444444"/><rect x="628.03" y="418.20" width="5.8" height="1.4" fill="#222222"/><rect x="637.89" y="418.20" width="5.8" height="1.4" fill="#222222"/><rect x="647.75" y="418.20" width="5.8" height="1.4" fill="#222222"/><rect x="657.61" y="418.20" width="5.8" height="1.4" fill="#222222"/><rect x="667.47" y="418.20" width="5.8" height="1.4" fill="#222222"/><rect x="626.00" y="447.20" width="49.30" height="7.40" fill="#000000"/><rect x="626.00" y="454.60" width="49.30" height="7.40" fill="#404040"/><rect x="626.00" y="462.00" width="49.30" height="7.40" fill="#6E6E6E"/><rect x="626.00" y="469.40" width="49.30" height="7.40" fill="#3C3C3C"/><rect x="626.00" y="476.80" width="49.30" height="7.40" fill="#777777"/><rect x="626.00" y="454.50" width="49.30" height="0.8" fill="#777777"/><rect x="628.03" y="450.20" width="5.8" height="1.4" fill="#9a9a9a"/><rect x="637.89" y="450.20" width="5.8" height="1.4" fill="#9a9a9a"/><rect x="647.75" y="450.20" width="5.8" height="1.4" fill="#9a9a9a"/><rect x="657.61" y="450.20" width="5.8" height="1.4" fill="#9a9a9a"/><rect x="667.47" y="450.20" width="5.8" height="1.4" fill="#9a9a9a"/><rect x="628.03" y="457.60" width="5.8" height="1.4" fill="#c8c8c8"/><rect x="637.89" y="457.60" width="5.8" height="1.4" fill="#c8c8c8"/><rect x="647.75" y="457.60" width="5.8" height="1.4" fill="#c8c8c8"/><rect x="657.61" y="457.60" width="5.8" height="1.4" fill="#c8c8c8"/><rect x="667.47" y="457.60" width="5.8" height="1.4" fill="#c8c8c8"/><rect x="628.03" y="465.00" width="5.8" height="1.4" fill="#ffffff"/><rect x="637.89" y="465.00" width="5.8" height="1.4" fill="#ffffff"/><rect x="647.75" y="465.00" width="5.8" height="1.4" fill="#ffffff"/><rect x="657.61" y="465.00" width="5.8" height="1.4" fill="#ffffff"/><rect x="667.47" y="465.00" width="5.8" height="1.4" fill="#ffffff"/><rect x="628.03" y="472.40" width="5.8" height="1.4" fill="#ffffff"/><rect x="637.89" y="472.40" width="5.8" height="1.4" fill="#ffffff"/><rect x="647.75" y="472.40" width="5.8" height="1.4" fill="#ffffff"/><rect x="657.61" y="472.40" width="5.8" height="1.4" fill="#ffffff"/><rect x="667.47" y="472.40" width="5.8" height="1.4" fill="#ffffff"/><rect x="628.03" y="479.80" width="5.8" height="1.4" fill="#d0d0d0"/><rect x="637.89" y="479.80" width="5.8" height="1.4" fill="#d0d0d0"/><rect x="647.75" y="479.80" width="5.8" height="1.4" fill="#d0d0d0"/><rect x="657.61" y="479.80" width="5.8" height="1.4" fill="#d0d0d0"/><rect x="667.47" y="479.80" width="5.8" height="1.4" fill="#d0d0d0"/><rect x="681.83" y="113.40" width="49.30" height="7.40" fill="#DDEBF7"/><rect x="681.83" y="128.20" width="49.30" height="7.40" fill="#DDEBF7"/><rect x="681.83" y="106.00" width="49.30" height="1" fill="#5B9BD5"/><rect x="681.83" y="112.90" width="49.30" height="1" fill="#5B9BD5"/><rect x="681.83" y="142.00" width="49.30" height="1" fill="#5B9BD5"/><rect x="683.86" y="109.00" width="5.8" height="1.4" fill="#2F75B5"/><rect x="693.72" y="109.00" width="5.8" height="1.4" fill="#2F75B5"/><rect x="703.58" y="109.00" width="5.8" height="1.4" fill="#2F75B5"/><rect x="713.44" y="109.00" width="5.8" height="1.4" fill="#2F75B5"/><rect x="723.30" y="109.00" width="5.8" height="1.4" fill="#2F75B5"/><rect x="683.86" y="116.40" width="5.8" height="1.4" fill="#82acd3"/><rect x="693.72" y="116.40" width="5.8" height="1.4" fill="#82acd3"/><rect x="703.58" y="116.40" width="5.8" height="1.4" fill="#82acd3"/><rect x="713.44" y="116.40" width="5.8" height="1.4" fill="#82acd3"/><rect x="723.30" y="116.40" width="5.8" height="1.4" fill="#82acd3"/><rect x="683.86" y="123.80" width="5.8" height="1.4" fill="#8db3d6"/><rect x="693.72" y="123.80" width="5.8" height="1.4" fill="#8db3d6"/><rect x="703.58" y="123.80" width="5.8" height="1.4" fill="#8db3d6"/><rect x="713.44" y="123.80" width="5.8" height="1.4" fill="#8db3d6"/><rect x="723.30" y="123.80" width="5.8" height="1.4" fill="#8db3d6"/><rect x="683.86" y="131.20" width="5.8" height="1.4" fill="#2F75B5"/><rect x="693.72" y="131.20" width="5.8" height="1.4" fill="#2F75B5"/><rect x="703.58" y="131.20" width="5.8" height="1.4" fill="#2F75B5"/><rect x="713.44" y="131.20" width="5.8" height="1.4" fill="#2F75B5"/><rect x="723.30" y="131.20" width="5.8" height="1.4" fill="#2F75B5"/><rect x="683.86" y="138.60" width="5.8" height="1.4" fill="#4483bc"/><rect x="693.72" y="138.60" width="5.8" height="1.4" fill="#4483bc"/><rect x="703.58" y="138.60" width="5.8" height="1.4" fill="#4483bc"/><rect x="713.44" y="138.60" width="5.8" height="1.4" fill="#4483bc"/><rect x="723.30" y="138.60" width="5.8" height="1.4" fill="#4483bc"/><rect x="681.83" y="149.60" width="49.30" height="7.40" fill="#5B9BD5"/><rect x="681.83" y="156.50" width="49.30" height="1" fill="#7cafdd"/><rect x="681.83" y="163.90" width="49.30" height="1" fill="#7cafdd"/><rect x="681.83" y="171.30" width="49.30" height="1" fill="#7cafdd"/><rect x="681.83" y="178.70" width="49.30" height="1" fill="#7cafdd"/><rect x="682.33" y="150.10" width="48.30" height="36.00" fill="none" stroke="#5B9BD5" stroke-width="1.0"/><rect x="683.86" y="152.60" width="5.8" height="1.4" fill="#f4f4f4"/><rect x="693.72" y="152.60" width="5.8" height="1.4" fill="#f4f4f4"/><rect x="703.58" y="152.60" width="5.8" height="1.4" fill="#f4f4f4"/><rect x="713.44" y="152.60" width="5.8" height="1.4" fill="#f4f4f4"/><rect x="723.30" y="152.60" width="5.8" height="1.4" fill="#f4f4f4"/><rect x="683.86" y="160.00" width="5.8" height="1.4" fill="#333333"/><rect x="693.72" y="160.00" width="5.8" height="1.4" fill="#333333"/><rect x="703.58" y="160.00" width="5.8" height="1.4" fill="#333333"/><rect x="713.44" y="160.00" width="5.8" height="1.4" fill="#333333"/><rect x="723.30" y="160.00" width="5.8" height="1.4" fill="#333333"/><rect x="683.86" y="167.40" width="5.8" height="1.4" fill="#777777"/><rect x="693.72" y="167.40" width="5.8" height="1.4" fill="#777777"/><rect x="703.58" y="167.40" width="5.8" height="1.4" fill="#777777"/><rect x="713.44" y="167.40" width="5.8" height="1.4" fill="#777777"/><rect x="723.30" y="167.40" width="5.8" height="1.4" fill="#777777"/><rect x="683.86" y="174.80" width="5.8" height="1.4" fill="#999999"/><rect x="693.72" y="174.80" width="5.8" height="1.4" fill="#999999"/><rect x="703.58" y="174.80" width="5.8" height="1.4" fill="#999999"/><rect x="713.44" y="174.80" width="5.8" height="1.4" fill="#999999"/><rect x="723.30" y="174.80" width="5.8" height="1.4" fill="#999999"/><rect x="683.86" y="182.20" width="5.8" height="1.4" fill="#333333"/><rect x="693.72" y="182.20" width="5.8" height="1.4" fill="#333333"/><rect x="703.58" y="182.20" width="5.8" height="1.4" fill="#333333"/><rect x="713.44" y="182.20" width="5.8" height="1.4" fill="#333333"/><rect x="723.30" y="182.20" width="5.8" height="1.4" fill="#333333"/><rect x="681.83" y="200.60" width="49.30" height="7.40" fill="#DDEBF7"/><rect x="681.83" y="215.40" width="49.30" height="7.40" fill="#DDEBF7"/><rect x="681.83" y="200.10" width="49.30" height="1" fill="#84b4e0"/><rect x="681.83" y="207.50" width="49.30" height="1" fill="#84b4e0"/><rect x="681.83" y="214.90" width="49.30" height="1" fill="#84b4e0"/><rect x="681.83" y="222.30" width="49.30" height="1" fill="#84b4e0"/><rect x="691.19" y="193.20" width="1" height="37.00" fill="#84b4e0"/><rect x="701.05" y="193.20" width="1" height="37.00" fill="#84b4e0"/><rect x="710.91" y="193.20" width="1" height="37.00" fill="#84b4e0"/><rect x="720.77" y="193.20" width="1" height="37.00" fill="#84b4e0"/><rect x="682.33" y="193.70" width="48.30" height="36.00" fill="none" stroke="#5B9BD5" stroke-width="1.0"/><rect x="683.86" y="196.20" width="5.8" height="1.4" fill="#808080"/><rect x="693.72" y="196.20" width="5.8" height="1.4" fill="#808080"/><rect x="703.58" y="196.20" width="5.8" height="1.4" fill="#808080"/><rect x="713.44" y="196.20" width="5.8" height="1.4" fill="#808080"/><rect x="723.30" y="196.20" width="5.8" height="1.4" fill="#808080"/><rect x="683.86" y="203.60" width="5.8" height="1.4" fill="#555555"/><rect x="693.72" y="203.60" width="5.8" height="1.4" fill="#555555"/><rect x="703.58" y="203.60" width="5.8" height="1.4" fill="#555555"/><rect x="713.44" y="203.60" width="5.8" height="1.4" fill="#555555"/><rect x="723.30" y="203.60" width="5.8" height="1.4" fill="#555555"/><rect x="683.86" y="211.00" width="5.8" height="1.4" fill="#222222"/><rect x="693.72" y="211.00" width="5.8" height="1.4" fill="#222222"/><rect x="703.58" y="211.00" width="5.8" height="1.4" fill="#222222"/><rect x="713.44" y="211.00" width="5.8" height="1.4" fill="#222222"/><rect x="723.30" y="211.00" width="5.8" height="1.4" fill="#222222"/><rect x="683.86" y="218.40" width="5.8" height="1.4" fill="#555555"/><rect x="693.72" y="218.40" width="5.8" height="1.4" fill="#555555"/><rect x="703.58" y="218.40" width="5.8" height="1.4" fill="#555555"/><rect x="713.44" y="218.40" width="5.8" height="1.4" fill="#555555"/><rect x="723.30" y="218.40" width="5.8" height="1.4" fill="#555555"/><rect x="683.86" y="225.80" width="5.8" height="1.4" fill="#888888"/><rect x="693.72" y="225.80" width="5.8" height="1.4" fill="#888888"/><rect x="703.58" y="225.80" width="5.8" height="1.4" fill="#888888"/><rect x="713.44" y="225.80" width="5.8" height="1.4" fill="#888888"/><rect x="723.30" y="225.80" width="5.8" height="1.4" fill="#888888"/><rect x="681.83" y="262.20" width="49.30" height="7.40" fill="#DDEBF7"/><rect x="681.83" y="277.00" width="49.30" height="7.40" fill="#DDEBF7"/><rect x="681.83" y="254.80" width="49.30" height="7.40" fill="#5B9BD5"/><rect x="681.83" y="269.10" width="49.30" height="1" fill="#9BC2E6"/><rect x="681.83" y="276.50" width="49.30" height="1" fill="#9BC2E6"/><rect x="681.83" y="283.90" width="49.30" height="1" fill="#9BC2E6"/><rect x="682.33" y="255.30" width="48.30" height="36.00" fill="none" stroke="#9BC2E6" stroke-width="1.0"/><rect x="683.86" y="257.80" width="5.8" height="1.4" fill="#e8e8e8"/><rect x="693.72" y="257.80" width="5.8" height="1.4" fill="#e8e8e8"/><rect x="703.58" y="257.80" width="5.8" height="1.4" fill="#e8e8e8"/><rect x="713.44" y="257.80" width="5.8" height="1.4" fill="#e8e8e8"/><rect x="723.30" y="257.80" width="5.8" height="1.4" fill="#e8e8e8"/><rect x="683.86" y="265.20" width="5.8" height="1.4" fill="#444444"/><rect x="693.72" y="265.20" width="5.8" height="1.4" fill="#444444"/><rect x="703.58" y="265.20" width="5.8" height="1.4" fill="#444444"/><rect x="713.44" y="265.20" width="5.8" height="1.4" fill="#444444"/><rect x="723.30" y="265.20" width="5.8" height="1.4" fill="#444444"/><rect x="683.86" y="272.60" width="5.8" height="1.4" fill="#888888"/><rect x="693.72" y="272.60" width="5.8" height="1.4" fill="#888888"/><rect x="703.58" y="272.60" width="5.8" height="1.4" fill="#888888"/><rect x="713.44" y="272.60" width="5.8" height="1.4" fill="#888888"/><rect x="723.30" y="272.60" width="5.8" height="1.4" fill="#888888"/><rect x="683.86" y="280.00" width="5.8" height="1.4" fill="#555555"/><rect x="693.72" y="280.00" width="5.8" height="1.4" fill="#555555"/><rect x="703.58" y="280.00" width="5.8" height="1.4" fill="#555555"/><rect x="713.44" y="280.00" width="5.8" height="1.4" fill="#555555"/><rect x="723.30" y="280.00" width="5.8" height="1.4" fill="#555555"/><rect x="683.86" y="287.40" width="5.8" height="1.4" fill="#222222"/><rect x="693.72" y="287.40" width="5.8" height="1.4" fill="#222222"/><rect x="703.58" y="287.40" width="5.8" height="1.4" fill="#222222"/><rect x="713.44" y="287.40" width="5.8" height="1.4" fill="#222222"/><rect x="723.30" y="287.40" width="5.8" height="1.4" fill="#222222"/><rect x="681.83" y="298.40" width="49.30" height="7.40" fill="#5B9BD5"/><rect x="681.83" y="305.80" width="49.30" height="7.40" fill="#BDD7EE"/><rect x="681.83" y="313.20" width="49.30" height="7.40" fill="#DDEBF7"/><rect x="681.83" y="320.60" width="49.30" height="7.40" fill="#BDD7EE"/><rect x="681.83" y="328.00" width="49.30" height="7.40" fill="#DDEBF7"/><rect x="681.83" y="305.30" width="49.30" height="1" fill="#ffffff"/><rect x="681.83" y="312.70" width="49.30" height="1" fill="#ffffff"/><rect x="681.83" y="320.10" width="49.30" height="1" fill="#ffffff"/><rect x="681.83" y="327.50" width="49.30" height="1" fill="#ffffff"/><rect x="691.19" y="298.40" width="1" height="37.00" fill="#ffffff"/><rect x="701.05" y="298.40" width="1" height="37.00" fill="#ffffff"/><rect x="710.91" y="298.40" width="1" height="37.00" fill="#ffffff"/><rect x="720.77" y="298.40" width="1" height="37.00" fill="#ffffff"/><rect x="683.86" y="301.40" width="5.8" height="1.4" fill="#a5c8e8"/><rect x="693.72" y="301.40" width="5.8" height="1.4" fill="#a5c8e8"/><rect x="703.58" y="301.40" width="5.8" height="1.4" fill="#a5c8e8"/><rect x="713.44" y="301.40" width="5.8" height="1.4" fill="#a5c8e8"/><rect x="723.30" y="301.40" width="5.8" height="1.4" fill="#a5c8e8"/><rect x="683.86" y="308.80" width="5.8" height="1.4" fill="#444444"/><rect x="693.72" y="308.80" width="5.8" height="1.4" fill="#444444"/><rect x="703.58" y="308.80" width="5.8" height="1.4" fill="#444444"/><rect x="713.44" y="308.80" width="5.8" height="1.4" fill="#444444"/><rect x="723.30" y="308.80" width="5.8" height="1.4" fill="#444444"/><rect x="683.86" y="316.20" width="5.8" height="1.4" fill="#333333"/><rect x="693.72" y="316.20" width="5.8" height="1.4" fill="#333333"/><rect x="703.58" y="316.20" width="5.8" height="1.4" fill="#333333"/><rect x="713.44" y="316.20" width="5.8" height="1.4" fill="#333333"/><rect x="723.30" y="316.20" width="5.8" height="1.4" fill="#333333"/><rect x="683.86" y="323.60" width="5.8" height="1.4" fill="#666666"/><rect x="693.72" y="323.60" width="5.8" height="1.4" fill="#666666"/><rect x="703.58" y="323.60" width="5.8" height="1.4" fill="#666666"/><rect x="713.44" y="323.60" width="5.8" height="1.4" fill="#666666"/><rect x="723.30" y="323.60" width="5.8" height="1.4" fill="#666666"/><rect x="683.86" y="331.00" width="5.8" height="1.4" fill="#555555"/><rect x="693.72" y="331.00" width="5.8" height="1.4" fill="#555555"/><rect x="703.58" y="331.00" width="5.8" height="1.4" fill="#555555"/><rect x="713.44" y="331.00" width="5.8" height="1.4" fill="#555555"/><rect x="723.30" y="331.00" width="5.8" height="1.4" fill="#555555"/><rect x="681.83" y="349.40" width="49.30" height="7.40" fill="#D9D9D9"/><rect x="681.83" y="364.20" width="49.30" height="7.40" fill="#D9D9D9"/><rect x="681.83" y="342.00" width="49.30" height="7.40" fill="#5B9BD5"/><rect x="681.83" y="342.00" width="49.30" height="1.5" fill="#111111"/><rect x="681.83" y="348.65" width="49.30" height="1.5" fill="#111111"/><rect x="681.83" y="377.50" width="49.30" height="1.5" fill="#777777"/><rect x="683.86" y="345.00" width="5.8" height="1.4" fill="#ffffff"/><rect x="693.72" y="345.00" width="5.8" height="1.4" fill="#ffffff"/><rect x="703.58" y="345.00" width="5.8" height="1.4" fill="#ffffff"/><rect x="713.44" y="345.00" width="5.8" height="1.4" fill="#ffffff"/><rect x="723.30" y="345.00" width="5.8" height="1.4" fill="#ffffff"/><rect x="683.86" y="352.40" width="5.8" height="1.4" fill="#777777"/><rect x="693.72" y="352.40" width="5.8" height="1.4" fill="#777777"/><rect x="703.58" y="352.40" width="5.8" height="1.4" fill="#777777"/><rect x="713.44" y="352.40" width="5.8" height="1.4" fill="#777777"/><rect x="723.30" y="352.40" width="5.8" height="1.4" fill="#777777"/><rect x="683.86" y="359.80" width="5.8" height="1.4" fill="#444444"/><rect x="693.72" y="359.80" width="5.8" height="1.4" fill="#444444"/><rect x="703.58" y="359.80" width="5.8" height="1.4" fill="#444444"/><rect x="713.44" y="359.80" width="5.8" height="1.4" fill="#444444"/><rect x="723.30" y="359.80" width="5.8" height="1.4" fill="#444444"/><rect x="683.86" y="367.20" width="5.8" height="1.4" fill="#444444"/><rect x="693.72" y="367.20" width="5.8" height="1.4" fill="#444444"/><rect x="703.58" y="367.20" width="5.8" height="1.4" fill="#444444"/><rect x="713.44" y="367.20" width="5.8" height="1.4" fill="#444444"/><rect x="723.30" y="367.20" width="5.8" height="1.4" fill="#444444"/><rect x="683.86" y="374.60" width="5.8" height="1.4" fill="#777777"/><rect x="693.72" y="374.60" width="5.8" height="1.4" fill="#777777"/><rect x="703.58" y="374.60" width="5.8" height="1.4" fill="#777777"/><rect x="713.44" y="374.60" width="5.8" height="1.4" fill="#777777"/><rect x="723.30" y="374.60" width="5.8" height="1.4" fill="#777777"/><rect x="681.83" y="385.60" width="49.30" height="7.40" fill="#DDEBF7"/><rect x="681.83" y="393.00" width="49.30" height="7.40" fill="#BDD7EE"/><rect x="681.83" y="400.40" width="49.30" height="7.40" fill="#DDEBF7"/><rect x="681.83" y="407.80" width="49.30" height="7.40" fill="#BDD7EE"/><rect x="681.83" y="415.20" width="49.30" height="7.40" fill="#DDEBF7"/><rect x="681.83" y="392.50" width="49.30" height="1" fill="#9BC2E6"/><rect x="681.83" y="399.90" width="49.30" height="1" fill="#9BC2E6"/><rect x="681.83" y="407.30" width="49.30" height="1" fill="#9BC2E6"/><rect x="681.83" y="414.70" width="49.30" height="1" fill="#9BC2E6"/><rect x="691.19" y="385.60" width="1" height="37.00" fill="#9BC2E6"/><rect x="701.05" y="385.60" width="1" height="37.00" fill="#9BC2E6"/><rect x="710.91" y="385.60" width="1" height="37.00" fill="#9BC2E6"/><rect x="720.77" y="385.60" width="1" height="37.00" fill="#9BC2E6"/><rect x="682.33" y="386.10" width="48.30" height="36.00" fill="none" stroke="#9BC2E6" stroke-width="1.0"/><rect x="683.86" y="388.60" width="5.8" height="1.4" fill="#444444"/><rect x="693.72" y="388.60" width="5.8" height="1.4" fill="#444444"/><rect x="703.58" y="388.60" width="5.8" height="1.4" fill="#444444"/><rect x="713.44" y="388.60" width="5.8" height="1.4" fill="#444444"/><rect x="723.30" y="388.60" width="5.8" height="1.4" fill="#444444"/><rect x="683.86" y="396.00" width="5.8" height="1.4" fill="#333333"/><rect x="693.72" y="396.00" width="5.8" height="1.4" fill="#333333"/><rect x="703.58" y="396.00" width="5.8" height="1.4" fill="#333333"/><rect x="713.44" y="396.00" width="5.8" height="1.4" fill="#333333"/><rect x="723.30" y="396.00" width="5.8" height="1.4" fill="#333333"/><rect x="683.86" y="403.40" width="5.8" height="1.4" fill="#777777"/><rect x="693.72" y="403.40" width="5.8" height="1.4" fill="#777777"/><rect x="703.58" y="403.40" width="5.8" height="1.4" fill="#777777"/><rect x="713.44" y="403.40" width="5.8" height="1.4" fill="#777777"/><rect x="723.30" y="403.40" width="5.8" height="1.4" fill="#777777"/><rect x="683.86" y="410.80" width="5.8" height="1.4" fill="#444444"/><rect x="693.72" y="410.80" width="5.8" height="1.4" fill="#444444"/><rect x="703.58" y="410.80" width="5.8" height="1.4" fill="#444444"/><rect x="713.44" y="410.80" width="5.8" height="1.4" fill="#444444"/><rect x="723.30" y="410.80" width="5.8" height="1.4" fill="#444444"/><rect x="683.86" y="418.20" width="5.8" height="1.4" fill="#222222"/><rect x="693.72" y="418.20" width="5.8" height="1.4" fill="#222222"/><rect x="703.58" y="418.20" width="5.8" height="1.4" fill="#222222"/><rect x="713.44" y="418.20" width="5.8" height="1.4" fill="#222222"/><rect x="723.30" y="418.20" width="5.8" height="1.4" fill="#222222"/><rect x="681.83" y="447.20" width="49.30" height="7.40" fill="#000000"/><rect x="681.83" y="454.60" width="49.30" height="7.40" fill="#2F75B5"/><rect x="681.83" y="462.00" width="49.30" height="7.40" fill="#5B9BD5"/><rect x="681.83" y="469.40" width="49.30" height="7.40" fill="#2F75B5"/><rect x="681.83" y="476.80" width="49.30" height="7.40" fill="#5B9BD5"/><rect x="681.83" y="454.50" width="49.30" height="0.8" fill="#777777"/><rect x="683.86" y="450.20" width="5.8" height="1.4" fill="#9a9a9a"/><rect x="693.72" y="450.20" width="5.8" height="1.4" fill="#9a9a9a"/><rect x="703.58" y="450.20" width="5.8" height="1.4" fill="#9a9a9a"/><rect x="713.44" y="450.20" width="5.8" height="1.4" fill="#9a9a9a"/><rect x="723.30" y="450.20" width="5.8" height="1.4" fill="#9a9a9a"/><rect x="683.86" y="457.60" width="5.8" height="1.4" fill="#c8c8c8"/><rect x="693.72" y="457.60" width="5.8" height="1.4" fill="#c8c8c8"/><rect x="703.58" y="457.60" width="5.8" height="1.4" fill="#c8c8c8"/><rect x="713.44" y="457.60" width="5.8" height="1.4" fill="#c8c8c8"/><rect x="723.30" y="457.60" width="5.8" height="1.4" fill="#c8c8c8"/><rect x="683.86" y="465.00" width="5.8" height="1.4" fill="#ffffff"/><rect x="693.72" y="465.00" width="5.8" height="1.4" fill="#ffffff"/><rect x="703.58" y="465.00" width="5.8" height="1.4" fill="#ffffff"/><rect x="713.44" y="465.00" width="5.8" height="1.4" fill="#ffffff"/><rect x="723.30" y="465.00" width="5.8" height="1.4" fill="#ffffff"/><rect x="683.86" y="472.40" width="5.8" height="1.4" fill="#ffffff"/><rect x="693.72" y="472.40" width="5.8" height="1.4" fill="#ffffff"/><rect x="703.58" y="472.40" width="5.8" height="1.4" fill="#ffffff"/><rect x="713.44" y="472.40" width="5.8" height="1.4" fill="#ffffff"/><rect x="723.30" y="472.40" width="5.8" height="1.4" fill="#ffffff"/><rect x="683.86" y="479.80" width="5.8" height="1.4" fill="#d0d0d0"/><rect x="693.72" y="479.80" width="5.8" height="1.4" fill="#d0d0d0"/><rect x="703.58" y="479.80" width="5.8" height="1.4" fill="#d0d0d0"/><rect x="713.44" y="479.80" width="5.8" height="1.4" fill="#d0d0d0"/><rect x="723.30" y="479.80" width="5.8" height="1.4" fill="#d0d0d0"/><rect x="737.66" y="113.40" width="49.30" height="7.40" fill="#FCE4D6"/><rect x="737.66" y="128.20" width="49.30" height="7.40" fill="#FCE4D6"/><rect x="737.66" y="106.00" width="49.30" height="1" fill="#ED7D31"/><rect x="737.66" y="112.90" width="49.30" height="1" fill="#ED7D31"/><rect x="737.66" y="142.00" width="49.30" height="1" fill="#ED7D31"/><rect x="739.69" y="109.00" width="5.8" height="1.4" fill="#C65911"/><rect x="749.55" y="109.00" width="5.8" height="1.4" fill="#C65911"/><rect x="759.41" y="109.00" width="5.8" height="1.4" fill="#C65911"/><rect x="769.27" y="109.00" width="5.8" height="1.4" fill="#C65911"/><rect x="779.13" y="109.00" width="5.8" height="1.4" fill="#C65911"/><rect x="739.69" y="116.40" width="5.8" height="1.4" fill="#dd9b70"/><rect x="749.55" y="116.40" width="5.8" height="1.4" fill="#dd9b70"/><rect x="759.41" y="116.40" width="5.8" height="1.4" fill="#dd9b70"/><rect x="769.27" y="116.40" width="5.8" height="1.4" fill="#dd9b70"/><rect x="779.13" y="116.40" width="5.8" height="1.4" fill="#dd9b70"/><rect x="739.69" y="123.80" width="5.8" height="1.4" fill="#e0a47c"/><rect x="749.55" y="123.80" width="5.8" height="1.4" fill="#e0a47c"/><rect x="759.41" y="123.80" width="5.8" height="1.4" fill="#e0a47c"/><rect x="769.27" y="123.80" width="5.8" height="1.4" fill="#e0a47c"/><rect x="779.13" y="123.80" width="5.8" height="1.4" fill="#e0a47c"/><rect x="739.69" y="131.20" width="5.8" height="1.4" fill="#C65911"/><rect x="749.55" y="131.20" width="5.8" height="1.4" fill="#C65911"/><rect x="759.41" y="131.20" width="5.8" height="1.4" fill="#C65911"/><rect x="769.27" y="131.20" width="5.8" height="1.4" fill="#C65911"/><rect x="779.13" y="131.20" width="5.8" height="1.4" fill="#C65911"/><rect x="739.69" y="138.60" width="5.8" height="1.4" fill="#cc6a29"/><rect x="749.55" y="138.60" width="5.8" height="1.4" fill="#cc6a29"/><rect x="759.41" y="138.60" width="5.8" height="1.4" fill="#cc6a29"/><rect x="769.27" y="138.60" width="5.8" height="1.4" fill="#cc6a29"/><rect x="779.13" y="138.60" width="5.8" height="1.4" fill="#cc6a29"/><rect x="737.66" y="149.60" width="49.30" height="7.40" fill="#ED7D31"/><rect x="737.66" y="156.50" width="49.30" height="1" fill="#f1975a"/><rect x="737.66" y="163.90" width="49.30" height="1" fill="#f1975a"/><rect x="737.66" y="171.30" width="49.30" height="1" fill="#f1975a"/><rect x="737.66" y="178.70" width="49.30" height="1" fill="#f1975a"/><rect x="738.16" y="150.10" width="48.30" height="36.00" fill="none" stroke="#ED7D31" stroke-width="1.0"/><rect x="739.69" y="152.60" width="5.8" height="1.4" fill="#f4f4f4"/><rect x="749.55" y="152.60" width="5.8" height="1.4" fill="#f4f4f4"/><rect x="759.41" y="152.60" width="5.8" height="1.4" fill="#f4f4f4"/><rect x="769.27" y="152.60" width="5.8" height="1.4" fill="#f4f4f4"/><rect x="779.13" y="152.60" width="5.8" height="1.4" fill="#f4f4f4"/><rect x="739.69" y="160.00" width="5.8" height="1.4" fill="#333333"/><rect x="749.55" y="160.00" width="5.8" height="1.4" fill="#333333"/><rect x="759.41" y="160.00" width="5.8" height="1.4" fill="#333333"/><rect x="769.27" y="160.00" width="5.8" height="1.4" fill="#333333"/><rect x="779.13" y="160.00" width="5.8" height="1.4" fill="#333333"/><rect x="739.69" y="167.40" width="5.8" height="1.4" fill="#777777"/><rect x="749.55" y="167.40" width="5.8" height="1.4" fill="#777777"/><rect x="759.41" y="167.40" width="5.8" height="1.4" fill="#777777"/><rect x="769.27" y="167.40" width="5.8" height="1.4" fill="#777777"/><rect x="779.13" y="167.40" width="5.8" height="1.4" fill="#777777"/><rect x="739.69" y="174.80" width="5.8" height="1.4" fill="#999999"/><rect x="749.55" y="174.80" width="5.8" height="1.4" fill="#999999"/><rect x="759.41" y="174.80" width="5.8" height="1.4" fill="#999999"/><rect x="769.27" y="174.80" width="5.8" height="1.4" fill="#999999"/><rect x="779.13" y="174.80" width="5.8" height="1.4" fill="#999999"/><rect x="739.69" y="182.20" width="5.8" height="1.4" fill="#333333"/><rect x="749.55" y="182.20" width="5.8" height="1.4" fill="#333333"/><rect x="759.41" y="182.20" width="5.8" height="1.4" fill="#333333"/><rect x="769.27" y="182.20" width="5.8" height="1.4" fill="#333333"/><rect x="779.13" y="182.20" width="5.8" height="1.4" fill="#333333"/><rect x="737.66" y="200.60" width="49.30" height="7.40" fill="#FCE4D6"/><rect x="737.66" y="215.40" width="49.30" height="7.40" fill="#FCE4D6"/><rect x="737.66" y="200.10" width="49.30" height="1" fill="#f29e64"/><rect x="737.66" y="207.50" width="49.30" height="1" fill="#f29e64"/><rect x="737.66" y="214.90" width="49.30" height="1" fill="#f29e64"/><rect x="737.66" y="222.30" width="49.30" height="1" fill="#f29e64"/><rect x="747.02" y="193.20" width="1" height="37.00" fill="#f29e64"/><rect x="756.88" y="193.20" width="1" height="37.00" fill="#f29e64"/><rect x="766.74" y="193.20" width="1" height="37.00" fill="#f29e64"/><rect x="776.60" y="193.20" width="1" height="37.00" fill="#f29e64"/><rect x="738.16" y="193.70" width="48.30" height="36.00" fill="none" stroke="#ED7D31" stroke-width="1.0"/><rect x="739.69" y="196.20" width="5.8" height="1.4" fill="#808080"/><rect x="749.55" y="196.20" width="5.8" height="1.4" fill="#808080"/><rect x="759.41" y="196.20" width="5.8" height="1.4" fill="#808080"/><rect x="769.27" y="196.20" width="5.8" height="1.4" fill="#808080"/><rect x="779.13" y="196.20" width="5.8" height="1.4" fill="#808080"/><rect x="739.69" y="203.60" width="5.8" height="1.4" fill="#555555"/><rect x="749.55" y="203.60" width="5.8" height="1.4" fill="#555555"/><rect x="759.41" y="203.60" width="5.8" height="1.4" fill="#555555"/><rect x="769.27" y="203.60" width="5.8" height="1.4" fill="#555555"/><rect x="779.13" y="203.60" width="5.8" height="1.4" fill="#555555"/><rect x="739.69" y="211.00" width="5.8" height="1.4" fill="#222222"/><rect x="749.55" y="211.00" width="5.8" height="1.4" fill="#222222"/><rect x="759.41" y="211.00" width="5.8" height="1.4" fill="#222222"/><rect x="769.27" y="211.00" width="5.8" height="1.4" fill="#222222"/><rect x="779.13" y="211.00" width="5.8" height="1.4" fill="#222222"/><rect x="739.69" y="218.40" width="5.8" height="1.4" fill="#555555"/><rect x="749.55" y="218.40" width="5.8" height="1.4" fill="#555555"/><rect x="759.41" y="218.40" width="5.8" height="1.4" fill="#555555"/><rect x="769.27" y="218.40" width="5.8" height="1.4" fill="#555555"/><rect x="779.13" y="218.40" width="5.8" height="1.4" fill="#555555"/><rect x="739.69" y="225.80" width="5.8" height="1.4" fill="#888888"/><rect x="749.55" y="225.80" width="5.8" height="1.4" fill="#888888"/><rect x="759.41" y="225.80" width="5.8" height="1.4" fill="#888888"/><rect x="769.27" y="225.80" width="5.8" height="1.4" fill="#888888"/><rect x="779.13" y="225.80" width="5.8" height="1.4" fill="#888888"/><rect x="737.66" y="262.20" width="49.30" height="7.40" fill="#FCE4D6"/><rect x="737.66" y="277.00" width="49.30" height="7.40" fill="#FCE4D6"/><rect x="737.66" y="254.80" width="49.30" height="7.40" fill="#ED7D31"/><rect x="737.66" y="269.10" width="49.30" height="1" fill="#F4B084"/><rect x="737.66" y="276.50" width="49.30" height="1" fill="#F4B084"/><rect x="737.66" y="283.90" width="49.30" height="1" fill="#F4B084"/><rect x="738.16" y="255.30" width="48.30" height="36.00" fill="none" stroke="#F4B084" stroke-width="1.0"/><rect x="739.69" y="257.80" width="5.8" height="1.4" fill="#e8e8e8"/><rect x="749.55" y="257.80" width="5.8" height="1.4" fill="#e8e8e8"/><rect x="759.41" y="257.80" width="5.8" height="1.4" fill="#e8e8e8"/><rect x="769.27" y="257.80" width="5.8" height="1.4" fill="#e8e8e8"/><rect x="779.13" y="257.80" width="5.8" height="1.4" fill="#e8e8e8"/><rect x="739.69" y="265.20" width="5.8" height="1.4" fill="#444444"/><rect x="749.55" y="265.20" width="5.8" height="1.4" fill="#444444"/><rect x="759.41" y="265.20" width="5.8" height="1.4" fill="#444444"/><rect x="769.27" y="265.20" width="5.8" height="1.4" fill="#444444"/><rect x="779.13" y="265.20" width="5.8" height="1.4" fill="#444444"/><rect x="739.69" y="272.60" width="5.8" height="1.4" fill="#888888"/><rect x="749.55" y="272.60" width="5.8" height="1.4" fill="#888888"/><rect x="759.41" y="272.60" width="5.8" height="1.4" fill="#888888"/><rect x="769.27" y="272.60" width="5.8" height="1.4" fill="#888888"/><rect x="779.13" y="272.60" width="5.8" height="1.4" fill="#888888"/><rect x="739.69" y="280.00" width="5.8" height="1.4" fill="#555555"/><rect x="749.55" y="280.00" width="5.8" height="1.4" fill="#555555"/><rect x="759.41" y="280.00" width="5.8" height="1.4" fill="#555555"/><rect x="769.27" y="280.00" width="5.8" height="1.4" fill="#555555"/><rect x="779.13" y="280.00" width="5.8" height="1.4" fill="#555555"/><rect x="739.69" y="287.40" width="5.8" height="1.4" fill="#222222"/><rect x="749.55" y="287.40" width="5.8" height="1.4" fill="#222222"/><rect x="759.41" y="287.40" width="5.8" height="1.4" fill="#222222"/><rect x="769.27" y="287.40" width="5.8" height="1.4" fill="#222222"/><rect x="779.13" y="287.40" width="5.8" height="1.4" fill="#222222"/><rect x="737.66" y="298.40" width="49.30" height="7.40" fill="#ED7D31"/><rect x="737.66" y="305.80" width="49.30" height="7.40" fill="#F8CBAD"/><rect x="737.66" y="313.20" width="49.30" height="7.40" fill="#FCE4D6"/><rect x="737.66" y="320.60" width="49.30" height="7.40" fill="#F8CBAD"/><rect x="737.66" y="328.00" width="49.30" height="7.40" fill="#FCE4D6"/><rect x="737.66" y="305.30" width="49.30" height="1" fill="#ffffff"/><rect x="737.66" y="312.70" width="49.30" height="1" fill="#ffffff"/><rect x="737.66" y="320.10" width="49.30" height="1" fill="#ffffff"/><rect x="737.66" y="327.50" width="49.30" height="1" fill="#ffffff"/><rect x="747.02" y="298.40" width="1" height="37.00" fill="#ffffff"/><rect x="756.88" y="298.40" width="1" height="37.00" fill="#ffffff"/><rect x="766.74" y="298.40" width="1" height="37.00" fill="#ffffff"/><rect x="776.60" y="298.40" width="1" height="37.00" fill="#ffffff"/><rect x="739.69" y="301.40" width="5.8" height="1.4" fill="#f5b88e"/><rect x="749.55" y="301.40" width="5.8" height="1.4" fill="#f5b88e"/><rect x="759.41" y="301.40" width="5.8" height="1.4" fill="#f5b88e"/><rect x="769.27" y="301.40" width="5.8" height="1.4" fill="#f5b88e"/><rect x="779.13" y="301.40" width="5.8" height="1.4" fill="#f5b88e"/><rect x="739.69" y="308.80" width="5.8" height="1.4" fill="#444444"/><rect x="749.55" y="308.80" width="5.8" height="1.4" fill="#444444"/><rect x="759.41" y="308.80" width="5.8" height="1.4" fill="#444444"/><rect x="769.27" y="308.80" width="5.8" height="1.4" fill="#444444"/><rect x="779.13" y="308.80" width="5.8" height="1.4" fill="#444444"/><rect x="739.69" y="316.20" width="5.8" height="1.4" fill="#333333"/><rect x="749.55" y="316.20" width="5.8" height="1.4" fill="#333333"/><rect x="759.41" y="316.20" width="5.8" height="1.4" fill="#333333"/><rect x="769.27" y="316.20" width="5.8" height="1.4" fill="#333333"/><rect x="779.13" y="316.20" width="5.8" height="1.4" fill="#333333"/><rect x="739.69" y="323.60" width="5.8" height="1.4" fill="#666666"/><rect x="749.55" y="323.60" width="5.8" height="1.4" fill="#666666"/><rect x="759.41" y="323.60" width="5.8" height="1.4" fill="#666666"/><rect x="769.27" y="323.60" width="5.8" height="1.4" fill="#666666"/><rect x="779.13" y="323.60" width="5.8" height="1.4" fill="#666666"/><rect x="739.69" y="331.00" width="5.8" height="1.4" fill="#555555"/><rect x="749.55" y="331.00" width="5.8" height="1.4" fill="#555555"/><rect x="759.41" y="331.00" width="5.8" height="1.4" fill="#555555"/><rect x="769.27" y="331.00" width="5.8" height="1.4" fill="#555555"/><rect x="779.13" y="331.00" width="5.8" height="1.4" fill="#555555"/><rect x="737.66" y="349.40" width="49.30" height="7.40" fill="#D9D9D9"/><rect x="737.66" y="364.20" width="49.30" height="7.40" fill="#D9D9D9"/><rect x="737.66" y="342.00" width="49.30" height="7.40" fill="#ED7D31"/><rect x="737.66" y="342.00" width="49.30" height="1.5" fill="#111111"/><rect x="737.66" y="348.65" width="49.30" height="1.5" fill="#111111"/><rect x="737.66" y="377.50" width="49.30" height="1.5" fill="#777777"/><rect x="739.69" y="345.00" width="5.8" height="1.4" fill="#ffffff"/><rect x="749.55" y="345.00" width="5.8" height="1.4" fill="#ffffff"/><rect x="759.41" y="345.00" width="5.8" height="1.4" fill="#ffffff"/><rect x="769.27" y="345.00" width="5.8" height="1.4" fill="#ffffff"/><rect x="779.13" y="345.00" width="5.8" height="1.4" fill="#ffffff"/><rect x="739.69" y="352.40" width="5.8" height="1.4" fill="#777777"/><rect x="749.55" y="352.40" width="5.8" height="1.4" fill="#777777"/><rect x="759.41" y="352.40" width="5.8" height="1.4" fill="#777777"/><rect x="769.27" y="352.40" width="5.8" height="1.4" fill="#777777"/><rect x="779.13" y="352.40" width="5.8" height="1.4" fill="#777777"/><rect x="739.69" y="359.80" width="5.8" height="1.4" fill="#444444"/><rect x="749.55" y="359.80" width="5.8" height="1.4" fill="#444444"/><rect x="759.41" y="359.80" width="5.8" height="1.4" fill="#444444"/><rect x="769.27" y="359.80" width="5.8" height="1.4" fill="#444444"/><rect x="779.13" y="359.80" width="5.8" height="1.4" fill="#444444"/><rect x="739.69" y="367.20" width="5.8" height="1.4" fill="#444444"/><rect x="749.55" y="367.20" width="5.8" height="1.4" fill="#444444"/><rect x="759.41" y="367.20" width="5.8" height="1.4" fill="#444444"/><rect x="769.27" y="367.20" width="5.8" height="1.4" fill="#444444"/><rect x="779.13" y="367.20" width="5.8" height="1.4" fill="#444444"/><rect x="739.69" y="374.60" width="5.8" height="1.4" fill="#777777"/><rect x="749.55" y="374.60" width="5.8" height="1.4" fill="#777777"/><rect x="759.41" y="374.60" width="5.8" height="1.4" fill="#777777"/><rect x="769.27" y="374.60" width="5.8" height="1.4" fill="#777777"/><rect x="779.13" y="374.60" width="5.8" height="1.4" fill="#777777"/><rect x="737.66" y="385.60" width="49.30" height="7.40" fill="#FCE4D6"/><rect x="737.66" y="393.00" width="49.30" height="7.40" fill="#F8CBAD"/><rect x="737.66" y="400.40" width="49.30" height="7.40" fill="#FCE4D6"/><rect x="737.66" y="407.80" width="49.30" height="7.40" fill="#F8CBAD"/><rect x="737.66" y="415.20" width="49.30" height="7.40" fill="#FCE4D6"/><rect x="737.66" y="392.50" width="49.30" height="1" fill="#F4B084"/><rect x="737.66" y="399.90" width="49.30" height="1" fill="#F4B084"/><rect x="737.66" y="407.30" width="49.30" height="1" fill="#F4B084"/><rect x="737.66" y="414.70" width="49.30" height="1" fill="#F4B084"/><rect x="747.02" y="385.60" width="1" height="37.00" fill="#F4B084"/><rect x="756.88" y="385.60" width="1" height="37.00" fill="#F4B084"/><rect x="766.74" y="385.60" width="1" height="37.00" fill="#F4B084"/><rect x="776.60" y="385.60" width="1" height="37.00" fill="#F4B084"/><rect x="738.16" y="386.10" width="48.30" height="36.00" fill="none" stroke="#F4B084" stroke-width="1.0"/><rect x="739.69" y="388.60" width="5.8" height="1.4" fill="#444444"/><rect x="749.55" y="388.60" width="5.8" height="1.4" fill="#444444"/><rect x="759.41" y="388.60" width="5.8" height="1.4" fill="#444444"/><rect x="769.27" y="388.60" width="5.8" height="1.4" fill="#444444"/><rect x="779.13" y="388.60" width="5.8" height="1.4" fill="#444444"/><rect x="739.69" y="396.00" width="5.8" height="1.4" fill="#333333"/><rect x="749.55" y="396.00" width="5.8" height="1.4" fill="#333333"/><rect x="759.41" y="396.00" width="5.8" height="1.4" fill="#333333"/><rect x="769.27" y="396.00" width="5.8" height="1.4" fill="#333333"/><rect x="779.13" y="396.00" width="5.8" height="1.4" fill="#333333"/><rect x="739.69" y="403.40" width="5.8" height="1.4" fill="#777777"/><rect x="749.55" y="403.40" width="5.8" height="1.4" fill="#777777"/><rect x="759.41" y="403.40" width="5.8" height="1.4" fill="#777777"/><rect x="769.27" y="403.40" width="5.8" height="1.4" fill="#777777"/><rect x="779.13" y="403.40" width="5.8" height="1.4" fill="#777777"/><rect x="739.69" y="410.80" width="5.8" height="1.4" fill="#444444"/><rect x="749.55" y="410.80" width="5.8" height="1.4" fill="#444444"/><rect x="759.41" y="410.80" width="5.8" height="1.4" fill="#444444"/><rect x="769.27" y="410.80" width="5.8" height="1.4" fill="#444444"/><rect x="779.13" y="410.80" width="5.8" height="1.4" fill="#444444"/><rect x="739.69" y="418.20" width="5.8" height="1.4" fill="#222222"/><rect x="749.55" y="418.20" width="5.8" height="1.4" fill="#222222"/><rect x="759.41" y="418.20" width="5.8" height="1.4" fill="#222222"/><rect x="769.27" y="418.20" width="5.8" height="1.4" fill="#222222"/><rect x="779.13" y="418.20" width="5.8" height="1.4" fill="#222222"/><rect x="737.66" y="447.20" width="49.30" height="7.40" fill="#000000"/><rect x="737.66" y="454.60" width="49.30" height="7.40" fill="#C65911"/><rect x="737.66" y="462.00" width="49.30" height="7.40" fill="#ED7D31"/><rect x="737.66" y="469.40" width="49.30" height="7.40" fill="#C65911"/><rect x="737.66" y="476.80" width="49.30" height="7.40" fill="#ED7D31"/><rect x="737.66" y="454.50" width="49.30" height="0.8" fill="#777777"/><rect x="739.69" y="450.20" width="5.8" height="1.4" fill="#9a9a9a"/><rect x="749.55" y="450.20" width="5.8" height="1.4" fill="#9a9a9a"/><rect x="759.41" y="450.20" width="5.8" height="1.4" fill="#9a9a9a"/><rect x="769.27" y="450.20" width="5.8" height="1.4" fill="#9a9a9a"/><rect x="779.13" y="450.20" width="5.8" height="1.4" fill="#9a9a9a"/><rect x="739.69" y="457.60" width="5.8" height="1.4" fill="#c8c8c8"/><rect x="749.55" y="457.60" width="5.8" height="1.4" fill="#c8c8c8"/><rect x="759.41" y="457.60" width="5.8" height="1.4" fill="#c8c8c8"/><rect x="769.27" y="457.60" width="5.8" height="1.4" fill="#c8c8c8"/><rect x="779.13" y="457.60" width="5.8" height="1.4" fill="#c8c8c8"/><rect x="739.69" y="465.00" width="5.8" height="1.4" fill="#ffffff"/><rect x="749.55" y="465.00" width="5.8" height="1.4" fill="#ffffff"/><rect x="759.41" y="465.00" width="5.8" height="1.4" fill="#ffffff"/><rect x="769.27" y="465.00" width="5.8" height="1.4" fill="#ffffff"/><rect x="779.13" y="465.00" width="5.8" height="1.4" fill="#ffffff"/><rect x="739.69" y="472.40" width="5.8" height="1.4" fill="#ffffff"/><rect x="749.55" y="472.40" width="5.8" height="1.4" fill="#ffffff"/><rect x="759.41" y="472.40" width="5.8" height="1.4" fill="#ffffff"/><rect x="769.27" y="472.40" width="5.8" height="1.4" fill="#ffffff"/><rect x="779.13" y="472.40" width="5.8" height="1.4" fill="#ffffff"/><rect x="739.69" y="479.80" width="5.8" height="1.4" fill="#d0d0d0"/><rect x="749.55" y="479.80" width="5.8" height="1.4" fill="#d0d0d0"/><rect x="759.41" y="479.80" width="5.8" height="1.4" fill="#d0d0d0"/><rect x="769.27" y="479.80" width="5.8" height="1.4" fill="#d0d0d0"/><rect x="779.13" y="479.80" width="5.8" height="1.4" fill="#d0d0d0"/><rect x="793.49" y="113.40" width="49.30" height="7.40" fill="#EDEDED"/><rect x="793.49" y="128.20" width="49.30" height="7.40" fill="#EDEDED"/><rect x="793.49" y="106.00" width="49.30" height="1" fill="#A5A5A5"/><rect x="793.49" y="112.90" width="49.30" height="1" fill="#A5A5A5"/><rect x="793.49" y="142.00" width="49.30" height="1" fill="#A5A5A5"/><rect x="795.52" y="109.00" width="5.8" height="1.4" fill="#7B7B7B"/><rect x="805.38" y="109.00" width="5.8" height="1.4" fill="#7B7B7B"/><rect x="815.24" y="109.00" width="5.8" height="1.4" fill="#7B7B7B"/><rect x="825.10" y="109.00" width="5.8" height="1.4" fill="#7B7B7B"/><rect x="834.96" y="109.00" width="5.8" height="1.4" fill="#7B7B7B"/><rect x="795.52" y="116.40" width="5.8" height="1.4" fill="#b0b0b0"/><rect x="805.38" y="116.40" width="5.8" height="1.4" fill="#b0b0b0"/><rect x="815.24" y="116.40" width="5.8" height="1.4" fill="#b0b0b0"/><rect x="825.10" y="116.40" width="5.8" height="1.4" fill="#b0b0b0"/><rect x="834.96" y="116.40" width="5.8" height="1.4" fill="#b0b0b0"/><rect x="795.52" y="123.80" width="5.8" height="1.4" fill="#b6b6b6"/><rect x="805.38" y="123.80" width="5.8" height="1.4" fill="#b6b6b6"/><rect x="815.24" y="123.80" width="5.8" height="1.4" fill="#b6b6b6"/><rect x="825.10" y="123.80" width="5.8" height="1.4" fill="#b6b6b6"/><rect x="834.96" y="123.80" width="5.8" height="1.4" fill="#b6b6b6"/><rect x="795.52" y="131.20" width="5.8" height="1.4" fill="#7B7B7B"/><rect x="805.38" y="131.20" width="5.8" height="1.4" fill="#7B7B7B"/><rect x="815.24" y="131.20" width="5.8" height="1.4" fill="#7B7B7B"/><rect x="825.10" y="131.20" width="5.8" height="1.4" fill="#7B7B7B"/><rect x="834.96" y="131.20" width="5.8" height="1.4" fill="#7B7B7B"/><rect x="795.52" y="138.60" width="5.8" height="1.4" fill="#888888"/><rect x="805.38" y="138.60" width="5.8" height="1.4" fill="#888888"/><rect x="815.24" y="138.60" width="5.8" height="1.4" fill="#888888"/><rect x="825.10" y="138.60" width="5.8" height="1.4" fill="#888888"/><rect x="834.96" y="138.60" width="5.8" height="1.4" fill="#888888"/><rect x="793.49" y="149.60" width="49.30" height="7.40" fill="#A5A5A5"/><rect x="793.49" y="156.50" width="49.30" height="1" fill="#b7b7b7"/><rect x="793.49" y="163.90" width="49.30" height="1" fill="#b7b7b7"/><rect x="793.49" y="171.30" width="49.30" height="1" fill="#b7b7b7"/><rect x="793.49" y="178.70" width="49.30" height="1" fill="#b7b7b7"/><rect x="793.99" y="150.10" width="48.30" height="36.00" fill="none" stroke="#A5A5A5" stroke-width="1.0"/><rect x="795.52" y="152.60" width="5.8" height="1.4" fill="#f4f4f4"/><rect x="805.38" y="152.60" width="5.8" height="1.4" fill="#f4f4f4"/><rect x="815.24" y="152.60" width="5.8" height="1.4" fill="#f4f4f4"/><rect x="825.10" y="152.60" width="5.8" height="1.4" fill="#f4f4f4"/><rect x="834.96" y="152.60" width="5.8" height="1.4" fill="#f4f4f4"/><rect x="795.52" y="160.00" width="5.8" height="1.4" fill="#333333"/><rect x="805.38" y="160.00" width="5.8" height="1.4" fill="#333333"/><rect x="815.24" y="160.00" width="5.8" height="1.4" fill="#333333"/><rect x="825.10" y="160.00" width="5.8" height="1.4" fill="#333333"/><rect x="834.96" y="160.00" width="5.8" height="1.4" fill="#333333"/><rect x="795.52" y="167.40" width="5.8" height="1.4" fill="#777777"/><rect x="805.38" y="167.40" width="5.8" height="1.4" fill="#777777"/><rect x="815.24" y="167.40" width="5.8" height="1.4" fill="#777777"/><rect x="825.10" y="167.40" width="5.8" height="1.4" fill="#777777"/><rect x="834.96" y="167.40" width="5.8" height="1.4" fill="#777777"/><rect x="795.52" y="174.80" width="5.8" height="1.4" fill="#999999"/><rect x="805.38" y="174.80" width="5.8" height="1.4" fill="#999999"/><rect x="815.24" y="174.80" width="5.8" height="1.4" fill="#999999"/><rect x="825.10" y="174.80" width="5.8" height="1.4" fill="#999999"/><rect x="834.96" y="174.80" width="5.8" height="1.4" fill="#999999"/><rect x="795.52" y="182.20" width="5.8" height="1.4" fill="#333333"/><rect x="805.38" y="182.20" width="5.8" height="1.4" fill="#333333"/><rect x="815.24" y="182.20" width="5.8" height="1.4" fill="#333333"/><rect x="825.10" y="182.20" width="5.8" height="1.4" fill="#333333"/><rect x="834.96" y="182.20" width="5.8" height="1.4" fill="#333333"/><rect x="793.49" y="200.60" width="49.30" height="7.40" fill="#EDEDED"/><rect x="793.49" y="215.40" width="49.30" height="7.40" fill="#EDEDED"/><rect x="793.49" y="200.10" width="49.30" height="1" fill="#bcbcbc"/><rect x="793.49" y="207.50" width="49.30" height="1" fill="#bcbcbc"/><rect x="793.49" y="214.90" width="49.30" height="1" fill="#bcbcbc"/><rect x="793.49" y="222.30" width="49.30" height="1" fill="#bcbcbc"/><rect x="802.85" y="193.20" width="1" height="37.00" fill="#bcbcbc"/><rect x="812.71" y="193.20" width="1" height="37.00" fill="#bcbcbc"/><rect x="822.57" y="193.20" width="1" height="37.00" fill="#bcbcbc"/><rect x="832.43" y="193.20" width="1" height="37.00" fill="#bcbcbc"/><rect x="793.99" y="193.70" width="48.30" height="36.00" fill="none" stroke="#A5A5A5" stroke-width="1.0"/><rect x="795.52" y="196.20" width="5.8" height="1.4" fill="#808080"/><rect x="805.38" y="196.20" width="5.8" height="1.4" fill="#808080"/><rect x="815.24" y="196.20" width="5.8" height="1.4" fill="#808080"/><rect x="825.10" y="196.20" width="5.8" height="1.4" fill="#808080"/><rect x="834.96" y="196.20" width="5.8" height="1.4" fill="#808080"/><rect x="795.52" y="203.60" width="5.8" height="1.4" fill="#555555"/><rect x="805.38" y="203.60" width="5.8" height="1.4" fill="#555555"/><rect x="815.24" y="203.60" width="5.8" height="1.4" fill="#555555"/><rect x="825.10" y="203.60" width="5.8" height="1.4" fill="#555555"/><rect x="834.96" y="203.60" width="5.8" height="1.4" fill="#555555"/><rect x="795.52" y="211.00" width="5.8" height="1.4" fill="#222222"/><rect x="805.38" y="211.00" width="5.8" height="1.4" fill="#222222"/><rect x="815.24" y="211.00" width="5.8" height="1.4" fill="#222222"/><rect x="825.10" y="211.00" width="5.8" height="1.4" fill="#222222"/><rect x="834.96" y="211.00" width="5.8" height="1.4" fill="#222222"/><rect x="795.52" y="218.40" width="5.8" height="1.4" fill="#555555"/><rect x="805.38" y="218.40" width="5.8" height="1.4" fill="#555555"/><rect x="815.24" y="218.40" width="5.8" height="1.4" fill="#555555"/><rect x="825.10" y="218.40" width="5.8" height="1.4" fill="#555555"/><rect x="834.96" y="218.40" width="5.8" height="1.4" fill="#555555"/><rect x="795.52" y="225.80" width="5.8" height="1.4" fill="#888888"/><rect x="805.38" y="225.80" width="5.8" height="1.4" fill="#888888"/><rect x="815.24" y="225.80" width="5.8" height="1.4" fill="#888888"/><rect x="825.10" y="225.80" width="5.8" height="1.4" fill="#888888"/><rect x="834.96" y="225.80" width="5.8" height="1.4" fill="#888888"/><rect x="793.49" y="262.20" width="49.30" height="7.40" fill="#EDEDED"/><rect x="793.49" y="277.00" width="49.30" height="7.40" fill="#EDEDED"/><rect x="793.49" y="254.80" width="49.30" height="7.40" fill="#A5A5A5"/><rect x="793.49" y="269.10" width="49.30" height="1" fill="#C9C9C9"/><rect x="793.49" y="276.50" width="49.30" height="1" fill="#C9C9C9"/><rect x="793.49" y="283.90" width="49.30" height="1" fill="#C9C9C9"/><rect x="793.99" y="255.30" width="48.30" height="36.00" fill="none" stroke="#C9C9C9" stroke-width="1.0"/><rect x="795.52" y="257.80" width="5.8" height="1.4" fill="#e8e8e8"/><rect x="805.38" y="257.80" width="5.8" height="1.4" fill="#e8e8e8"/><rect x="815.24" y="257.80" width="5.8" height="1.4" fill="#e8e8e8"/><rect x="825.10" y="257.80" width="5.8" height="1.4" fill="#e8e8e8"/><rect x="834.96" y="257.80" width="5.8" height="1.4" fill="#e8e8e8"/><rect x="795.52" y="265.20" width="5.8" height="1.4" fill="#444444"/><rect x="805.38" y="265.20" width="5.8" height="1.4" fill="#444444"/><rect x="815.24" y="265.20" width="5.8" height="1.4" fill="#444444"/><rect x="825.10" y="265.20" width="5.8" height="1.4" fill="#444444"/><rect x="834.96" y="265.20" width="5.8" height="1.4" fill="#444444"/><rect x="795.52" y="272.60" width="5.8" height="1.4" fill="#888888"/><rect x="805.38" y="272.60" width="5.8" height="1.4" fill="#888888"/><rect x="815.24" y="272.60" width="5.8" height="1.4" fill="#888888"/><rect x="825.10" y="272.60" width="5.8" height="1.4" fill="#888888"/><rect x="834.96" y="272.60" width="5.8" height="1.4" fill="#888888"/><rect x="795.52" y="280.00" width="5.8" height="1.4" fill="#555555"/><rect x="805.38" y="280.00" width="5.8" height="1.4" fill="#555555"/><rect x="815.24" y="280.00" width="5.8" height="1.4" fill="#555555"/><rect x="825.10" y="280.00" width="5.8" height="1.4" fill="#555555"/><rect x="834.96" y="280.00" width="5.8" height="1.4" fill="#555555"/><rect x="795.52" y="287.40" width="5.8" height="1.4" fill="#222222"/><rect x="805.38" y="287.40" width="5.8" height="1.4" fill="#222222"/><rect x="815.24" y="287.40" width="5.8" height="1.4" fill="#222222"/><rect x="825.10" y="287.40" width="5.8" height="1.4" fill="#222222"/><rect x="834.96" y="287.40" width="5.8" height="1.4" fill="#222222"/><rect x="793.49" y="298.40" width="49.30" height="7.40" fill="#A5A5A5"/><rect x="793.49" y="305.80" width="49.30" height="7.40" fill="#DBDBDB"/><rect x="793.49" y="313.20" width="49.30" height="7.40" fill="#EDEDED"/><rect x="793.49" y="320.60" width="49.30" height="7.40" fill="#DBDBDB"/><rect x="793.49" y="328.00" width="49.30" height="7.40" fill="#EDEDED"/><rect x="793.49" y="305.30" width="49.30" height="1" fill="#ffffff"/><rect x="793.49" y="312.70" width="49.30" height="1" fill="#ffffff"/><rect x="793.49" y="320.10" width="49.30" height="1" fill="#ffffff"/><rect x="793.49" y="327.50" width="49.30" height="1" fill="#ffffff"/><rect x="802.85" y="298.40" width="1" height="37.00" fill="#ffffff"/><rect x="812.71" y="298.40" width="1" height="37.00" fill="#ffffff"/><rect x="822.57" y="298.40" width="1" height="37.00" fill="#ffffff"/><rect x="832.43" y="298.40" width="1" height="37.00" fill="#ffffff"/><rect x="795.52" y="301.40" width="5.8" height="1.4" fill="#cecece"/><rect x="805.38" y="301.40" width="5.8" height="1.4" fill="#cecece"/><rect x="815.24" y="301.40" width="5.8" height="1.4" fill="#cecece"/><rect x="825.10" y="301.40" width="5.8" height="1.4" fill="#cecece"/><rect x="834.96" y="301.40" width="5.8" height="1.4" fill="#cecece"/><rect x="795.52" y="308.80" width="5.8" height="1.4" fill="#444444"/><rect x="805.38" y="308.80" width="5.8" height="1.4" fill="#444444"/><rect x="815.24" y="308.80" width="5.8" height="1.4" fill="#444444"/><rect x="825.10" y="308.80" width="5.8" height="1.4" fill="#444444"/><rect x="834.96" y="308.80" width="5.8" height="1.4" fill="#444444"/><rect x="795.52" y="316.20" width="5.8" height="1.4" fill="#333333"/><rect x="805.38" y="316.20" width="5.8" height="1.4" fill="#333333"/><rect x="815.24" y="316.20" width="5.8" height="1.4" fill="#333333"/><rect x="825.10" y="316.20" width="5.8" height="1.4" fill="#333333"/><rect x="834.96" y="316.20" width="5.8" height="1.4" fill="#333333"/><rect x="795.52" y="323.60" width="5.8" height="1.4" fill="#666666"/><rect x="805.38" y="323.60" width="5.8" height="1.4" fill="#666666"/><rect x="815.24" y="323.60" width="5.8" height="1.4" fill="#666666"/><rect x="825.10" y="323.60" width="5.8" height="1.4" fill="#666666"/><rect x="834.96" y="323.60" width="5.8" height="1.4" fill="#666666"/><rect x="795.52" y="331.00" width="5.8" height="1.4" fill="#555555"/><rect x="805.38" y="331.00" width="5.8" height="1.4" fill="#555555"/><rect x="815.24" y="331.00" width="5.8" height="1.4" fill="#555555"/><rect x="825.10" y="331.00" width="5.8" height="1.4" fill="#555555"/><rect x="834.96" y="331.00" width="5.8" height="1.4" fill="#555555"/><rect x="793.49" y="349.40" width="49.30" height="7.40" fill="#D9D9D9"/><rect x="793.49" y="364.20" width="49.30" height="7.40" fill="#D9D9D9"/><rect x="793.49" y="342.00" width="49.30" height="7.40" fill="#A5A5A5"/><rect x="793.49" y="342.00" width="49.30" height="1.5" fill="#111111"/><rect x="793.49" y="348.65" width="49.30" height="1.5" fill="#111111"/><rect x="793.49" y="377.50" width="49.30" height="1.5" fill="#777777"/><rect x="795.52" y="345.00" width="5.8" height="1.4" fill="#ffffff"/><rect x="805.38" y="345.00" width="5.8" height="1.4" fill="#ffffff"/><rect x="815.24" y="345.00" width="5.8" height="1.4" fill="#ffffff"/><rect x="825.10" y="345.00" width="5.8" height="1.4" fill="#ffffff"/><rect x="834.96" y="345.00" width="5.8" height="1.4" fill="#ffffff"/><rect x="795.52" y="352.40" width="5.8" height="1.4" fill="#777777"/><rect x="805.38" y="352.40" width="5.8" height="1.4" fill="#777777"/><rect x="815.24" y="352.40" width="5.8" height="1.4" fill="#777777"/><rect x="825.10" y="352.40" width="5.8" height="1.4" fill="#777777"/><rect x="834.96" y="352.40" width="5.8" height="1.4" fill="#777777"/><rect x="795.52" y="359.80" width="5.8" height="1.4" fill="#444444"/><rect x="805.38" y="359.80" width="5.8" height="1.4" fill="#444444"/><rect x="815.24" y="359.80" width="5.8" height="1.4" fill="#444444"/><rect x="825.10" y="359.80" width="5.8" height="1.4" fill="#444444"/><rect x="834.96" y="359.80" width="5.8" height="1.4" fill="#444444"/><rect x="795.52" y="367.20" width="5.8" height="1.4" fill="#444444"/><rect x="805.38" y="367.20" width="5.8" height="1.4" fill="#444444"/><rect x="815.24" y="367.20" width="5.8" height="1.4" fill="#444444"/><rect x="825.10" y="367.20" width="5.8" height="1.4" fill="#444444"/><rect x="834.96" y="367.20" width="5.8" height="1.4" fill="#444444"/><rect x="795.52" y="374.60" width="5.8" height="1.4" fill="#777777"/><rect x="805.38" y="374.60" width="5.8" height="1.4" fill="#777777"/><rect x="815.24" y="374.60" width="5.8" height="1.4" fill="#777777"/><rect x="825.10" y="374.60" width="5.8" height="1.4" fill="#777777"/><rect x="834.96" y="374.60" width="5.8" height="1.4" fill="#777777"/><rect x="793.49" y="385.60" width="49.30" height="7.40" fill="#EDEDED"/><rect x="793.49" y="393.00" width="49.30" height="7.40" fill="#DBDBDB"/><rect x="793.49" y="400.40" width="49.30" height="7.40" fill="#EDEDED"/><rect x="793.49" y="407.80" width="49.30" height="7.40" fill="#DBDBDB"/><rect x="793.49" y="415.20" width="49.30" height="7.40" fill="#EDEDED"/><rect x="793.49" y="392.50" width="49.30" height="1" fill="#C0C0C0"/><rect x="793.49" y="399.90" width="49.30" height="1" fill="#C0C0C0"/><rect x="793.49" y="407.30" width="49.30" height="1" fill="#C0C0C0"/><rect x="793.49" y="414.70" width="49.30" height="1" fill="#C0C0C0"/><rect x="802.85" y="385.60" width="1" height="37.00" fill="#C0C0C0"/><rect x="812.71" y="385.60" width="1" height="37.00" fill="#C0C0C0"/><rect x="822.57" y="385.60" width="1" height="37.00" fill="#C0C0C0"/><rect x="832.43" y="385.60" width="1" height="37.00" fill="#C0C0C0"/><rect x="793.99" y="386.10" width="48.30" height="36.00" fill="none" stroke="#C0C0C0" stroke-width="1.0"/><rect x="795.52" y="388.60" width="5.8" height="1.4" fill="#444444"/><rect x="805.38" y="388.60" width="5.8" height="1.4" fill="#444444"/><rect x="815.24" y="388.60" width="5.8" height="1.4" fill="#444444"/><rect x="825.10" y="388.60" width="5.8" height="1.4" fill="#444444"/><rect x="834.96" y="388.60" width="5.8" height="1.4" fill="#444444"/><rect x="795.52" y="396.00" width="5.8" height="1.4" fill="#333333"/><rect x="805.38" y="396.00" width="5.8" height="1.4" fill="#333333"/><rect x="815.24" y="396.00" width="5.8" height="1.4" fill="#333333"/><rect x="825.10" y="396.00" width="5.8" height="1.4" fill="#333333"/><rect x="834.96" y="396.00" width="5.8" height="1.4" fill="#333333"/><rect x="795.52" y="403.40" width="5.8" height="1.4" fill="#777777"/><rect x="805.38" y="403.40" width="5.8" height="1.4" fill="#777777"/><rect x="815.24" y="403.40" width="5.8" height="1.4" fill="#777777"/><rect x="825.10" y="403.40" width="5.8" height="1.4" fill="#777777"/><rect x="834.96" y="403.40" width="5.8" height="1.4" fill="#777777"/><rect x="795.52" y="410.80" width="5.8" height="1.4" fill="#444444"/><rect x="805.38" y="410.80" width="5.8" height="1.4" fill="#444444"/><rect x="815.24" y="410.80" width="5.8" height="1.4" fill="#444444"/><rect x="825.10" y="410.80" width="5.8" height="1.4" fill="#444444"/><rect x="834.96" y="410.80" width="5.8" height="1.4" fill="#444444"/><rect x="795.52" y="418.20" width="5.8" height="1.4" fill="#222222"/><rect x="805.38" y="418.20" width="5.8" height="1.4" fill="#222222"/><rect x="815.24" y="418.20" width="5.8" height="1.4" fill="#222222"/><rect x="825.10" y="418.20" width="5.8" height="1.4" fill="#222222"/><rect x="834.96" y="418.20" width="5.8" height="1.4" fill="#222222"/><rect x="793.49" y="447.20" width="49.30" height="7.40" fill="#000000"/><rect x="793.49" y="454.60" width="49.30" height="7.40" fill="#7B7B7B"/><rect x="793.49" y="462.00" width="49.30" height="7.40" fill="#A5A5A5"/><rect x="793.49" y="469.40" width="49.30" height="7.40" fill="#7B7B7B"/><rect x="793.49" y="476.80" width="49.30" height="7.40" fill="#A5A5A5"/><rect x="793.49" y="454.50" width="49.30" height="0.8" fill="#777777"/><rect x="795.52" y="450.20" width="5.8" height="1.4" fill="#9a9a9a"/><rect x="805.38" y="450.20" width="5.8" height="1.4" fill="#9a9a9a"/><rect x="815.24" y="450.20" width="5.8" height="1.4" fill="#9a9a9a"/><rect x="825.10" y="450.20" width="5.8" height="1.4" fill="#9a9a9a"/><rect x="834.96" y="450.20" width="5.8" height="1.4" fill="#9a9a9a"/><rect x="795.52" y="457.60" width="5.8" height="1.4" fill="#c8c8c8"/><rect x="805.38" y="457.60" width="5.8" height="1.4" fill="#c8c8c8"/><rect x="815.24" y="457.60" width="5.8" height="1.4" fill="#c8c8c8"/><rect x="825.10" y="457.60" width="5.8" height="1.4" fill="#c8c8c8"/><rect x="834.96" y="457.60" width="5.8" height="1.4" fill="#c8c8c8"/><rect x="795.52" y="465.00" width="5.8" height="1.4" fill="#ffffff"/><rect x="805.38" y="465.00" width="5.8" height="1.4" fill="#ffffff"/><rect x="815.24" y="465.00" width="5.8" height="1.4" fill="#ffffff"/><rect x="825.10" y="465.00" width="5.8" height="1.4" fill="#ffffff"/><rect x="834.96" y="465.00" width="5.8" height="1.4" fill="#ffffff"/><rect x="795.52" y="472.40" width="5.8" height="1.4" fill="#ffffff"/><rect x="805.38" y="472.40" width="5.8" height="1.4" fill="#ffffff"/><rect x="815.24" y="472.40" width="5.8" height="1.4" fill="#ffffff"/><rect x="825.10" y="472.40" width="5.8" height="1.4" fill="#ffffff"/><rect x="834.96" y="472.40" width="5.8" height="1.4" fill="#ffffff"/><rect x="795.52" y="479.80" width="5.8" height="1.4" fill="#d0d0d0"/><rect x="805.38" y="479.80" width="5.8" height="1.4" fill="#d0d0d0"/><rect x="815.24" y="479.80" width="5.8" height="1.4" fill="#d0d0d0"/><rect x="825.10" y="479.80" width="5.8" height="1.4" fill="#d0d0d0"/><rect x="834.96" y="479.80" width="5.8" height="1.4" fill="#d0d0d0"/><rect x="849.32" y="113.40" width="49.30" height="7.40" fill="#FFF2CC"/><rect x="849.32" y="128.20" width="49.30" height="7.40" fill="#FFF2CC"/><rect x="849.32" y="106.00" width="49.30" height="1" fill="#FFC000"/><rect x="849.32" y="112.90" width="49.30" height="1" fill="#FFC000"/><rect x="849.32" y="142.00" width="49.30" height="1" fill="#FFC000"/><rect x="851.35" y="109.00" width="5.8" height="1.4" fill="#BF8F00"/><rect x="861.21" y="109.00" width="5.8" height="1.4" fill="#BF8F00"/><rect x="871.07" y="109.00" width="5.8" height="1.4" fill="#BF8F00"/><rect x="880.93" y="109.00" width="5.8" height="1.4" fill="#BF8F00"/><rect x="890.79" y="109.00" width="5.8" height="1.4" fill="#BF8F00"/><rect x="851.35" y="116.40" width="5.8" height="1.4" fill="#d9bc66"/><rect x="861.21" y="116.40" width="5.8" height="1.4" fill="#d9bc66"/><rect x="871.07" y="116.40" width="5.8" height="1.4" fill="#d9bc66"/><rect x="880.93" y="116.40" width="5.8" height="1.4" fill="#d9bc66"/><rect x="890.79" y="116.40" width="5.8" height="1.4" fill="#d9bc66"/><rect x="851.35" y="123.80" width="5.8" height="1.4" fill="#dcc173"/><rect x="861.21" y="123.80" width="5.8" height="1.4" fill="#dcc173"/><rect x="871.07" y="123.80" width="5.8" height="1.4" fill="#dcc173"/><rect x="880.93" y="123.80" width="5.8" height="1.4" fill="#dcc173"/><rect x="890.79" y="123.80" width="5.8" height="1.4" fill="#dcc173"/><rect x="851.35" y="131.20" width="5.8" height="1.4" fill="#BF8F00"/><rect x="861.21" y="131.20" width="5.8" height="1.4" fill="#BF8F00"/><rect x="871.07" y="131.20" width="5.8" height="1.4" fill="#BF8F00"/><rect x="880.93" y="131.20" width="5.8" height="1.4" fill="#BF8F00"/><rect x="890.79" y="131.20" width="5.8" height="1.4" fill="#BF8F00"/><rect x="851.35" y="138.60" width="5.8" height="1.4" fill="#c59a1a"/><rect x="861.21" y="138.60" width="5.8" height="1.4" fill="#c59a1a"/><rect x="871.07" y="138.60" width="5.8" height="1.4" fill="#c59a1a"/><rect x="880.93" y="138.60" width="5.8" height="1.4" fill="#c59a1a"/><rect x="890.79" y="138.60" width="5.8" height="1.4" fill="#c59a1a"/><rect x="849.32" y="149.60" width="49.30" height="7.40" fill="#FFC000"/><rect x="849.32" y="156.50" width="49.30" height="1" fill="#ffcd33"/><rect x="849.32" y="163.90" width="49.30" height="1" fill="#ffcd33"/><rect x="849.32" y="171.30" width="49.30" height="1" fill="#ffcd33"/><rect x="849.32" y="178.70" width="49.30" height="1" fill="#ffcd33"/><rect x="849.82" y="150.10" width="48.30" height="36.00" fill="none" stroke="#FFC000" stroke-width="1.0"/><rect x="851.35" y="152.60" width="5.8" height="1.4" fill="#f4f4f4"/><rect x="861.21" y="152.60" width="5.8" height="1.4" fill="#f4f4f4"/><rect x="871.07" y="152.60" width="5.8" height="1.4" fill="#f4f4f4"/><rect x="880.93" y="152.60" width="5.8" height="1.4" fill="#f4f4f4"/><rect x="890.79" y="152.60" width="5.8" height="1.4" fill="#f4f4f4"/><rect x="851.35" y="160.00" width="5.8" height="1.4" fill="#333333"/><rect x="861.21" y="160.00" width="5.8" height="1.4" fill="#333333"/><rect x="871.07" y="160.00" width="5.8" height="1.4" fill="#333333"/><rect x="880.93" y="160.00" width="5.8" height="1.4" fill="#333333"/><rect x="890.79" y="160.00" width="5.8" height="1.4" fill="#333333"/><rect x="851.35" y="167.40" width="5.8" height="1.4" fill="#777777"/><rect x="861.21" y="167.40" width="5.8" height="1.4" fill="#777777"/><rect x="871.07" y="167.40" width="5.8" height="1.4" fill="#777777"/><rect x="880.93" y="167.40" width="5.8" height="1.4" fill="#777777"/><rect x="890.79" y="167.40" width="5.8" height="1.4" fill="#777777"/><rect x="851.35" y="174.80" width="5.8" height="1.4" fill="#999999"/><rect x="861.21" y="174.80" width="5.8" height="1.4" fill="#999999"/><rect x="871.07" y="174.80" width="5.8" height="1.4" fill="#999999"/><rect x="880.93" y="174.80" width="5.8" height="1.4" fill="#999999"/><rect x="890.79" y="174.80" width="5.8" height="1.4" fill="#999999"/><rect x="851.35" y="182.20" width="5.8" height="1.4" fill="#333333"/><rect x="861.21" y="182.20" width="5.8" height="1.4" fill="#333333"/><rect x="871.07" y="182.20" width="5.8" height="1.4" fill="#333333"/><rect x="880.93" y="182.20" width="5.8" height="1.4" fill="#333333"/><rect x="890.79" y="182.20" width="5.8" height="1.4" fill="#333333"/><rect x="849.32" y="200.60" width="49.30" height="7.40" fill="#FFF2CC"/><rect x="849.32" y="215.40" width="49.30" height="7.40" fill="#FFF2CC"/><rect x="849.32" y="200.10" width="49.30" height="1" fill="#ffd040"/><rect x="849.32" y="207.50" width="49.30" height="1" fill="#ffd040"/><rect x="849.32" y="214.90" width="49.30" height="1" fill="#ffd040"/><rect x="849.32" y="222.30" width="49.30" height="1" fill="#ffd040"/><rect x="858.68" y="193.20" width="1" height="37.00" fill="#ffd040"/><rect x="868.54" y="193.20" width="1" height="37.00" fill="#ffd040"/><rect x="878.40" y="193.20" width="1" height="37.00" fill="#ffd040"/><rect x="888.26" y="193.20" width="1" height="37.00" fill="#ffd040"/><rect x="849.82" y="193.70" width="48.30" height="36.00" fill="none" stroke="#FFC000" stroke-width="1.0"/><rect x="851.35" y="196.20" width="5.8" height="1.4" fill="#808080"/><rect x="861.21" y="196.20" width="5.8" height="1.4" fill="#808080"/><rect x="871.07" y="196.20" width="5.8" height="1.4" fill="#808080"/><rect x="880.93" y="196.20" width="5.8" height="1.4" fill="#808080"/><rect x="890.79" y="196.20" width="5.8" height="1.4" fill="#808080"/><rect x="851.35" y="203.60" width="5.8" height="1.4" fill="#555555"/><rect x="861.21" y="203.60" width="5.8" height="1.4" fill="#555555"/><rect x="871.07" y="203.60" width="5.8" height="1.4" fill="#555555"/><rect x="880.93" y="203.60" width="5.8" height="1.4" fill="#555555"/><rect x="890.79" y="203.60" width="5.8" height="1.4" fill="#555555"/><rect x="851.35" y="211.00" width="5.8" height="1.4" fill="#222222"/><rect x="861.21" y="211.00" width="5.8" height="1.4" fill="#222222"/><rect x="871.07" y="211.00" width="5.8" height="1.4" fill="#222222"/><rect x="880.93" y="211.00" width="5.8" height="1.4" fill="#222222"/><rect x="890.79" y="211.00" width="5.8" height="1.4" fill="#222222"/><rect x="851.35" y="218.40" width="5.8" height="1.4" fill="#555555"/><rect x="861.21" y="218.40" width="5.8" height="1.4" fill="#555555"/><rect x="871.07" y="218.40" width="5.8" height="1.4" fill="#555555"/><rect x="880.93" y="218.40" width="5.8" height="1.4" fill="#555555"/><rect x="890.79" y="218.40" width="5.8" height="1.4" fill="#555555"/><rect x="851.35" y="225.80" width="5.8" height="1.4" fill="#888888"/><rect x="861.21" y="225.80" width="5.8" height="1.4" fill="#888888"/><rect x="871.07" y="225.80" width="5.8" height="1.4" fill="#888888"/><rect x="880.93" y="225.80" width="5.8" height="1.4" fill="#888888"/><rect x="890.79" y="225.80" width="5.8" height="1.4" fill="#888888"/><rect x="849.32" y="262.20" width="49.30" height="7.40" fill="#FFF2CC"/><rect x="849.32" y="277.00" width="49.30" height="7.40" fill="#FFF2CC"/><rect x="849.32" y="254.80" width="49.30" height="7.40" fill="#FFC000"/><rect x="849.32" y="269.10" width="49.30" height="1" fill="#FFD966"/><rect x="849.32" y="276.50" width="49.30" height="1" fill="#FFD966"/><rect x="849.32" y="283.90" width="49.30" height="1" fill="#FFD966"/><rect x="849.82" y="255.30" width="48.30" height="36.00" fill="none" stroke="#FFD966" stroke-width="1.0"/><rect x="851.35" y="257.80" width="5.8" height="1.4" fill="#e8e8e8"/><rect x="861.21" y="257.80" width="5.8" height="1.4" fill="#e8e8e8"/><rect x="871.07" y="257.80" width="5.8" height="1.4" fill="#e8e8e8"/><rect x="880.93" y="257.80" width="5.8" height="1.4" fill="#e8e8e8"/><rect x="890.79" y="257.80" width="5.8" height="1.4" fill="#e8e8e8"/><rect x="851.35" y="265.20" width="5.8" height="1.4" fill="#444444"/><rect x="861.21" y="265.20" width="5.8" height="1.4" fill="#444444"/><rect x="871.07" y="265.20" width="5.8" height="1.4" fill="#444444"/><rect x="880.93" y="265.20" width="5.8" height="1.4" fill="#444444"/><rect x="890.79" y="265.20" width="5.8" height="1.4" fill="#444444"/><rect x="851.35" y="272.60" width="5.8" height="1.4" fill="#888888"/><rect x="861.21" y="272.60" width="5.8" height="1.4" fill="#888888"/><rect x="871.07" y="272.60" width="5.8" height="1.4" fill="#888888"/><rect x="880.93" y="272.60" width="5.8" height="1.4" fill="#888888"/><rect x="890.79" y="272.60" width="5.8" height="1.4" fill="#888888"/><rect x="851.35" y="280.00" width="5.8" height="1.4" fill="#555555"/><rect x="861.21" y="280.00" width="5.8" height="1.4" fill="#555555"/><rect x="871.07" y="280.00" width="5.8" height="1.4" fill="#555555"/><rect x="880.93" y="280.00" width="5.8" height="1.4" fill="#555555"/><rect x="890.79" y="280.00" width="5.8" height="1.4" fill="#555555"/><rect x="851.35" y="287.40" width="5.8" height="1.4" fill="#222222"/><rect x="861.21" y="287.40" width="5.8" height="1.4" fill="#222222"/><rect x="871.07" y="287.40" width="5.8" height="1.4" fill="#222222"/><rect x="880.93" y="287.40" width="5.8" height="1.4" fill="#222222"/><rect x="890.79" y="287.40" width="5.8" height="1.4" fill="#222222"/><rect x="849.32" y="298.40" width="49.30" height="7.40" fill="#FFC000"/><rect x="849.32" y="305.80" width="49.30" height="7.40" fill="#FFE699"/><rect x="849.32" y="313.20" width="49.30" height="7.40" fill="#FFF2CC"/><rect x="849.32" y="320.60" width="49.30" height="7.40" fill="#FFE699"/><rect x="849.32" y="328.00" width="49.30" height="7.40" fill="#FFF2CC"/><rect x="849.32" y="305.30" width="49.30" height="1" fill="#ffffff"/><rect x="849.32" y="312.70" width="49.30" height="1" fill="#ffffff"/><rect x="849.32" y="320.10" width="49.30" height="1" fill="#ffffff"/><rect x="849.32" y="327.50" width="49.30" height="1" fill="#ffffff"/><rect x="858.68" y="298.40" width="1" height="37.00" fill="#ffffff"/><rect x="868.54" y="298.40" width="1" height="37.00" fill="#ffffff"/><rect x="878.40" y="298.40" width="1" height="37.00" fill="#ffffff"/><rect x="888.26" y="298.40" width="1" height="37.00" fill="#ffffff"/><rect x="851.35" y="301.40" width="5.8" height="1.4" fill="#ffdc73"/><rect x="861.21" y="301.40" width="5.8" height="1.4" fill="#ffdc73"/><rect x="871.07" y="301.40" width="5.8" height="1.4" fill="#ffdc73"/><rect x="880.93" y="301.40" width="5.8" height="1.4" fill="#ffdc73"/><rect x="890.79" y="301.40" width="5.8" height="1.4" fill="#ffdc73"/><rect x="851.35" y="308.80" width="5.8" height="1.4" fill="#444444"/><rect x="861.21" y="308.80" width="5.8" height="1.4" fill="#444444"/><rect x="871.07" y="308.80" width="5.8" height="1.4" fill="#444444"/><rect x="880.93" y="308.80" width="5.8" height="1.4" fill="#444444"/><rect x="890.79" y="308.80" width="5.8" height="1.4" fill="#444444"/><rect x="851.35" y="316.20" width="5.8" height="1.4" fill="#333333"/><rect x="861.21" y="316.20" width="5.8" height="1.4" fill="#333333"/><rect x="871.07" y="316.20" width="5.8" height="1.4" fill="#333333"/><rect x="880.93" y="316.20" width="5.8" height="1.4" fill="#333333"/><rect x="890.79" y="316.20" width="5.8" height="1.4" fill="#333333"/><rect x="851.35" y="323.60" width="5.8" height="1.4" fill="#666666"/><rect x="861.21" y="323.60" width="5.8" height="1.4" fill="#666666"/><rect x="871.07" y="323.60" width="5.8" height="1.4" fill="#666666"/><rect x="880.93" y="323.60" width="5.8" height="1.4" fill="#666666"/><rect x="890.79" y="323.60" width="5.8" height="1.4" fill="#666666"/><rect x="851.35" y="331.00" width="5.8" height="1.4" fill="#555555"/><rect x="861.21" y="331.00" width="5.8" height="1.4" fill="#555555"/><rect x="871.07" y="331.00" width="5.8" height="1.4" fill="#555555"/><rect x="880.93" y="331.00" width="5.8" height="1.4" fill="#555555"/><rect x="890.79" y="331.00" width="5.8" height="1.4" fill="#555555"/><rect x="849.32" y="349.40" width="49.30" height="7.40" fill="#D9D9D9"/><rect x="849.32" y="364.20" width="49.30" height="7.40" fill="#D9D9D9"/><rect x="849.32" y="342.00" width="49.30" height="7.40" fill="#FFC000"/><rect x="849.32" y="342.00" width="49.30" height="1.5" fill="#111111"/><rect x="849.32" y="348.65" width="49.30" height="1.5" fill="#111111"/><rect x="849.32" y="377.50" width="49.30" height="1.5" fill="#777777"/><rect x="851.35" y="345.00" width="5.8" height="1.4" fill="#ffffff"/><rect x="861.21" y="345.00" width="5.8" height="1.4" fill="#ffffff"/><rect x="871.07" y="345.00" width="5.8" height="1.4" fill="#ffffff"/><rect x="880.93" y="345.00" width="5.8" height="1.4" fill="#ffffff"/><rect x="890.79" y="345.00" width="5.8" height="1.4" fill="#ffffff"/><rect x="851.35" y="352.40" width="5.8" height="1.4" fill="#777777"/><rect x="861.21" y="352.40" width="5.8" height="1.4" fill="#777777"/><rect x="871.07" y="352.40" width="5.8" height="1.4" fill="#777777"/><rect x="880.93" y="352.40" width="5.8" height="1.4" fill="#777777"/><rect x="890.79" y="352.40" width="5.8" height="1.4" fill="#777777"/><rect x="851.35" y="359.80" width="5.8" height="1.4" fill="#444444"/><rect x="861.21" y="359.80" width="5.8" height="1.4" fill="#444444"/><rect x="871.07" y="359.80" width="5.8" height="1.4" fill="#444444"/><rect x="880.93" y="359.80" width="5.8" height="1.4" fill="#444444"/><rect x="890.79" y="359.80" width="5.8" height="1.4" fill="#444444"/><rect x="851.35" y="367.20" width="5.8" height="1.4" fill="#444444"/><rect x="861.21" y="367.20" width="5.8" height="1.4" fill="#444444"/><rect x="871.07" y="367.20" width="5.8" height="1.4" fill="#444444"/><rect x="880.93" y="367.20" width="5.8" height="1.4" fill="#444444"/><rect x="890.79" y="367.20" width="5.8" height="1.4" fill="#444444"/><rect x="851.35" y="374.60" width="5.8" height="1.4" fill="#777777"/><rect x="861.21" y="374.60" width="5.8" height="1.4" fill="#777777"/><rect x="871.07" y="374.60" width="5.8" height="1.4" fill="#777777"/><rect x="880.93" y="374.60" width="5.8" height="1.4" fill="#777777"/><rect x="890.79" y="374.60" width="5.8" height="1.4" fill="#777777"/><rect x="849.32" y="385.60" width="49.30" height="7.40" fill="#FFF2CC"/><rect x="849.32" y="393.00" width="49.30" height="7.40" fill="#FFE699"/><rect x="849.32" y="400.40" width="49.30" height="7.40" fill="#FFF2CC"/><rect x="849.32" y="407.80" width="49.30" height="7.40" fill="#FFE699"/><rect x="849.32" y="415.20" width="49.30" height="7.40" fill="#FFF2CC"/><rect x="849.32" y="392.50" width="49.30" height="1" fill="#FFD966"/><rect x="849.32" y="399.90" width="49.30" height="1" fill="#FFD966"/><rect x="849.32" y="407.30" width="49.30" height="1" fill="#FFD966"/><rect x="849.32" y="414.70" width="49.30" height="1" fill="#FFD966"/><rect x="858.68" y="385.60" width="1" height="37.00" fill="#FFD966"/><rect x="868.54" y="385.60" width="1" height="37.00" fill="#FFD966"/><rect x="878.40" y="385.60" width="1" height="37.00" fill="#FFD966"/><rect x="888.26" y="385.60" width="1" height="37.00" fill="#FFD966"/><rect x="849.82" y="386.10" width="48.30" height="36.00" fill="none" stroke="#FFD966" stroke-width="1.0"/><rect x="851.35" y="388.60" width="5.8" height="1.4" fill="#444444"/><rect x="861.21" y="388.60" width="5.8" height="1.4" fill="#444444"/><rect x="871.07" y="388.60" width="5.8" height="1.4" fill="#444444"/><rect x="880.93" y="388.60" width="5.8" height="1.4" fill="#444444"/><rect x="890.79" y="388.60" width="5.8" height="1.4" fill="#444444"/><rect x="851.35" y="396.00" width="5.8" height="1.4" fill="#333333"/><rect x="861.21" y="396.00" width="5.8" height="1.4" fill="#333333"/><rect x="871.07" y="396.00" width="5.8" height="1.4" fill="#333333"/><rect x="880.93" y="396.00" width="5.8" height="1.4" fill="#333333"/><rect x="890.79" y="396.00" width="5.8" height="1.4" fill="#333333"/><rect x="851.35" y="403.40" width="5.8" height="1.4" fill="#777777"/><rect x="861.21" y="403.40" width="5.8" height="1.4" fill="#777777"/><rect x="871.07" y="403.40" width="5.8" height="1.4" fill="#777777"/><rect x="880.93" y="403.40" width="5.8" height="1.4" fill="#777777"/><rect x="890.79" y="403.40" width="5.8" height="1.4" fill="#777777"/><rect x="851.35" y="410.80" width="5.8" height="1.4" fill="#444444"/><rect x="861.21" y="410.80" width="5.8" height="1.4" fill="#444444"/><rect x="871.07" y="410.80" width="5.8" height="1.4" fill="#444444"/><rect x="880.93" y="410.80" width="5.8" height="1.4" fill="#444444"/><rect x="890.79" y="410.80" width="5.8" height="1.4" fill="#444444"/><rect x="851.35" y="418.20" width="5.8" height="1.4" fill="#222222"/><rect x="861.21" y="418.20" width="5.8" height="1.4" fill="#222222"/><rect x="871.07" y="418.20" width="5.8" height="1.4" fill="#222222"/><rect x="880.93" y="418.20" width="5.8" height="1.4" fill="#222222"/><rect x="890.79" y="418.20" width="5.8" height="1.4" fill="#222222"/><rect x="849.32" y="447.20" width="49.30" height="7.40" fill="#000000"/><rect x="849.32" y="454.60" width="49.30" height="7.40" fill="#BF8F00"/><rect x="849.32" y="462.00" width="49.30" height="7.40" fill="#FFC000"/><rect x="849.32" y="469.40" width="49.30" height="7.40" fill="#BF8F00"/><rect x="849.32" y="476.80" width="49.30" height="7.40" fill="#FFC000"/><rect x="849.32" y="454.50" width="49.30" height="0.8" fill="#777777"/><rect x="851.35" y="450.20" width="5.8" height="1.4" fill="#9a9a9a"/><rect x="861.21" y="450.20" width="5.8" height="1.4" fill="#9a9a9a"/><rect x="871.07" y="450.20" width="5.8" height="1.4" fill="#9a9a9a"/><rect x="880.93" y="450.20" width="5.8" height="1.4" fill="#9a9a9a"/><rect x="890.79" y="450.20" width="5.8" height="1.4" fill="#9a9a9a"/><rect x="851.35" y="457.60" width="5.8" height="1.4" fill="#c8c8c8"/><rect x="861.21" y="457.60" width="5.8" height="1.4" fill="#c8c8c8"/><rect x="871.07" y="457.60" width="5.8" height="1.4" fill="#c8c8c8"/><rect x="880.93" y="457.60" width="5.8" height="1.4" fill="#c8c8c8"/><rect x="890.79" y="457.60" width="5.8" height="1.4" fill="#c8c8c8"/><rect x="851.35" y="465.00" width="5.8" height="1.4" fill="#ffffff"/><rect x="861.21" y="465.00" width="5.8" height="1.4" fill="#ffffff"/><rect x="871.07" y="465.00" width="5.8" height="1.4" fill="#ffffff"/><rect x="880.93" y="465.00" width="5.8" height="1.4" fill="#ffffff"/><rect x="890.79" y="465.00" width="5.8" height="1.4" fill="#ffffff"/><rect x="851.35" y="472.40" width="5.8" height="1.4" fill="#ffffff"/><rect x="861.21" y="472.40" width="5.8" height="1.4" fill="#ffffff"/><rect x="871.07" y="472.40" width="5.8" height="1.4" fill="#ffffff"/><rect x="880.93" y="472.40" width="5.8" height="1.4" fill="#ffffff"/><rect x="890.79" y="472.40" width="5.8" height="1.4" fill="#ffffff"/><rect x="851.35" y="479.80" width="5.8" height="1.4" fill="#d0d0d0"/><rect x="861.21" y="479.80" width="5.8" height="1.4" fill="#d0d0d0"/><rect x="871.07" y="479.80" width="5.8" height="1.4" fill="#d0d0d0"/><rect x="880.93" y="479.80" width="5.8" height="1.4" fill="#d0d0d0"/><rect x="890.79" y="479.80" width="5.8" height="1.4" fill="#d0d0d0"/><rect x="905.15" y="113.40" width="49.30" height="7.40" fill="#D9E1F2"/><rect x="905.15" y="128.20" width="49.30" height="7.40" fill="#D9E1F2"/><rect x="905.15" y="106.00" width="49.30" height="1" fill="#4472C4"/><rect x="905.15" y="112.90" width="49.30" height="1" fill="#4472C4"/><rect x="905.15" y="142.00" width="49.30" height="1" fill="#4472C4"/><rect x="907.18" y="109.00" width="5.8" height="1.4" fill="#305496"/><rect x="917.04" y="109.00" width="5.8" height="1.4" fill="#305496"/><rect x="926.90" y="109.00" width="5.8" height="1.4" fill="#305496"/><rect x="936.76" y="109.00" width="5.8" height="1.4" fill="#305496"/><rect x="946.62" y="109.00" width="5.8" height="1.4" fill="#305496"/><rect x="907.18" y="116.40" width="5.8" height="1.4" fill="#8398c0"/><rect x="917.04" y="116.40" width="5.8" height="1.4" fill="#8398c0"/><rect x="926.90" y="116.40" width="5.8" height="1.4" fill="#8398c0"/><rect x="936.76" y="116.40" width="5.8" height="1.4" fill="#8398c0"/><rect x="946.62" y="116.40" width="5.8" height="1.4" fill="#8398c0"/><rect x="907.18" y="123.80" width="5.8" height="1.4" fill="#8da1c5"/><rect x="917.04" y="123.80" width="5.8" height="1.4" fill="#8da1c5"/><rect x="926.90" y="123.80" width="5.8" height="1.4" fill="#8da1c5"/><rect x="936.76" y="123.80" width="5.8" height="1.4" fill="#8da1c5"/><rect x="946.62" y="123.80" width="5.8" height="1.4" fill="#8da1c5"/><rect x="907.18" y="131.20" width="5.8" height="1.4" fill="#305496"/><rect x="917.04" y="131.20" width="5.8" height="1.4" fill="#305496"/><rect x="926.90" y="131.20" width="5.8" height="1.4" fill="#305496"/><rect x="936.76" y="131.20" width="5.8" height="1.4" fill="#305496"/><rect x="946.62" y="131.20" width="5.8" height="1.4" fill="#305496"/><rect x="907.18" y="138.60" width="5.8" height="1.4" fill="#4565a0"/><rect x="917.04" y="138.60" width="5.8" height="1.4" fill="#4565a0"/><rect x="926.90" y="138.60" width="5.8" height="1.4" fill="#4565a0"/><rect x="936.76" y="138.60" width="5.8" height="1.4" fill="#4565a0"/><rect x="946.62" y="138.60" width="5.8" height="1.4" fill="#4565a0"/><rect x="905.15" y="149.60" width="49.30" height="7.40" fill="#4472C4"/><rect x="905.15" y="156.50" width="49.30" height="1" fill="#698ed0"/><rect x="905.15" y="163.90" width="49.30" height="1" fill="#698ed0"/><rect x="905.15" y="171.30" width="49.30" height="1" fill="#698ed0"/><rect x="905.15" y="178.70" width="49.30" height="1" fill="#698ed0"/><rect x="905.65" y="150.10" width="48.30" height="36.00" fill="none" stroke="#4472C4" stroke-width="1.0"/><rect x="907.18" y="152.60" width="5.8" height="1.4" fill="#f4f4f4"/><rect x="917.04" y="152.60" width="5.8" height="1.4" fill="#f4f4f4"/><rect x="926.90" y="152.60" width="5.8" height="1.4" fill="#f4f4f4"/><rect x="936.76" y="152.60" width="5.8" height="1.4" fill="#f4f4f4"/><rect x="946.62" y="152.60" width="5.8" height="1.4" fill="#f4f4f4"/><rect x="907.18" y="160.00" width="5.8" height="1.4" fill="#333333"/><rect x="917.04" y="160.00" width="5.8" height="1.4" fill="#333333"/><rect x="926.90" y="160.00" width="5.8" height="1.4" fill="#333333"/><rect x="936.76" y="160.00" width="5.8" height="1.4" fill="#333333"/><rect x="946.62" y="160.00" width="5.8" height="1.4" fill="#333333"/><rect x="907.18" y="167.40" width="5.8" height="1.4" fill="#777777"/><rect x="917.04" y="167.40" width="5.8" height="1.4" fill="#777777"/><rect x="926.90" y="167.40" width="5.8" height="1.4" fill="#777777"/><rect x="936.76" y="167.40" width="5.8" height="1.4" fill="#777777"/><rect x="946.62" y="167.40" width="5.8" height="1.4" fill="#777777"/><rect x="907.18" y="174.80" width="5.8" height="1.4" fill="#999999"/><rect x="917.04" y="174.80" width="5.8" height="1.4" fill="#999999"/><rect x="926.90" y="174.80" width="5.8" height="1.4" fill="#999999"/><rect x="936.76" y="174.80" width="5.8" height="1.4" fill="#999999"/><rect x="946.62" y="174.80" width="5.8" height="1.4" fill="#999999"/><rect x="907.18" y="182.20" width="5.8" height="1.4" fill="#333333"/><rect x="917.04" y="182.20" width="5.8" height="1.4" fill="#333333"/><rect x="926.90" y="182.20" width="5.8" height="1.4" fill="#333333"/><rect x="936.76" y="182.20" width="5.8" height="1.4" fill="#333333"/><rect x="946.62" y="182.20" width="5.8" height="1.4" fill="#333333"/><rect x="905.15" y="200.60" width="49.30" height="7.40" fill="#D9E1F2"/><rect x="905.15" y="215.40" width="49.30" height="7.40" fill="#D9E1F2"/><rect x="905.15" y="200.10" width="49.30" height="1" fill="#7395d3"/><rect x="905.15" y="207.50" width="49.30" height="1" fill="#7395d3"/><rect x="905.15" y="214.90" width="49.30" height="1" fill="#7395d3"/><rect x="905.15" y="222.30" width="49.30" height="1" fill="#7395d3"/><rect x="914.51" y="193.20" width="1" height="37.00" fill="#7395d3"/><rect x="924.37" y="193.20" width="1" height="37.00" fill="#7395d3"/><rect x="934.23" y="193.20" width="1" height="37.00" fill="#7395d3"/><rect x="944.09" y="193.20" width="1" height="37.00" fill="#7395d3"/><rect x="905.65" y="193.70" width="48.30" height="36.00" fill="none" stroke="#4472C4" stroke-width="1.0"/><rect x="907.18" y="196.20" width="5.8" height="1.4" fill="#808080"/><rect x="917.04" y="196.20" width="5.8" height="1.4" fill="#808080"/><rect x="926.90" y="196.20" width="5.8" height="1.4" fill="#808080"/><rect x="936.76" y="196.20" width="5.8" height="1.4" fill="#808080"/><rect x="946.62" y="196.20" width="5.8" height="1.4" fill="#808080"/><rect x="907.18" y="203.60" width="5.8" height="1.4" fill="#555555"/><rect x="917.04" y="203.60" width="5.8" height="1.4" fill="#555555"/><rect x="926.90" y="203.60" width="5.8" height="1.4" fill="#555555"/><rect x="936.76" y="203.60" width="5.8" height="1.4" fill="#555555"/><rect x="946.62" y="203.60" width="5.8" height="1.4" fill="#555555"/><rect x="907.18" y="211.00" width="5.8" height="1.4" fill="#222222"/><rect x="917.04" y="211.00" width="5.8" height="1.4" fill="#222222"/><rect x="926.90" y="211.00" width="5.8" height="1.4" fill="#222222"/><rect x="936.76" y="211.00" width="5.8" height="1.4" fill="#222222"/><rect x="946.62" y="211.00" width="5.8" height="1.4" fill="#222222"/><rect x="907.18" y="218.40" width="5.8" height="1.4" fill="#555555"/><rect x="917.04" y="218.40" width="5.8" height="1.4" fill="#555555"/><rect x="926.90" y="218.40" width="5.8" height="1.4" fill="#555555"/><rect x="936.76" y="218.40" width="5.8" height="1.4" fill="#555555"/><rect x="946.62" y="218.40" width="5.8" height="1.4" fill="#555555"/><rect x="907.18" y="225.80" width="5.8" height="1.4" fill="#888888"/><rect x="917.04" y="225.80" width="5.8" height="1.4" fill="#888888"/><rect x="926.90" y="225.80" width="5.8" height="1.4" fill="#888888"/><rect x="936.76" y="225.80" width="5.8" height="1.4" fill="#888888"/><rect x="946.62" y="225.80" width="5.8" height="1.4" fill="#888888"/><rect x="905.15" y="262.20" width="49.30" height="7.40" fill="#D9E1F2"/><rect x="905.15" y="277.00" width="49.30" height="7.40" fill="#D9E1F2"/><rect x="905.15" y="254.80" width="49.30" height="7.40" fill="#4472C4"/><rect x="905.15" y="269.10" width="49.30" height="1" fill="#8EA9DB"/><rect x="905.15" y="276.50" width="49.30" height="1" fill="#8EA9DB"/><rect x="905.15" y="283.90" width="49.30" height="1" fill="#8EA9DB"/><rect x="905.65" y="255.30" width="48.30" height="36.00" fill="none" stroke="#8EA9DB" stroke-width="1.0"/><rect x="907.18" y="257.80" width="5.8" height="1.4" fill="#e8e8e8"/><rect x="917.04" y="257.80" width="5.8" height="1.4" fill="#e8e8e8"/><rect x="926.90" y="257.80" width="5.8" height="1.4" fill="#e8e8e8"/><rect x="936.76" y="257.80" width="5.8" height="1.4" fill="#e8e8e8"/><rect x="946.62" y="257.80" width="5.8" height="1.4" fill="#e8e8e8"/><rect x="907.18" y="265.20" width="5.8" height="1.4" fill="#444444"/><rect x="917.04" y="265.20" width="5.8" height="1.4" fill="#444444"/><rect x="926.90" y="265.20" width="5.8" height="1.4" fill="#444444"/><rect x="936.76" y="265.20" width="5.8" height="1.4" fill="#444444"/><rect x="946.62" y="265.20" width="5.8" height="1.4" fill="#444444"/><rect x="907.18" y="272.60" width="5.8" height="1.4" fill="#888888"/><rect x="917.04" y="272.60" width="5.8" height="1.4" fill="#888888"/><rect x="926.90" y="272.60" width="5.8" height="1.4" fill="#888888"/><rect x="936.76" y="272.60" width="5.8" height="1.4" fill="#888888"/><rect x="946.62" y="272.60" width="5.8" height="1.4" fill="#888888"/><rect x="907.18" y="280.00" width="5.8" height="1.4" fill="#555555"/><rect x="917.04" y="280.00" width="5.8" height="1.4" fill="#555555"/><rect x="926.90" y="280.00" width="5.8" height="1.4" fill="#555555"/><rect x="936.76" y="280.00" width="5.8" height="1.4" fill="#555555"/><rect x="946.62" y="280.00" width="5.8" height="1.4" fill="#555555"/><rect x="907.18" y="287.40" width="5.8" height="1.4" fill="#222222"/><rect x="917.04" y="287.40" width="5.8" height="1.4" fill="#222222"/><rect x="926.90" y="287.40" width="5.8" height="1.4" fill="#222222"/><rect x="936.76" y="287.40" width="5.8" height="1.4" fill="#222222"/><rect x="946.62" y="287.40" width="5.8" height="1.4" fill="#222222"/><rect x="905.15" y="298.40" width="49.30" height="7.40" fill="#4472C4"/><rect x="905.15" y="305.80" width="49.30" height="7.40" fill="#B4C6E7"/><rect x="905.15" y="313.20" width="49.30" height="7.40" fill="#D9E1F2"/><rect x="905.15" y="320.60" width="49.30" height="7.40" fill="#B4C6E7"/><rect x="905.15" y="328.00" width="49.30" height="7.40" fill="#D9E1F2"/><rect x="905.15" y="305.30" width="49.30" height="1" fill="#ffffff"/><rect x="905.15" y="312.70" width="49.30" height="1" fill="#ffffff"/><rect x="905.15" y="320.10" width="49.30" height="1" fill="#ffffff"/><rect x="905.15" y="327.50" width="49.30" height="1" fill="#ffffff"/><rect x="914.51" y="298.40" width="1" height="37.00" fill="#ffffff"/><rect x="924.37" y="298.40" width="1" height="37.00" fill="#ffffff"/><rect x="934.23" y="298.40" width="1" height="37.00" fill="#ffffff"/><rect x="944.09" y="298.40" width="1" height="37.00" fill="#ffffff"/><rect x="907.18" y="301.40" width="5.8" height="1.4" fill="#98b1df"/><rect x="917.04" y="301.40" width="5.8" height="1.4" fill="#98b1df"/><rect x="926.90" y="301.40" width="5.8" height="1.4" fill="#98b1df"/><rect x="936.76" y="301.40" width="5.8" height="1.4" fill="#98b1df"/><rect x="946.62" y="301.40" width="5.8" height="1.4" fill="#98b1df"/><rect x="907.18" y="308.80" width="5.8" height="1.4" fill="#444444"/><rect x="917.04" y="308.80" width="5.8" height="1.4" fill="#444444"/><rect x="926.90" y="308.80" width="5.8" height="1.4" fill="#444444"/><rect x="936.76" y="308.80" width="5.8" height="1.4" fill="#444444"/><rect x="946.62" y="308.80" width="5.8" height="1.4" fill="#444444"/><rect x="907.18" y="316.20" width="5.8" height="1.4" fill="#333333"/><rect x="917.04" y="316.20" width="5.8" height="1.4" fill="#333333"/><rect x="926.90" y="316.20" width="5.8" height="1.4" fill="#333333"/><rect x="936.76" y="316.20" width="5.8" height="1.4" fill="#333333"/><rect x="946.62" y="316.20" width="5.8" height="1.4" fill="#333333"/><rect x="907.18" y="323.60" width="5.8" height="1.4" fill="#666666"/><rect x="917.04" y="323.60" width="5.8" height="1.4" fill="#666666"/><rect x="926.90" y="323.60" width="5.8" height="1.4" fill="#666666"/><rect x="936.76" y="323.60" width="5.8" height="1.4" fill="#666666"/><rect x="946.62" y="323.60" width="5.8" height="1.4" fill="#666666"/><rect x="907.18" y="331.00" width="5.8" height="1.4" fill="#555555"/><rect x="917.04" y="331.00" width="5.8" height="1.4" fill="#555555"/><rect x="926.90" y="331.00" width="5.8" height="1.4" fill="#555555"/><rect x="936.76" y="331.00" width="5.8" height="1.4" fill="#555555"/><rect x="946.62" y="331.00" width="5.8" height="1.4" fill="#555555"/><rect x="905.15" y="349.40" width="49.30" height="7.40" fill="#D9D9D9"/><rect x="905.15" y="364.20" width="49.30" height="7.40" fill="#D9D9D9"/><rect x="905.15" y="342.00" width="49.30" height="7.40" fill="#4472C4"/><rect x="905.15" y="342.00" width="49.30" height="1.5" fill="#111111"/><rect x="905.15" y="348.65" width="49.30" height="1.5" fill="#111111"/><rect x="905.15" y="377.50" width="49.30" height="1.5" fill="#777777"/><rect x="907.18" y="345.00" width="5.8" height="1.4" fill="#ffffff"/><rect x="917.04" y="345.00" width="5.8" height="1.4" fill="#ffffff"/><rect x="926.90" y="345.00" width="5.8" height="1.4" fill="#ffffff"/><rect x="936.76" y="345.00" width="5.8" height="1.4" fill="#ffffff"/><rect x="946.62" y="345.00" width="5.8" height="1.4" fill="#ffffff"/><rect x="907.18" y="352.40" width="5.8" height="1.4" fill="#777777"/><rect x="917.04" y="352.40" width="5.8" height="1.4" fill="#777777"/><rect x="926.90" y="352.40" width="5.8" height="1.4" fill="#777777"/><rect x="936.76" y="352.40" width="5.8" height="1.4" fill="#777777"/><rect x="946.62" y="352.40" width="5.8" height="1.4" fill="#777777"/><rect x="907.18" y="359.80" width="5.8" height="1.4" fill="#444444"/><rect x="917.04" y="359.80" width="5.8" height="1.4" fill="#444444"/><rect x="926.90" y="359.80" width="5.8" height="1.4" fill="#444444"/><rect x="936.76" y="359.80" width="5.8" height="1.4" fill="#444444"/><rect x="946.62" y="359.80" width="5.8" height="1.4" fill="#444444"/><rect x="907.18" y="367.20" width="5.8" height="1.4" fill="#444444"/><rect x="917.04" y="367.20" width="5.8" height="1.4" fill="#444444"/><rect x="926.90" y="367.20" width="5.8" height="1.4" fill="#444444"/><rect x="936.76" y="367.20" width="5.8" height="1.4" fill="#444444"/><rect x="946.62" y="367.20" width="5.8" height="1.4" fill="#444444"/><rect x="907.18" y="374.60" width="5.8" height="1.4" fill="#777777"/><rect x="917.04" y="374.60" width="5.8" height="1.4" fill="#777777"/><rect x="926.90" y="374.60" width="5.8" height="1.4" fill="#777777"/><rect x="936.76" y="374.60" width="5.8" height="1.4" fill="#777777"/><rect x="946.62" y="374.60" width="5.8" height="1.4" fill="#777777"/><rect x="905.15" y="385.60" width="49.30" height="7.40" fill="#D9E1F2"/><rect x="905.15" y="393.00" width="49.30" height="7.40" fill="#B4C6E7"/><rect x="905.15" y="400.40" width="49.30" height="7.40" fill="#D9E1F2"/><rect x="905.15" y="407.80" width="49.30" height="7.40" fill="#B4C6E7"/><rect x="905.15" y="415.20" width="49.30" height="7.40" fill="#D9E1F2"/><rect x="905.15" y="392.50" width="49.30" height="1" fill="#8EA9DB"/><rect x="905.15" y="399.90" width="49.30" height="1" fill="#8EA9DB"/><rect x="905.15" y="407.30" width="49.30" height="1" fill="#8EA9DB"/><rect x="905.15" y="414.70" width="49.30" height="1" fill="#8EA9DB"/><rect x="914.51" y="385.60" width="1" height="37.00" fill="#8EA9DB"/><rect x="924.37" y="385.60" width="1" height="37.00" fill="#8EA9DB"/><rect x="934.23" y="385.60" width="1" height="37.00" fill="#8EA9DB"/><rect x="944.09" y="385.60" width="1" height="37.00" fill="#8EA9DB"/><rect x="905.65" y="386.10" width="48.30" height="36.00" fill="none" stroke="#8EA9DB" stroke-width="1.0"/><rect x="907.18" y="388.60" width="5.8" height="1.4" fill="#444444"/><rect x="917.04" y="388.60" width="5.8" height="1.4" fill="#444444"/><rect x="926.90" y="388.60" width="5.8" height="1.4" fill="#444444"/><rect x="936.76" y="388.60" width="5.8" height="1.4" fill="#444444"/><rect x="946.62" y="388.60" width="5.8" height="1.4" fill="#444444"/><rect x="907.18" y="396.00" width="5.8" height="1.4" fill="#333333"/><rect x="917.04" y="396.00" width="5.8" height="1.4" fill="#333333"/><rect x="926.90" y="396.00" width="5.8" height="1.4" fill="#333333"/><rect x="936.76" y="396.00" width="5.8" height="1.4" fill="#333333"/><rect x="946.62" y="396.00" width="5.8" height="1.4" fill="#333333"/><rect x="907.18" y="403.40" width="5.8" height="1.4" fill="#777777"/><rect x="917.04" y="403.40" width="5.8" height="1.4" fill="#777777"/><rect x="926.90" y="403.40" width="5.8" height="1.4" fill="#777777"/><rect x="936.76" y="403.40" width="5.8" height="1.4" fill="#777777"/><rect x="946.62" y="403.40" width="5.8" height="1.4" fill="#777777"/><rect x="907.18" y="410.80" width="5.8" height="1.4" fill="#444444"/><rect x="917.04" y="410.80" width="5.8" height="1.4" fill="#444444"/><rect x="926.90" y="410.80" width="5.8" height="1.4" fill="#444444"/><rect x="936.76" y="410.80" width="5.8" height="1.4" fill="#444444"/><rect x="946.62" y="410.80" width="5.8" height="1.4" fill="#444444"/><rect x="907.18" y="418.20" width="5.8" height="1.4" fill="#222222"/><rect x="917.04" y="418.20" width="5.8" height="1.4" fill="#222222"/><rect x="926.90" y="418.20" width="5.8" height="1.4" fill="#222222"/><rect x="936.76" y="418.20" width="5.8" height="1.4" fill="#222222"/><rect x="946.62" y="418.20" width="5.8" height="1.4" fill="#222222"/><rect x="905.15" y="447.20" width="49.30" height="7.40" fill="#000000"/><rect x="905.15" y="454.60" width="49.30" height="7.40" fill="#305496"/><rect x="905.15" y="462.00" width="49.30" height="7.40" fill="#4472C4"/><rect x="905.15" y="469.40" width="49.30" height="7.40" fill="#305496"/><rect x="905.15" y="476.80" width="49.30" height="7.40" fill="#4472C4"/><rect x="905.15" y="454.50" width="49.30" height="0.8" fill="#777777"/><rect x="907.18" y="450.20" width="5.8" height="1.4" fill="#9a9a9a"/><rect x="917.04" y="450.20" width="5.8" height="1.4" fill="#9a9a9a"/><rect x="926.90" y="450.20" width="5.8" height="1.4" fill="#9a9a9a"/><rect x="936.76" y="450.20" width="5.8" height="1.4" fill="#9a9a9a"/><rect x="946.62" y="450.20" width="5.8" height="1.4" fill="#9a9a9a"/><rect x="907.18" y="457.60" width="5.8" height="1.4" fill="#c8c8c8"/><rect x="917.04" y="457.60" width="5.8" height="1.4" fill="#c8c8c8"/><rect x="926.90" y="457.60" width="5.8" height="1.4" fill="#c8c8c8"/><rect x="936.76" y="457.60" width="5.8" height="1.4" fill="#c8c8c8"/><rect x="946.62" y="457.60" width="5.8" height="1.4" fill="#c8c8c8"/><rect x="907.18" y="465.00" width="5.8" height="1.4" fill="#ffffff"/><rect x="917.04" y="465.00" width="5.8" height="1.4" fill="#ffffff"/><rect x="926.90" y="465.00" width="5.8" height="1.4" fill="#ffffff"/><rect x="936.76" y="465.00" width="5.8" height="1.4" fill="#ffffff"/><rect x="946.62" y="465.00" width="5.8" height="1.4" fill="#ffffff"/><rect x="907.18" y="472.40" width="5.8" height="1.4" fill="#ffffff"/><rect x="917.04" y="472.40" width="5.8" height="1.4" fill="#ffffff"/><rect x="926.90" y="472.40" width="5.8" height="1.4" fill="#ffffff"/><rect x="936.76" y="472.40" width="5.8" height="1.4" fill="#ffffff"/><rect x="946.62" y="472.40" width="5.8" height="1.4" fill="#ffffff"/><rect x="907.18" y="479.80" width="5.8" height="1.4" fill="#d0d0d0"/><rect x="917.04" y="479.80" width="5.8" height="1.4" fill="#d0d0d0"/><rect x="926.90" y="479.80" width="5.8" height="1.4" fill="#d0d0d0"/><rect x="936.76" y="479.80" width="5.8" height="1.4" fill="#d0d0d0"/><rect x="946.62" y="479.80" width="5.8" height="1.4" fill="#d0d0d0"/><rect x="960.98" y="113.40" width="49.30" height="7.40" fill="#E2EFDA"/><rect x="960.98" y="128.20" width="49.30" height="7.40" fill="#E2EFDA"/><rect x="960.98" y="106.00" width="49.30" height="1" fill="#70AD47"/><rect x="960.98" y="112.90" width="49.30" height="1" fill="#70AD47"/><rect x="960.98" y="142.00" width="49.30" height="1" fill="#70AD47"/><rect x="963.01" y="109.00" width="5.8" height="1.4" fill="#548235"/><rect x="972.87" y="109.00" width="5.8" height="1.4" fill="#548235"/><rect x="982.73" y="109.00" width="5.8" height="1.4" fill="#548235"/><rect x="992.59" y="109.00" width="5.8" height="1.4" fill="#548235"/><rect x="1002.45" y="109.00" width="5.8" height="1.4" fill="#548235"/><rect x="963.01" y="116.40" width="5.8" height="1.4" fill="#98b486"/><rect x="972.87" y="116.40" width="5.8" height="1.4" fill="#98b486"/><rect x="982.73" y="116.40" width="5.8" height="1.4" fill="#98b486"/><rect x="992.59" y="116.40" width="5.8" height="1.4" fill="#98b486"/><rect x="1002.45" y="116.40" width="5.8" height="1.4" fill="#98b486"/><rect x="963.01" y="123.80" width="5.8" height="1.4" fill="#a1ba90"/><rect x="972.87" y="123.80" width="5.8" height="1.4" fill="#a1ba90"/><rect x="982.73" y="123.80" width="5.8" height="1.4" fill="#a1ba90"/><rect x="992.59" y="123.80" width="5.8" height="1.4" fill="#a1ba90"/><rect x="1002.45" y="123.80" width="5.8" height="1.4" fill="#a1ba90"/><rect x="963.01" y="131.20" width="5.8" height="1.4" fill="#548235"/><rect x="972.87" y="131.20" width="5.8" height="1.4" fill="#548235"/><rect x="982.73" y="131.20" width="5.8" height="1.4" fill="#548235"/><rect x="992.59" y="131.20" width="5.8" height="1.4" fill="#548235"/><rect x="1002.45" y="131.20" width="5.8" height="1.4" fill="#548235"/><rect x="963.01" y="138.60" width="5.8" height="1.4" fill="#658e49"/><rect x="972.87" y="138.60" width="5.8" height="1.4" fill="#658e49"/><rect x="982.73" y="138.60" width="5.8" height="1.4" fill="#658e49"/><rect x="992.59" y="138.60" width="5.8" height="1.4" fill="#658e49"/><rect x="1002.45" y="138.60" width="5.8" height="1.4" fill="#658e49"/><rect x="960.98" y="149.60" width="49.30" height="7.40" fill="#70AD47"/><rect x="960.98" y="156.50" width="49.30" height="1" fill="#8dbd6c"/><rect x="960.98" y="163.90" width="49.30" height="1" fill="#8dbd6c"/><rect x="960.98" y="171.30" width="49.30" height="1" fill="#8dbd6c"/><rect x="960.98" y="178.70" width="49.30" height="1" fill="#8dbd6c"/><rect x="961.48" y="150.10" width="48.30" height="36.00" fill="none" stroke="#70AD47" stroke-width="1.0"/><rect x="963.01" y="152.60" width="5.8" height="1.4" fill="#f4f4f4"/><rect x="972.87" y="152.60" width="5.8" height="1.4" fill="#f4f4f4"/><rect x="982.73" y="152.60" width="5.8" height="1.4" fill="#f4f4f4"/><rect x="992.59" y="152.60" width="5.8" height="1.4" fill="#f4f4f4"/><rect x="1002.45" y="152.60" width="5.8" height="1.4" fill="#f4f4f4"/><rect x="963.01" y="160.00" width="5.8" height="1.4" fill="#333333"/><rect x="972.87" y="160.00" width="5.8" height="1.4" fill="#333333"/><rect x="982.73" y="160.00" width="5.8" height="1.4" fill="#333333"/><rect x="992.59" y="160.00" width="5.8" height="1.4" fill="#333333"/><rect x="1002.45" y="160.00" width="5.8" height="1.4" fill="#333333"/><rect x="963.01" y="167.40" width="5.8" height="1.4" fill="#777777"/><rect x="972.87" y="167.40" width="5.8" height="1.4" fill="#777777"/><rect x="982.73" y="167.40" width="5.8" height="1.4" fill="#777777"/><rect x="992.59" y="167.40" width="5.8" height="1.4" fill="#777777"/><rect x="1002.45" y="167.40" width="5.8" height="1.4" fill="#777777"/><rect x="963.01" y="174.80" width="5.8" height="1.4" fill="#999999"/><rect x="972.87" y="174.80" width="5.8" height="1.4" fill="#999999"/><rect x="982.73" y="174.80" width="5.8" height="1.4" fill="#999999"/><rect x="992.59" y="174.80" width="5.8" height="1.4" fill="#999999"/><rect x="1002.45" y="174.80" width="5.8" height="1.4" fill="#999999"/><rect x="963.01" y="182.20" width="5.8" height="1.4" fill="#333333"/><rect x="972.87" y="182.20" width="5.8" height="1.4" fill="#333333"/><rect x="982.73" y="182.20" width="5.8" height="1.4" fill="#333333"/><rect x="992.59" y="182.20" width="5.8" height="1.4" fill="#333333"/><rect x="1002.45" y="182.20" width="5.8" height="1.4" fill="#333333"/><rect x="960.98" y="200.60" width="49.30" height="7.40" fill="#E2EFDA"/><rect x="960.98" y="215.40" width="49.30" height="7.40" fill="#E2EFDA"/><rect x="960.98" y="200.10" width="49.30" height="1" fill="#94c275"/><rect x="960.98" y="207.50" width="49.30" height="1" fill="#94c275"/><rect x="960.98" y="214.90" width="49.30" height="1" fill="#94c275"/><rect x="960.98" y="222.30" width="49.30" height="1" fill="#94c275"/><rect x="970.34" y="193.20" width="1" height="37.00" fill="#94c275"/><rect x="980.20" y="193.20" width="1" height="37.00" fill="#94c275"/><rect x="990.06" y="193.20" width="1" height="37.00" fill="#94c275"/><rect x="999.92" y="193.20" width="1" height="37.00" fill="#94c275"/><rect x="961.48" y="193.70" width="48.30" height="36.00" fill="none" stroke="#70AD47" stroke-width="1.0"/><rect x="963.01" y="196.20" width="5.8" height="1.4" fill="#808080"/><rect x="972.87" y="196.20" width="5.8" height="1.4" fill="#808080"/><rect x="982.73" y="196.20" width="5.8" height="1.4" fill="#808080"/><rect x="992.59" y="196.20" width="5.8" height="1.4" fill="#808080"/><rect x="1002.45" y="196.20" width="5.8" height="1.4" fill="#808080"/><rect x="963.01" y="203.60" width="5.8" height="1.4" fill="#555555"/><rect x="972.87" y="203.60" width="5.8" height="1.4" fill="#555555"/><rect x="982.73" y="203.60" width="5.8" height="1.4" fill="#555555"/><rect x="992.59" y="203.60" width="5.8" height="1.4" fill="#555555"/><rect x="1002.45" y="203.60" width="5.8" height="1.4" fill="#555555"/><rect x="963.01" y="211.00" width="5.8" height="1.4" fill="#222222"/><rect x="972.87" y="211.00" width="5.8" height="1.4" fill="#222222"/><rect x="982.73" y="211.00" width="5.8" height="1.4" fill="#222222"/><rect x="992.59" y="211.00" width="5.8" height="1.4" fill="#222222"/><rect x="1002.45" y="211.00" width="5.8" height="1.4" fill="#222222"/><rect x="963.01" y="218.40" width="5.8" height="1.4" fill="#555555"/><rect x="972.87" y="218.40" width="5.8" height="1.4" fill="#555555"/><rect x="982.73" y="218.40" width="5.8" height="1.4" fill="#555555"/><rect x="992.59" y="218.40" width="5.8" height="1.4" fill="#555555"/><rect x="1002.45" y="218.40" width="5.8" height="1.4" fill="#555555"/><rect x="963.01" y="225.80" width="5.8" height="1.4" fill="#888888"/><rect x="972.87" y="225.80" width="5.8" height="1.4" fill="#888888"/><rect x="982.73" y="225.80" width="5.8" height="1.4" fill="#888888"/><rect x="992.59" y="225.80" width="5.8" height="1.4" fill="#888888"/><rect x="1002.45" y="225.80" width="5.8" height="1.4" fill="#888888"/><rect x="960.98" y="262.20" width="49.30" height="7.40" fill="#E2EFDA"/><rect x="960.98" y="277.00" width="49.30" height="7.40" fill="#E2EFDA"/><rect x="960.98" y="254.80" width="49.30" height="7.40" fill="#70AD47"/><rect x="960.98" y="269.10" width="49.30" height="1" fill="#A9D08E"/><rect x="960.98" y="276.50" width="49.30" height="1" fill="#A9D08E"/><rect x="960.98" y="283.90" width="49.30" height="1" fill="#A9D08E"/><rect x="961.48" y="255.30" width="48.30" height="36.00" fill="none" stroke="#A9D08E" stroke-width="1.0"/><rect x="963.01" y="257.80" width="5.8" height="1.4" fill="#e8e8e8"/><rect x="972.87" y="257.80" width="5.8" height="1.4" fill="#e8e8e8"/><rect x="982.73" y="257.80" width="5.8" height="1.4" fill="#e8e8e8"/><rect x="992.59" y="257.80" width="5.8" height="1.4" fill="#e8e8e8"/><rect x="1002.45" y="257.80" width="5.8" height="1.4" fill="#e8e8e8"/><rect x="963.01" y="265.20" width="5.8" height="1.4" fill="#444444"/><rect x="972.87" y="265.20" width="5.8" height="1.4" fill="#444444"/><rect x="982.73" y="265.20" width="5.8" height="1.4" fill="#444444"/><rect x="992.59" y="265.20" width="5.8" height="1.4" fill="#444444"/><rect x="1002.45" y="265.20" width="5.8" height="1.4" fill="#444444"/><rect x="963.01" y="272.60" width="5.8" height="1.4" fill="#888888"/><rect x="972.87" y="272.60" width="5.8" height="1.4" fill="#888888"/><rect x="982.73" y="272.60" width="5.8" height="1.4" fill="#888888"/><rect x="992.59" y="272.60" width="5.8" height="1.4" fill="#888888"/><rect x="1002.45" y="272.60" width="5.8" height="1.4" fill="#888888"/><rect x="963.01" y="280.00" width="5.8" height="1.4" fill="#555555"/><rect x="972.87" y="280.00" width="5.8" height="1.4" fill="#555555"/><rect x="982.73" y="280.00" width="5.8" height="1.4" fill="#555555"/><rect x="992.59" y="280.00" width="5.8" height="1.4" fill="#555555"/><rect x="1002.45" y="280.00" width="5.8" height="1.4" fill="#555555"/><rect x="963.01" y="287.40" width="5.8" height="1.4" fill="#222222"/><rect x="972.87" y="287.40" width="5.8" height="1.4" fill="#222222"/><rect x="982.73" y="287.40" width="5.8" height="1.4" fill="#222222"/><rect x="992.59" y="287.40" width="5.8" height="1.4" fill="#222222"/><rect x="1002.45" y="287.40" width="5.8" height="1.4" fill="#222222"/><rect x="960.98" y="298.40" width="49.30" height="7.40" fill="#70AD47"/><rect x="960.98" y="305.80" width="49.30" height="7.40" fill="#C6E0B4"/><rect x="960.98" y="313.20" width="49.30" height="7.40" fill="#E2EFDA"/><rect x="960.98" y="320.60" width="49.30" height="7.40" fill="#C6E0B4"/><rect x="960.98" y="328.00" width="49.30" height="7.40" fill="#E2EFDA"/><rect x="960.98" y="305.30" width="49.30" height="1" fill="#ffffff"/><rect x="960.98" y="312.70" width="49.30" height="1" fill="#ffffff"/><rect x="960.98" y="320.10" width="49.30" height="1" fill="#ffffff"/><rect x="960.98" y="327.50" width="49.30" height="1" fill="#ffffff"/><rect x="970.34" y="298.40" width="1" height="37.00" fill="#ffffff"/><rect x="980.20" y="298.40" width="1" height="37.00" fill="#ffffff"/><rect x="990.06" y="298.40" width="1" height="37.00" fill="#ffffff"/><rect x="999.92" y="298.40" width="1" height="37.00" fill="#ffffff"/><rect x="963.01" y="301.40" width="5.8" height="1.4" fill="#b0d29a"/><rect x="972.87" y="301.40" width="5.8" height="1.4" fill="#b0d29a"/><rect x="982.73" y="301.40" width="5.8" height="1.4" fill="#b0d29a"/><rect x="992.59" y="301.40" width="5.8" height="1.4" fill="#b0d29a"/><rect x="1002.45" y="301.40" width="5.8" height="1.4" fill="#b0d29a"/><rect x="963.01" y="308.80" width="5.8" height="1.4" fill="#444444"/><rect x="972.87" y="308.80" width="5.8" height="1.4" fill="#444444"/><rect x="982.73" y="308.80" width="5.8" height="1.4" fill="#444444"/><rect x="992.59" y="308.80" width="5.8" height="1.4" fill="#444444"/><rect x="1002.45" y="308.80" width="5.8" height="1.4" fill="#444444"/><rect x="963.01" y="316.20" width="5.8" height="1.4" fill="#333333"/><rect x="972.87" y="316.20" width="5.8" height="1.4" fill="#333333"/><rect x="982.73" y="316.20" width="5.8" height="1.4" fill="#333333"/><rect x="992.59" y="316.20" width="5.8" height="1.4" fill="#333333"/><rect x="1002.45" y="316.20" width="5.8" height="1.4" fill="#333333"/><rect x="963.01" y="323.60" width="5.8" height="1.4" fill="#666666"/><rect x="972.87" y="323.60" width="5.8" height="1.4" fill="#666666"/><rect x="982.73" y="323.60" width="5.8" height="1.4" fill="#666666"/><rect x="992.59" y="323.60" width="5.8" height="1.4" fill="#666666"/><rect x="1002.45" y="323.60" width="5.8" height="1.4" fill="#666666"/><rect x="963.01" y="331.00" width="5.8" height="1.4" fill="#555555"/><rect x="972.87" y="331.00" width="5.8" height="1.4" fill="#555555"/><rect x="982.73" y="331.00" width="5.8" height="1.4" fill="#555555"/><rect x="992.59" y="331.00" width="5.8" height="1.4" fill="#555555"/><rect x="1002.45" y="331.00" width="5.8" height="1.4" fill="#555555"/><rect x="960.98" y="349.40" width="49.30" height="7.40" fill="#D9D9D9"/><rect x="960.98" y="364.20" width="49.30" height="7.40" fill="#D9D9D9"/><rect x="960.98" y="342.00" width="49.30" height="7.40" fill="#70AD47"/><rect x="960.98" y="342.00" width="49.30" height="1.5" fill="#111111"/><rect x="960.98" y="348.65" width="49.30" height="1.5" fill="#111111"/><rect x="960.98" y="377.50" width="49.30" height="1.5" fill="#777777"/><rect x="963.01" y="345.00" width="5.8" height="1.4" fill="#ffffff"/><rect x="972.87" y="345.00" width="5.8" height="1.4" fill="#ffffff"/><rect x="982.73" y="345.00" width="5.8" height="1.4" fill="#ffffff"/><rect x="992.59" y="345.00" width="5.8" height="1.4" fill="#ffffff"/><rect x="1002.45" y="345.00" width="5.8" height="1.4" fill="#ffffff"/><rect x="963.01" y="352.40" width="5.8" height="1.4" fill="#777777"/><rect x="972.87" y="352.40" width="5.8" height="1.4" fill="#777777"/><rect x="982.73" y="352.40" width="5.8" height="1.4" fill="#777777"/><rect x="992.59" y="352.40" width="5.8" height="1.4" fill="#777777"/><rect x="1002.45" y="352.40" width="5.8" height="1.4" fill="#777777"/><rect x="963.01" y="359.80" width="5.8" height="1.4" fill="#444444"/><rect x="972.87" y="359.80" width="5.8" height="1.4" fill="#444444"/><rect x="982.73" y="359.80" width="5.8" height="1.4" fill="#444444"/><rect x="992.59" y="359.80" width="5.8" height="1.4" fill="#444444"/><rect x="1002.45" y="359.80" width="5.8" height="1.4" fill="#444444"/><rect x="963.01" y="367.20" width="5.8" height="1.4" fill="#444444"/><rect x="972.87" y="367.20" width="5.8" height="1.4" fill="#444444"/><rect x="982.73" y="367.20" width="5.8" height="1.4" fill="#444444"/><rect x="992.59" y="367.20" width="5.8" height="1.4" fill="#444444"/><rect x="1002.45" y="367.20" width="5.8" height="1.4" fill="#444444"/><rect x="963.01" y="374.60" width="5.8" height="1.4" fill="#777777"/><rect x="972.87" y="374.60" width="5.8" height="1.4" fill="#777777"/><rect x="982.73" y="374.60" width="5.8" height="1.4" fill="#777777"/><rect x="992.59" y="374.60" width="5.8" height="1.4" fill="#777777"/><rect x="1002.45" y="374.60" width="5.8" height="1.4" fill="#777777"/><rect x="960.98" y="385.60" width="49.30" height="7.40" fill="#E2EFDA"/><rect x="960.98" y="393.00" width="49.30" height="7.40" fill="#C6E0B4"/><rect x="960.98" y="400.40" width="49.30" height="7.40" fill="#E2EFDA"/><rect x="960.98" y="407.80" width="49.30" height="7.40" fill="#C6E0B4"/><rect x="960.98" y="415.20" width="49.30" height="7.40" fill="#E2EFDA"/><rect x="960.98" y="392.50" width="49.30" height="1" fill="#A9D08E"/><rect x="960.98" y="399.90" width="49.30" height="1" fill="#A9D08E"/><rect x="960.98" y="407.30" width="49.30" height="1" fill="#A9D08E"/><rect x="960.98" y="414.70" width="49.30" height="1" fill="#A9D08E"/><rect x="970.34" y="385.60" width="1" height="37.00" fill="#A9D08E"/><rect x="980.20" y="385.60" width="1" height="37.00" fill="#A9D08E"/><rect x="990.06" y="385.60" width="1" height="37.00" fill="#A9D08E"/><rect x="999.92" y="385.60" width="1" height="37.00" fill="#A9D08E"/><rect x="961.48" y="386.10" width="48.30" height="36.00" fill="none" stroke="#A9D08E" stroke-width="1.0"/><rect x="963.01" y="388.60" width="5.8" height="1.4" fill="#444444"/><rect x="972.87" y="388.60" width="5.8" height="1.4" fill="#444444"/><rect x="982.73" y="388.60" width="5.8" height="1.4" fill="#444444"/><rect x="992.59" y="388.60" width="5.8" height="1.4" fill="#444444"/><rect x="1002.45" y="388.60" width="5.8" height="1.4" fill="#444444"/><rect x="963.01" y="396.00" width="5.8" height="1.4" fill="#333333"/><rect x="972.87" y="396.00" width="5.8" height="1.4" fill="#333333"/><rect x="982.73" y="396.00" width="5.8" height="1.4" fill="#333333"/><rect x="992.59" y="396.00" width="5.8" height="1.4" fill="#333333"/><rect x="1002.45" y="396.00" width="5.8" height="1.4" fill="#333333"/><rect x="963.01" y="403.40" width="5.8" height="1.4" fill="#777777"/><rect x="972.87" y="403.40" width="5.8" height="1.4" fill="#777777"/><rect x="982.73" y="403.40" width="5.8" height="1.4" fill="#777777"/><rect x="992.59" y="403.40" width="5.8" height="1.4" fill="#777777"/><rect x="1002.45" y="403.40" width="5.8" height="1.4" fill="#777777"/><rect x="963.01" y="410.80" width="5.8" height="1.4" fill="#444444"/><rect x="972.87" y="410.80" width="5.8" height="1.4" fill="#444444"/><rect x="982.73" y="410.80" width="5.8" height="1.4" fill="#444444"/><rect x="992.59" y="410.80" width="5.8" height="1.4" fill="#444444"/><rect x="1002.45" y="410.80" width="5.8" height="1.4" fill="#444444"/><rect x="963.01" y="418.20" width="5.8" height="1.4" fill="#222222"/><rect x="972.87" y="418.20" width="5.8" height="1.4" fill="#222222"/><rect x="982.73" y="418.20" width="5.8" height="1.4" fill="#222222"/><rect x="992.59" y="418.20" width="5.8" height="1.4" fill="#222222"/><rect x="1002.45" y="418.20" width="5.8" height="1.4" fill="#222222"/><rect x="960.98" y="447.20" width="49.30" height="7.40" fill="#000000"/><rect x="960.98" y="454.60" width="49.30" height="7.40" fill="#548235"/><rect x="960.98" y="462.00" width="49.30" height="7.40" fill="#70AD47"/><rect x="960.98" y="469.40" width="49.30" height="7.40" fill="#548235"/><rect x="960.98" y="476.80" width="49.30" height="7.40" fill="#70AD47"/><rect x="960.98" y="454.50" width="49.30" height="0.8" fill="#777777"/><rect x="963.01" y="450.20" width="5.8" height="1.4" fill="#9a9a9a"/><rect x="972.87" y="450.20" width="5.8" height="1.4" fill="#9a9a9a"/><rect x="982.73" y="450.20" width="5.8" height="1.4" fill="#9a9a9a"/><rect x="992.59" y="450.20" width="5.8" height="1.4" fill="#9a9a9a"/><rect x="1002.45" y="450.20" width="5.8" height="1.4" fill="#9a9a9a"/><rect x="963.01" y="457.60" width="5.8" height="1.4" fill="#c8c8c8"/><rect x="972.87" y="457.60" width="5.8" height="1.4" fill="#c8c8c8"/><rect x="982.73" y="457.60" width="5.8" height="1.4" fill="#c8c8c8"/><rect x="992.59" y="457.60" width="5.8" height="1.4" fill="#c8c8c8"/><rect x="1002.45" y="457.60" width="5.8" height="1.4" fill="#c8c8c8"/><rect x="963.01" y="465.00" width="5.8" height="1.4" fill="#ffffff"/><rect x="972.87" y="465.00" width="5.8" height="1.4" fill="#ffffff"/><rect x="982.73" y="465.00" width="5.8" height="1.4" fill="#ffffff"/><rect x="992.59" y="465.00" width="5.8" height="1.4" fill="#ffffff"/><rect x="1002.45" y="465.00" width="5.8" height="1.4" fill="#ffffff"/><rect x="963.01" y="472.40" width="5.8" height="1.4" fill="#ffffff"/><rect x="972.87" y="472.40" width="5.8" height="1.4" fill="#ffffff"/><rect x="982.73" y="472.40" width="5.8" height="1.4" fill="#ffffff"/><rect x="992.59" y="472.40" width="5.8" height="1.4" fill="#ffffff"/><rect x="1002.45" y="472.40" width="5.8" height="1.4" fill="#ffffff"/><rect x="963.01" y="479.80" width="5.8" height="1.4" fill="#d0d0d0"/><rect x="972.87" y="479.80" width="5.8" height="1.4" fill="#d0d0d0"/><rect x="982.73" y="479.80" width="5.8" height="1.4" fill="#d0d0d0"/><rect x="992.59" y="479.80" width="5.8" height="1.4" fill="#d0d0d0"/><rect x="1002.45" y="479.80" width="5.8" height="1.4" fill="#d0d0d0"/><rect x="626.00" y="490.80" width="49.30" height="7.40" fill="#000000"/><rect x="626.00" y="498.20" width="49.30" height="7.40" fill="#A6A6A6"/><rect x="626.00" y="505.60" width="49.30" height="7.40" fill="#D9D9D9"/><rect x="626.00" y="513.00" width="49.30" height="7.40" fill="#A6A6A6"/><rect x="626.00" y="520.40" width="49.30" height="7.40" fill="#D9D9D9"/><rect x="628.03" y="493.80" width="5.8" height="1.4" fill="#ffffff"/><rect x="637.89" y="493.80" width="5.8" height="1.4" fill="#ffffff"/><rect x="647.75" y="493.80" width="5.8" height="1.4" fill="#ffffff"/><rect x="657.61" y="493.80" width="5.8" height="1.4" fill="#ffffff"/><rect x="667.47" y="493.80" width="5.8" height="1.4" fill="#ffffff"/><rect x="628.03" y="501.20" width="5.8" height="1.4" fill="#444444"/><rect x="637.89" y="501.20" width="5.8" height="1.4" fill="#444444"/><rect x="647.75" y="501.20" width="5.8" height="1.4" fill="#444444"/><rect x="657.61" y="501.20" width="5.8" height="1.4" fill="#444444"/><rect x="667.47" y="501.20" width="5.8" height="1.4" fill="#444444"/><rect x="628.03" y="508.60" width="5.8" height="1.4" fill="#777777"/><rect x="637.89" y="508.60" width="5.8" height="1.4" fill="#777777"/><rect x="647.75" y="508.60" width="5.8" height="1.4" fill="#777777"/><rect x="657.61" y="508.60" width="5.8" height="1.4" fill="#777777"/><rect x="667.47" y="508.60" width="5.8" height="1.4" fill="#777777"/><rect x="628.03" y="516.00" width="5.8" height="1.4" fill="#222222"/><rect x="637.89" y="516.00" width="5.8" height="1.4" fill="#222222"/><rect x="647.75" y="516.00" width="5.8" height="1.4" fill="#222222"/><rect x="657.61" y="516.00" width="5.8" height="1.4" fill="#222222"/><rect x="667.47" y="516.00" width="5.8" height="1.4" fill="#222222"/><rect x="628.03" y="523.40" width="5.8" height="1.4" fill="#333333"/><rect x="637.89" y="523.40" width="5.8" height="1.4" fill="#333333"/><rect x="647.75" y="523.40" width="5.8" height="1.4" fill="#333333"/><rect x="657.61" y="523.40" width="5.8" height="1.4" fill="#333333"/><rect x="667.47" y="523.40" width="5.8" height="1.4" fill="#333333"/><rect x="681.83" y="490.80" width="49.30" height="7.40" fill="#ED7D31"/><rect x="681.83" y="498.20" width="49.30" height="7.40" fill="#BDD7EE"/><rect x="681.83" y="505.60" width="49.30" height="7.40" fill="#DDEBF7"/><rect x="681.83" y="513.00" width="49.30" height="7.40" fill="#BDD7EE"/><rect x="681.83" y="520.40" width="49.30" height="7.40" fill="#DDEBF7"/><rect x="683.86" y="493.80" width="5.8" height="1.4" fill="#ffffff"/><rect x="693.72" y="493.80" width="5.8" height="1.4" fill="#ffffff"/><rect x="703.58" y="493.80" width="5.8" height="1.4" fill="#ffffff"/><rect x="713.44" y="493.80" width="5.8" height="1.4" fill="#ffffff"/><rect x="723.30" y="493.80" width="5.8" height="1.4" fill="#ffffff"/><rect x="683.86" y="501.20" width="5.8" height="1.4" fill="#444444"/><rect x="693.72" y="501.20" width="5.8" height="1.4" fill="#444444"/><rect x="703.58" y="501.20" width="5.8" height="1.4" fill="#444444"/><rect x="713.44" y="501.20" width="5.8" height="1.4" fill="#444444"/><rect x="723.30" y="501.20" width="5.8" height="1.4" fill="#444444"/><rect x="683.86" y="508.60" width="5.8" height="1.4" fill="#777777"/><rect x="693.72" y="508.60" width="5.8" height="1.4" fill="#777777"/><rect x="703.58" y="508.60" width="5.8" height="1.4" fill="#777777"/><rect x="713.44" y="508.60" width="5.8" height="1.4" fill="#777777"/><rect x="723.30" y="508.60" width="5.8" height="1.4" fill="#777777"/><rect x="683.86" y="516.00" width="5.8" height="1.4" fill="#222222"/><rect x="693.72" y="516.00" width="5.8" height="1.4" fill="#222222"/><rect x="703.58" y="516.00" width="5.8" height="1.4" fill="#222222"/><rect x="713.44" y="516.00" width="5.8" height="1.4" fill="#222222"/><rect x="723.30" y="516.00" width="5.8" height="1.4" fill="#222222"/><rect x="683.86" y="523.40" width="5.8" height="1.4" fill="#333333"/><rect x="693.72" y="523.40" width="5.8" height="1.4" fill="#333333"/><rect x="703.58" y="523.40" width="5.8" height="1.4" fill="#333333"/><rect x="713.44" y="523.40" width="5.8" height="1.4" fill="#333333"/><rect x="723.30" y="523.40" width="5.8" height="1.4" fill="#333333"/><rect x="737.66" y="490.80" width="49.30" height="7.40" fill="#FFC000"/><rect x="737.66" y="498.20" width="49.30" height="7.40" fill="#DBDBDB"/><rect x="737.66" y="505.60" width="49.30" height="7.40" fill="#EDEDED"/><rect x="737.66" y="513.00" width="49.30" height="7.40" fill="#DBDBDB"/><rect x="737.66" y="520.40" width="49.30" height="7.40" fill="#EDEDED"/><rect x="739.69" y="493.80" width="5.8" height="1.4" fill="#ffffff"/><rect x="749.55" y="493.80" width="5.8" height="1.4" fill="#ffffff"/><rect x="759.41" y="493.80" width="5.8" height="1.4" fill="#ffffff"/><rect x="769.27" y="493.80" width="5.8" height="1.4" fill="#ffffff"/><rect x="779.13" y="493.80" width="5.8" height="1.4" fill="#ffffff"/><rect x="739.69" y="501.20" width="5.8" height="1.4" fill="#444444"/><rect x="749.55" y="501.20" width="5.8" height="1.4" fill="#444444"/><rect x="759.41" y="501.20" width="5.8" height="1.4" fill="#444444"/><rect x="769.27" y="501.20" width="5.8" height="1.4" fill="#444444"/><rect x="779.13" y="501.20" width="5.8" height="1.4" fill="#444444"/><rect x="739.69" y="508.60" width="5.8" height="1.4" fill="#777777"/><rect x="749.55" y="508.60" width="5.8" height="1.4" fill="#777777"/><rect x="759.41" y="508.60" width="5.8" height="1.4" fill="#777777"/><rect x="769.27" y="508.60" width="5.8" height="1.4" fill="#777777"/><rect x="779.13" y="508.60" width="5.8" height="1.4" fill="#777777"/><rect x="739.69" y="516.00" width="5.8" height="1.4" fill="#222222"/><rect x="749.55" y="516.00" width="5.8" height="1.4" fill="#222222"/><rect x="759.41" y="516.00" width="5.8" height="1.4" fill="#222222"/><rect x="769.27" y="516.00" width="5.8" height="1.4" fill="#222222"/><rect x="779.13" y="516.00" width="5.8" height="1.4" fill="#222222"/><rect x="739.69" y="523.40" width="5.8" height="1.4" fill="#333333"/><rect x="749.55" y="523.40" width="5.8" height="1.4" fill="#333333"/><rect x="759.41" y="523.40" width="5.8" height="1.4" fill="#333333"/><rect x="769.27" y="523.40" width="5.8" height="1.4" fill="#333333"/><rect x="779.13" y="523.40" width="5.8" height="1.4" fill="#333333"/><rect x="793.49" y="490.80" width="49.30" height="7.40" fill="#70AD47"/><rect x="793.49" y="498.20" width="49.30" height="7.40" fill="#B4C6E7"/><rect x="793.49" y="505.60" width="49.30" height="7.40" fill="#D9E1F2"/><rect x="793.49" y="513.00" width="49.30" height="7.40" fill="#B4C6E7"/><rect x="793.49" y="520.40" width="49.30" height="7.40" fill="#D9E1F2"/><rect x="795.52" y="493.80" width="5.8" height="1.4" fill="#ffffff"/><rect x="805.38" y="493.80" width="5.8" height="1.4" fill="#ffffff"/><rect x="815.24" y="493.80" width="5.8" height="1.4" fill="#ffffff"/><rect x="825.10" y="493.80" width="5.8" height="1.4" fill="#ffffff"/><rect x="834.96" y="493.80" width="5.8" height="1.4" fill="#ffffff"/><rect x="795.52" y="501.20" width="5.8" height="1.4" fill="#444444"/><rect x="805.38" y="501.20" width="5.8" height="1.4" fill="#444444"/><rect x="815.24" y="501.20" width="5.8" height="1.4" fill="#444444"/><rect x="825.10" y="501.20" width="5.8" height="1.4" fill="#444444"/><rect x="834.96" y="501.20" width="5.8" height="1.4" fill="#444444"/><rect x="795.52" y="508.60" width="5.8" height="1.4" fill="#777777"/><rect x="805.38" y="508.60" width="5.8" height="1.4" fill="#777777"/><rect x="815.24" y="508.60" width="5.8" height="1.4" fill="#777777"/><rect x="825.10" y="508.60" width="5.8" height="1.4" fill="#777777"/><rect x="834.96" y="508.60" width="5.8" height="1.4" fill="#777777"/><rect x="795.52" y="516.00" width="5.8" height="1.4" fill="#222222"/><rect x="805.38" y="516.00" width="5.8" height="1.4" fill="#222222"/><rect x="815.24" y="516.00" width="5.8" height="1.4" fill="#222222"/><rect x="825.10" y="516.00" width="5.8" height="1.4" fill="#222222"/><rect x="834.96" y="516.00" width="5.8" height="1.4" fill="#222222"/><rect x="795.52" y="523.40" width="5.8" height="1.4" fill="#333333"/><rect x="805.38" y="523.40" width="5.8" height="1.4" fill="#333333"/><rect x="815.24" y="523.40" width="5.8" height="1.4" fill="#333333"/><rect x="825.10" y="523.40" width="5.8" height="1.4" fill="#333333"/><rect x="834.96" y="523.40" width="5.8" height="1.4" fill="#333333"/></svg><div class="r" style="left:623px;top:531px;width:401px;height:1px;background:#e1e1e1;"></div><svg class="r" style="left:0;top:0" width="1024" height="575" viewBox="0 0 1024 575"><rect x="628.1" y="538.4" width="9.6" height="9.4" fill="#b9d0ec" stroke="#7a7a7a" stroke-width="1"/><line x1="628.1" y1="541.5" x2="637.7" y2="541.5" stroke="#ffffff" stroke-width="0.8"/><line x1="628.1" y1="544.6" x2="637.7" y2="544.6" stroke="#ffffff" stroke-width="0.8"/><line x1="631.3" y1="538.4" x2="631.3" y2="547.8" stroke="#ffffff" stroke-width="0.8"/><line x1="634.5" y1="538.4" x2="634.5" y2="547.8" stroke="#ffffff" stroke-width="0.8"/><circle cx="628.2" cy="538.2" r="2.2" fill="#f5c86a"/><rect x="628.1" y="557.5" width="9.6" height="9.8" fill="#ffffff" stroke="#7a7a7a" stroke-width="1"/><path d="M630.6,565 q2,-0.4 2.6,-2.6 l1.6,-1.4" fill="none" stroke="#4a86c8" stroke-width="1.3"/><polygon points="636.4,559.6 633.6,560.2 635.8,562.4" fill="#4a86c8"/><circle cx="628.2" cy="557.6" r="2.2" fill="#f5c86a"/></svg><svg class="r" style="left:814px;top:570px;" width="20" height="5" viewBox="0 0 20 5"><rect x="2" y="2" width="2" height="2" fill="#a8a8a8"/><rect x="6" y="2" width="2" height="2" fill="#a8a8a8"/><rect x="10" y="2" width="2" height="2" fill="#a8a8a8"/><rect x="14" y="2" width="2" height="2" fill="#a8a8a8"/></svg><svg class="r" style="left:0;top:0;font-family:'Liberation Sans'" width="1024" height="575" viewBox="0 0 1024 575"><text x="630.20" y="96.90" font-size="10.00" fill="#5f5f5f" text-anchor="start" font-weight="bold" stroke="#5f5f5f" stroke-width="0.05" textLength="22.60" lengthAdjust="spacingAndGlyphs">Claro</text><text x="630.20" y="245.90" font-size="10.00" fill="#5f5f5f" text-anchor="start" font-weight="bold" stroke="#5f5f5f" stroke-width="0.05" textLength="27.90" lengthAdjust="spacingAndGlyphs">Medio</text><text x="630.20" y="438.30" font-size="10.00" fill="#5f5f5f" text-anchor="start" font-weight="bold" stroke="#5f5f5f" stroke-width="0.05" textLength="31.68" lengthAdjust="spacingAndGlyphs">Oscuro</text><text x="648.00" y="545.80" font-size="9.90" fill="#444444" text-anchor="start" stroke="#444444" stroke-width="0.08" textLength="96.64" lengthAdjust="spacingAndGlyphs"><tspan text-decoration="underline">N</tspan>uevo estilo de tabla...</text><text x="648.00" y="565.00" font-size="9.90" fill="#444444" text-anchor="start" stroke="#444444" stroke-width="0.08" textLength="138.75" lengthAdjust="spacingAndGlyphs">Nuevo <tspan text-decoration="underline">e</tspan>stilo de tabla dinámica...</text></svg><svg class="r" style="left:0;top:0" width="1024" height="575" viewBox="0 0 1024 575"><rect x="633.5" y="26.5" width="70" height="56.5" fill="none" stroke="#ff0000" stroke-width="3"/><line x1="695.0" y1="86.5" x2="895.3" y2="286.1" stroke="#ff0000" stroke-width="2.9"/><polygon points="902.0,292.8 891.0,287.5 896.7,281.8" fill="#ff0000"/></svg></body></html>
